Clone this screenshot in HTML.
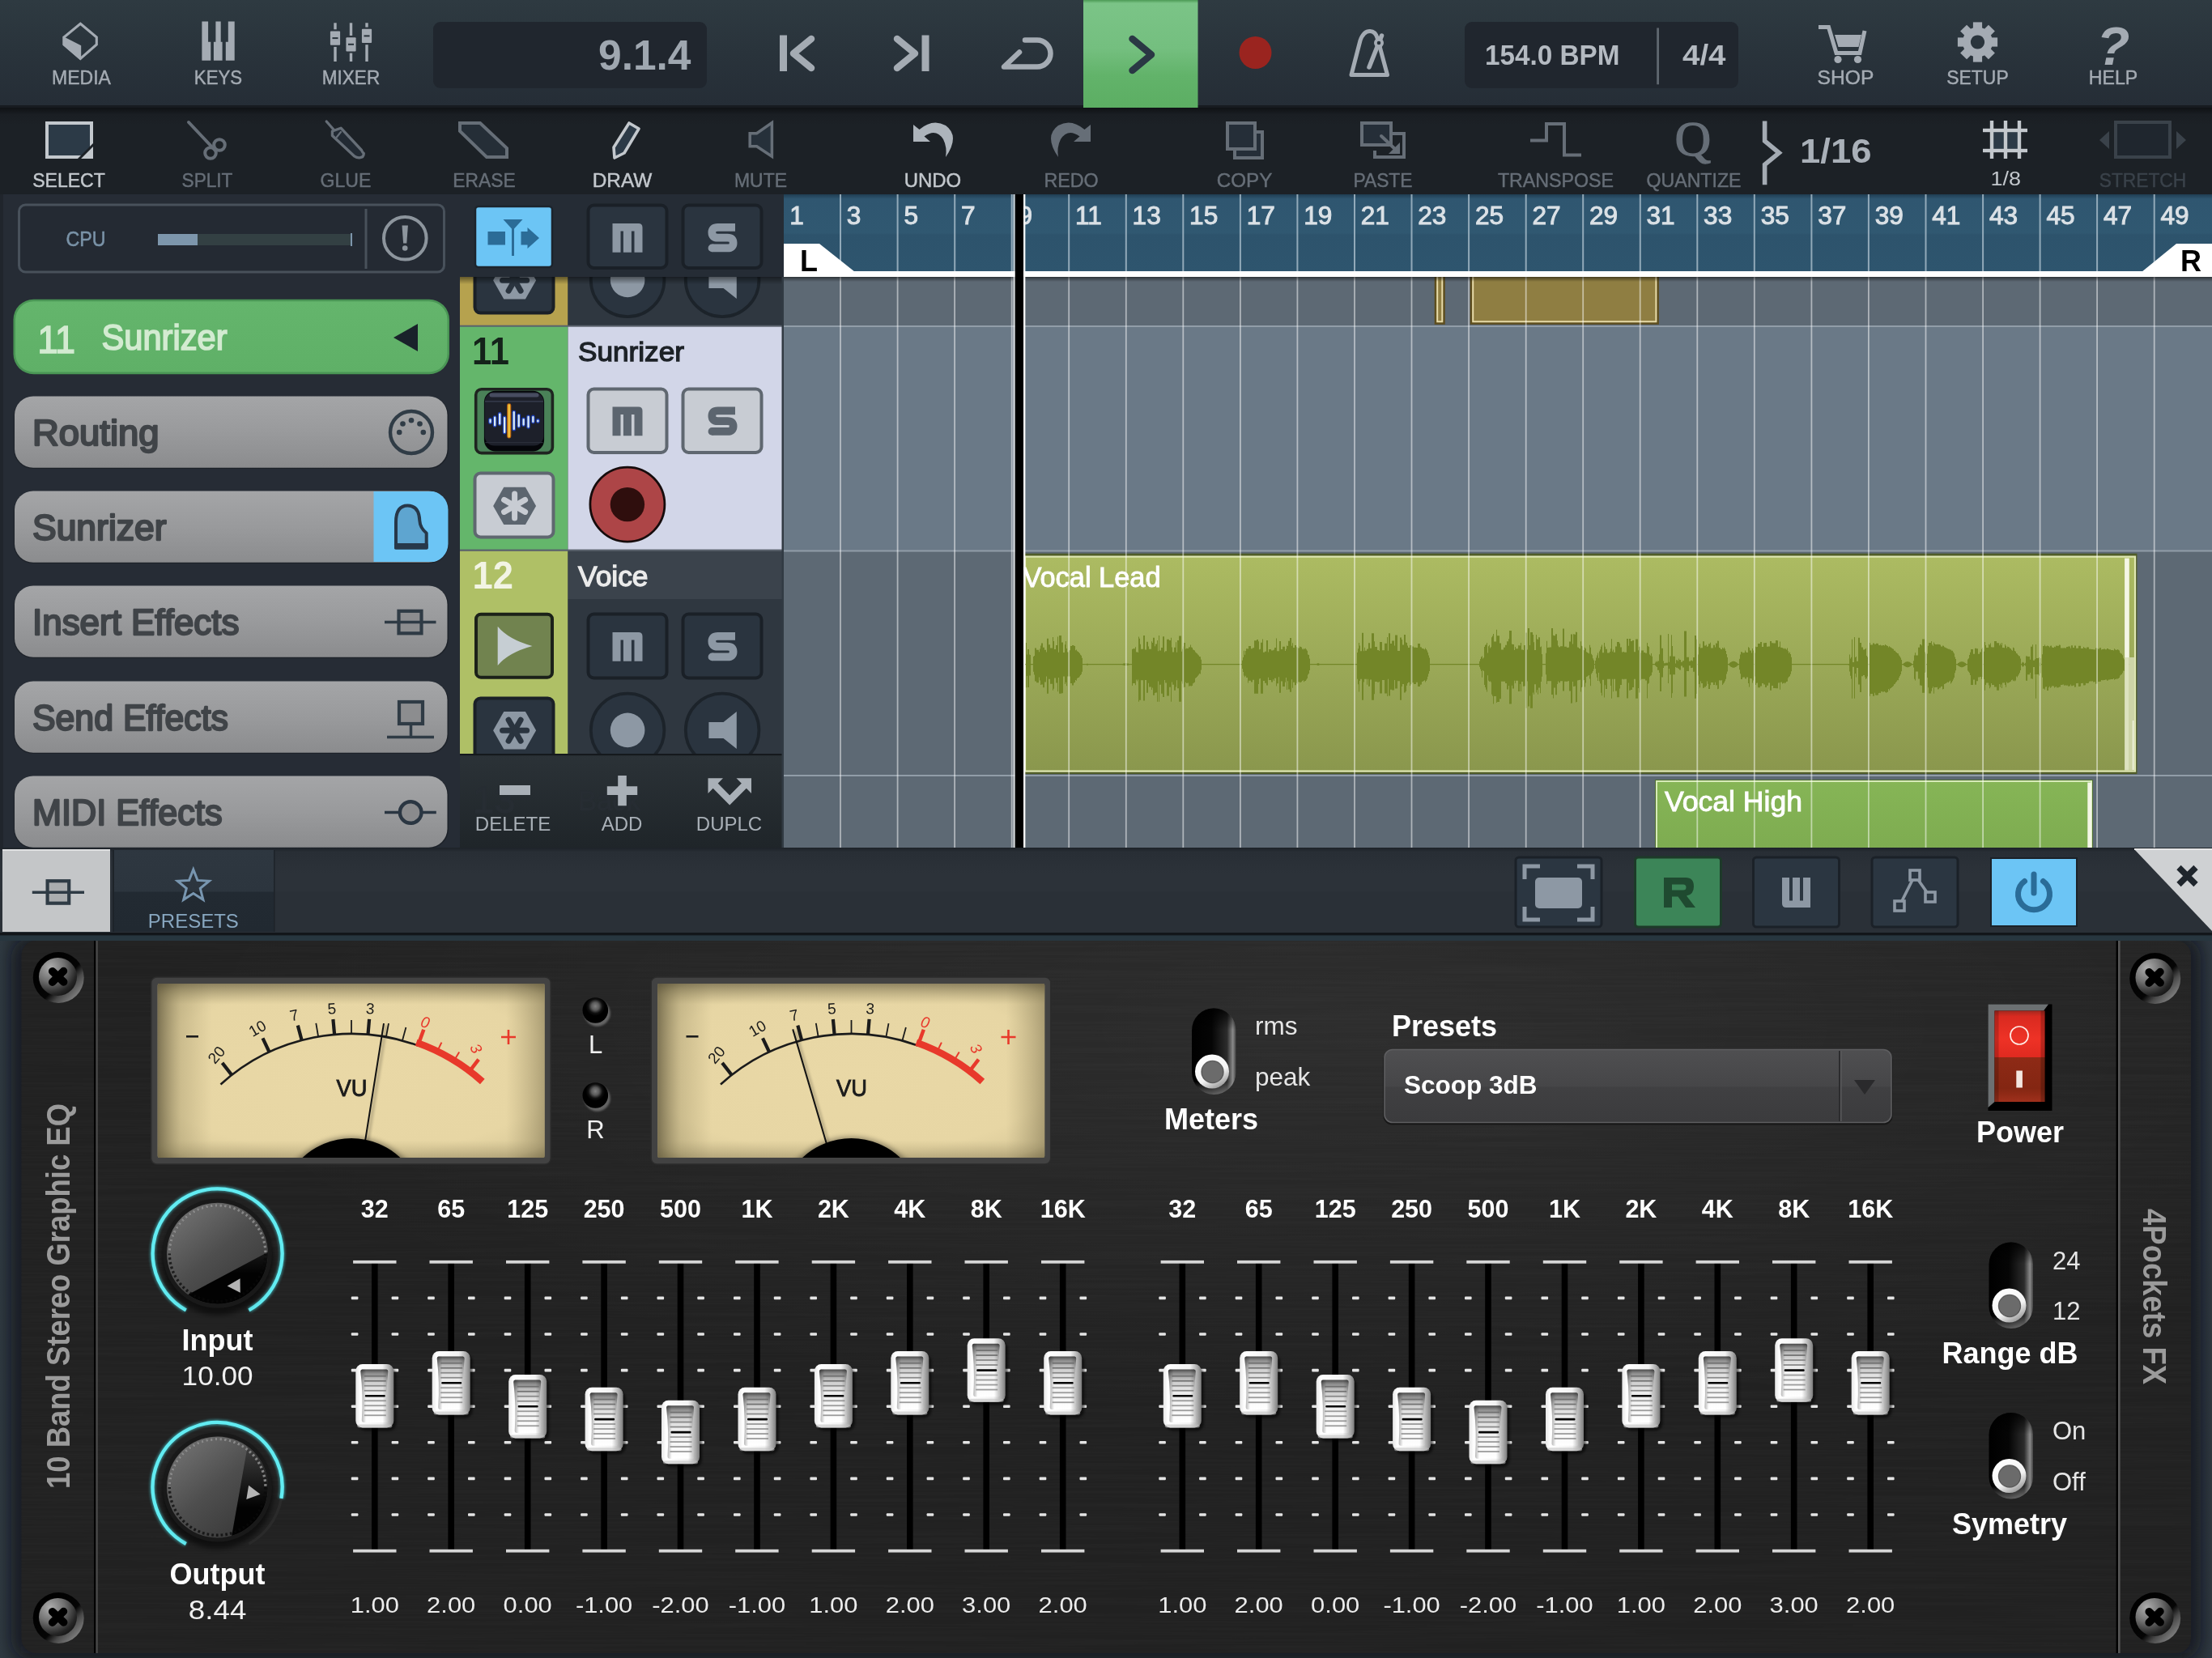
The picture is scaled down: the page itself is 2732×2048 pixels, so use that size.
<!DOCTYPE html>
<html lang="en"><head><meta charset="utf-8"><title>Cubasis - 10 Band Stereo Graphic EQ</title>
<style>
html,body{margin:0;padding:0;background:#232a31;}
body{width:2732px;height:2048px;position:relative;overflow:hidden;font-family:"Liberation Sans",sans-serif;}
svg{position:absolute;display:block;overflow:hidden;will-change:transform}
svg text{font-family:"Liberation Sans",sans-serif;}
.serif{font-family:"Liberation Serif",serif !important;}
</style></head><body>
<svg id="topbar" style="left:0;top:0" width="2732" height="240" viewBox="0 0 2732 240">
<defs>
<linearGradient id="gTop" x1="0" y1="0" x2="0" y2="1"><stop offset="0" stop-color="#2e3a41"/><stop offset="0.5" stop-color="#29333b"/><stop offset="1" stop-color="#252d36"/></linearGradient>
<linearGradient id="gTb" x1="0" y1="0" x2="0" y2="1"><stop offset="0" stop-color="#0f1215"/><stop offset="0.08" stop-color="#1a1e23"/><stop offset="0.2" stop-color="#1c2126"/><stop offset="1" stop-color="#1c2126"/></linearGradient>
<linearGradient id="gPlay" x1="0" y1="0" x2="0" y2="1"><stop offset="0" stop-color="#4c9a55"/><stop offset="0.03" stop-color="#7bc487"/><stop offset="0.45" stop-color="#74bf7f"/><stop offset="0.7" stop-color="#62b36a"/><stop offset="1" stop-color="#5cae63"/></linearGradient>
</defs>
<rect x="0" y="0" width="2732" height="133" fill="url(#gTop)"/>
<rect x="0" y="133" width="2732" height="107" fill="url(#gTb)"/>
<rect x="0" y="130" width="2732" height="3" fill="#171b20"/>
<path d="M99.3 29.2 L119.3 46 V55 L99.3 72.4 L79 55 V46 Z" fill="none" stroke="#a4abb3" stroke-width="3.1" stroke-linejoin="miter"/>
<path d="M77.6 44.8 L100.2 56.2 V73.2 L99.3 74.2 L77.6 55.6 Z" fill="#a4abb3"/>
<text x="100.5" y="104.3" font-size="24.3" fill="#a4abb3" font-weight="normal" text-anchor="middle" stroke="#a4abb3" stroke-width="0.45" textLength="72.9" lengthAdjust="spacingAndGlyphs">MEDIA</text>
<path d="M249.4 26.6 H257.1 V51.7 H260.3 V74.7 H249.4 Z M266.4 26.6 H272.7 V51.7 H274.6 V74.7 H263.9 V51.7 H266.4 Z M281.8 26.6 H289.7 V74.7 H278.8 V51.7 H281.8 Z" fill="#a4abb3"/>
<text x="269.5" y="104.3" font-size="24.3" fill="#a4abb3" font-weight="normal" text-anchor="middle" stroke="#a4abb3" stroke-width="0.45" textLength="59.3" lengthAdjust="spacingAndGlyphs">KEYS</text>
<rect x="412.3" y="28.3" width="3.4" height="47.7" fill="#a4abb3"/><rect x="407.9" y="36.3" width="12.2" height="21.6" fill="#2a333b"/><rect x="407.9" y="38.5" width="12.2" height="17.2" rx="1" fill="#a4abb3"/><rect x="410.5" y="46.1" width="7" height="2" fill="#29333b"/><rect x="431.8" y="28.3" width="3.4" height="47.7" fill="#a4abb3"/><rect x="427.4" y="44.0" width="12.2" height="21.6" fill="#2a333b"/><rect x="427.4" y="46.199999999999996" width="12.2" height="17.2" rx="1" fill="#a4abb3"/><rect x="430.0" y="53.8" width="7" height="2" fill="#29333b"/><rect x="451.3" y="28.3" width="3.4" height="47.7" fill="#a4abb3"/><rect x="446.9" y="33.599999999999994" width="12.2" height="21.6" fill="#2a333b"/><rect x="446.9" y="35.8" width="12.2" height="17.2" rx="1" fill="#a4abb3"/><rect x="449.5" y="43.4" width="7" height="2" fill="#29333b"/>
<text x="433.5" y="104.3" font-size="24.3" fill="#a4abb3" font-weight="normal" text-anchor="middle" stroke="#a4abb3" stroke-width="0.45" textLength="71.3" lengthAdjust="spacingAndGlyphs">MIXER</text>
<rect x="535" y="27" width="338" height="82" rx="9" fill="#20262e"/>
<text x="853.5" y="85.8" font-size="51" fill="#9fa7b0" font-weight="bold" text-anchor="end" textLength="114.5" lengthAdjust="spacingAndGlyphs">9.1.4</text>
<g stroke="#a4abb3" stroke-width="8.5" fill="none" stroke-linecap="round" stroke-linejoin="round"><path d="M1002 48 L980 66 L1002 84"/><path d="M1108 48 L1130 66 L1108 84"/></g>
<rect x="963" y="43.5" width="9" height="44.5" fill="#a4abb3"/><rect x="1138.5" y="43.5" width="9" height="44.5" fill="#a4abb3"/>
<path d="M1266 49.5 H1281 A16.5 16.5 0 0 1 1281 82.5 H1240 L1259 64.5" fill="none" stroke="#a4abb3" stroke-width="6.5" stroke-linecap="round" stroke-linejoin="round"/>
<rect x="1338" y="0" width="141.5" height="133" fill="url(#gPlay)"/>
<path d="M1398.5 48 L1422 67.5 L1398.5 87" fill="none" stroke="#2a3844" stroke-width="8.5" stroke-linecap="round" stroke-linejoin="round"/>
<circle cx="1550.5" cy="65" r="20" fill="#9a241f"/>
<g fill="none" stroke="#a4abb3" stroke-width="5" stroke-linejoin="round" stroke-linecap="round"><path d="M1669 92.5 L1680 50 Q1684 38.5 1692 38.5 Q1699 38.5 1701.5 48 L1713.5 92.5 Z"/><path d="M1691 83 L1706.5 44" stroke-width="5.5"/></g><circle cx="1703" cy="53" r="6" fill="#a4abb3"/><circle cx="1703" cy="53" r="2.3" fill="#29333b"/>
<rect x="1809" y="27" width="338" height="82" rx="9" fill="#20262e"/>
<text x="1834" y="80.3" font-size="35" fill="#b4bac1" font-weight="bold" text-anchor="start" textLength="166.5" lengthAdjust="spacingAndGlyphs">154.0 BPM</text>
<rect x="2046.2" y="34.5" width="2.8" height="69.8" fill="#5f676f"/>
<text x="2078" y="80.3" font-size="35" fill="#b4bac1" font-weight="bold" text-anchor="start" textLength="53.5" lengthAdjust="spacingAndGlyphs">4/4</text>
<g fill="none" stroke="#a4abb3" stroke-width="5" stroke-linejoin="miter"><path d="M2246 33.5 H2258.5 L2268 65.5 H2297 L2303 38"/></g><path d="M2266 43 H2299 L2295.5 58 H2270.5 Z" fill="#a4abb3"/><circle cx="2270" cy="73.5" r="4.6" fill="#a4abb3"/><circle cx="2294.5" cy="73.5" r="4.6" fill="#a4abb3"/>
<text x="2279.5" y="104.3" font-size="24.3" fill="#a4abb3" font-weight="normal" text-anchor="middle" stroke="#a4abb3" stroke-width="0.45" textLength="69.8" lengthAdjust="spacingAndGlyphs">SHOP</text>
<g transform="translate(2442.5 52)" fill="#a4abb3"><rect x="-5.6" y="-24.6" width="11.2" height="12" transform="rotate(0)"/><rect x="-5.6" y="-24.6" width="11.2" height="12" transform="rotate(45)"/><rect x="-5.6" y="-24.6" width="11.2" height="12" transform="rotate(90)"/><rect x="-5.6" y="-24.6" width="11.2" height="12" transform="rotate(135)"/><rect x="-5.6" y="-24.6" width="11.2" height="12" transform="rotate(180)"/><rect x="-5.6" y="-24.6" width="11.2" height="12" transform="rotate(225)"/><rect x="-5.6" y="-24.6" width="11.2" height="12" transform="rotate(270)"/><rect x="-5.6" y="-24.6" width="11.2" height="12" transform="rotate(315)"/><path d="M0 -18.5 A18.5 18.5 0 1 0 0.01 -18.5 Z M0 -8.6 A8.6 8.6 0 1 1 -0.01 -8.6 Z" fill-rule="evenodd"/></g>
<text x="2442.5" y="104.3" font-size="24.3" fill="#a4abb3" font-weight="normal" text-anchor="middle" stroke="#a4abb3" stroke-width="0.45" textLength="76.4" lengthAdjust="spacingAndGlyphs">SETUP</text>
<text x="2610" y="80" font-size="67" fill="#a4abb3" font-weight="bold" text-anchor="middle" font-style="italic">?</text>
<text x="2610" y="104.3" font-size="24.3" fill="#a4abb3" font-weight="normal" text-anchor="middle" stroke="#a4abb3" stroke-width="0.45" textLength="60.5" lengthAdjust="spacingAndGlyphs">HELP</text>
<rect x="58" y="152" width="55" height="42" fill="#2c3a47" stroke="#c3c8cd" stroke-width="4"/><path d="M99 196 L115 180 V196 Z" fill="#c3c8cd" stroke="#1c2126" stroke-width="0"/><path d="M96 198 L117 177" stroke="#1c2126" stroke-width="3" />
<text x="85" y="231" font-size="24.4" fill="#c3c8cd" font-weight="normal" text-anchor="middle" stroke="#c3c8cd" stroke-width="0.45" textLength="89.7" lengthAdjust="spacingAndGlyphs">SELECT</text>
<g fill="none" stroke="#666e77" stroke-width="4" stroke-linecap="round"><path d="M233 151 L266 186"/><circle cx="271" cy="179" r="6.8"/><circle cx="260" cy="189" r="6.8"/></g>
<text x="256" y="231" font-size="24.4" fill="#666e77" font-weight="normal" text-anchor="middle" stroke="#666e77" stroke-width="0.45" textLength="62.8" lengthAdjust="spacingAndGlyphs">SPLIT</text>
<g fill="#222a33" stroke="#666e77" stroke-width="3.3" stroke-linejoin="round" stroke-linecap="round"><path d="M403.2 150 L412 160" /><path d="M410.4 162 L421 158.2 L446.5 185.5 Q447.5 188 449.3 189.5 Q449.3 194.5 444 194.8 Q440.5 195 438 193.2 L410.4 167.5 Z"/><path d="M415.8 169.5 L421 163" stroke-width="2.2"/></g>
<text x="427" y="231" font-size="24.4" fill="#666e77" font-weight="normal" text-anchor="middle" stroke="#666e77" stroke-width="0.45" textLength="62.8" lengthAdjust="spacingAndGlyphs">GLUE</text>
<path d="M568 152 H593 L626 183 V194 H601 L568 162 Z" fill="#252e37" stroke="#666e77" stroke-width="4" stroke-linejoin="miter"/>
<text x="598" y="231" font-size="24.4" fill="#666e77" font-weight="normal" text-anchor="middle" stroke="#666e77" stroke-width="0.45" textLength="77.3" lengthAdjust="spacingAndGlyphs">ERASE</text>
<path d="M777 152 L789 159 L771 189 L759 195 L758 182 Z" fill="#2c3a47" stroke="#c3c8cd" stroke-width="3.6" stroke-linejoin="round"/>
<text x="768.5" y="231" font-size="24.4" fill="#c3c8cd" font-weight="normal" text-anchor="middle" stroke="#c3c8cd" stroke-width="0.45" textLength="73.5" lengthAdjust="spacingAndGlyphs">DRAW</text>
<path d="M953.4 151.6 V193.2 L934.6 180.7 H926.2 V164.7 H934.6 Z" fill="#26303a" stroke="#666e77" stroke-width="3.5" stroke-linejoin="miter"/>
<text x="939.5" y="231" font-size="24.4" fill="#666e77" font-weight="normal" text-anchor="middle" stroke="#666e77" stroke-width="0.45" textLength="65.0" lengthAdjust="spacingAndGlyphs">MUTE</text>
<g transform=""><path d="M1128 154 L1128 175 L1149 175 L1141.5 168.5 Q1156 158 1165 172 Q1170 182 1168 194 Q1186 168 1168 155 Q1152 146 1135.5 160 Z" fill="#adb4bb"/></g>
<text x="1152" y="231" font-size="24.4" fill="#c3c8cd" font-weight="normal" text-anchor="middle" stroke="#c3c8cd" stroke-width="0.45" textLength="70.4" lengthAdjust="spacingAndGlyphs">UNDO</text>
<g transform="translate(171 0)"><g transform="translate(1152 0) scale(-1 1) translate(-1152 0)"><path d="M1128 154 L1128 175 L1149 175 L1141.5 168.5 Q1156 158 1165 172 Q1170 182 1168 194 Q1186 168 1168 155 Q1152 146 1135.5 160 Z" fill="#666e77"/></g></g>
<text x="1323" y="231" font-size="24.4" fill="#666e77" font-weight="normal" text-anchor="middle" stroke="#666e77" stroke-width="0.45" textLength="67.2" lengthAdjust="spacingAndGlyphs">REDO</text>
<g fill="#252e38" stroke="#666e77" stroke-width="4"><rect x="1525" y="163" width="34" height="32"/><rect x="1516" y="152" width="34" height="32"/></g>
<text x="1537" y="231" font-size="24.4" fill="#666e77" font-weight="normal" text-anchor="middle" stroke="#666e77" stroke-width="0.45" textLength="68.5" lengthAdjust="spacingAndGlyphs">COPY</text>
<g fill="none" stroke="#666e77" stroke-width="4"><path d="M1713 165 H1734 V194 H1698 V186"/><rect x="1682" y="152" width="36" height="27" fill="#252e38"/><path d="M1706 168 L1726 187" stroke-linecap="round"/></g><path d="M1729 176 V190 H1715 Z" fill="#666e77"/>
<text x="1708" y="231" font-size="24.4" fill="#666e77" font-weight="normal" text-anchor="middle" stroke="#666e77" stroke-width="0.45" textLength="72.9" lengthAdjust="spacingAndGlyphs">PASTE</text>
<path d="M1890 173.5 H1910 V153 H1932 V191.5 H1953" fill="none" stroke="#666e77" stroke-width="4"/>
<text x="1921.5" y="231" font-size="24.4" fill="#666e77" font-weight="normal" text-anchor="middle" stroke="#666e77" stroke-width="0.45" textLength="143.2" lengthAdjust="spacingAndGlyphs">TRANSPOSE</text>
<text class="serif" x="2091" y="192" font-size="62" fill="#666e77" text-anchor="middle" stroke="#666e77" stroke-width="1.3">Q</text>
<text x="2092" y="231" font-size="24.4" fill="#666e77" font-weight="normal" text-anchor="middle" stroke="#666e77" stroke-width="0.45" textLength="116.9" lengthAdjust="spacingAndGlyphs">QUANTIZE</text>
<path d="M2179.6 149.6 V174.2 L2197.3 188.8 L2179.6 203.3 V228.3" fill="none" stroke="#a4abb3" stroke-width="5.6"/>
<text x="2223" y="200.6" font-size="42" fill="#a9b0b8" font-weight="bold" text-anchor="start" textLength="88.5" lengthAdjust="spacingAndGlyphs">1/16</text>
<rect x="2460" y="161" width="34" height="25" fill="#2c3a47"/><g fill="#c3c8cd"><rect x="2457.8" y="149" width="4.4" height="47" /><rect x="2474.8" y="149" width="4.4" height="47" /><rect x="2491.8" y="149" width="4.4" height="47" /><rect x="2449" y="158.8" width="55" height="4.4" /><rect x="2449" y="183.8" width="55" height="4.4" /></g>
<text x="2477.3" y="229.3" font-size="24.6" fill="#c3c8cd" font-weight="normal" text-anchor="middle" textLength="37.5" lengthAdjust="spacingAndGlyphs">1/8</text>
<rect x="2613" y="151" width="67" height="43" fill="#1f262e" stroke="#3a424a" stroke-width="4"/><path d="M2605 162 V184 L2593 173 Z M2688 162 V184 L2700 173 Z" fill="#3a424a"/>
<text x="2646.5" y="231" font-size="24.4" fill="#3a424a" font-weight="normal" text-anchor="middle" stroke="#3a424a" stroke-width="0.45" textLength="107.5" lengthAdjust="spacingAndGlyphs">STRETCH</text>
</svg>
<svg id="inspector" style="left:0;top:240px" width="568" height="807" viewBox="0 240 568 807">
<defs>
<linearGradient id="gBtn" x1="0" y1="0" x2="0" y2="1"><stop offset="0" stop-color="#a4a5a7"/><stop offset="0.5" stop-color="#999a9c"/><stop offset="1" stop-color="#8b8c8e"/></linearGradient>
<linearGradient id="gGrn" x1="0" y1="0" x2="0" y2="1"><stop offset="0" stop-color="#64b56c"/><stop offset="1" stop-color="#5fb067"/></linearGradient>
<clipPath id="cSun"><rect x="18" y="606.5" width="535.5" height="88.3" rx="23"/></clipPath>
</defs>
<rect x="0" y="240" width="568" height="807" fill="#262c35"/>
<rect x="0" y="240" width="4" height="807" fill="#20252c"/>
<rect x="23.5" y="253" width="525" height="83" rx="8" fill="#242a33" stroke="#48515b" stroke-width="3"/>
<text x="81.5" y="303.8" font-size="25.2" fill="#7a93a8" font-weight="normal" text-anchor="start" textLength="49" lengthAdjust="spacingAndGlyphs" stroke="#7a93a8" stroke-width="0.5">CPU</text>
<rect x="195" y="289" width="240" height="14" fill="#334043"/><rect x="195" y="289" width="49" height="14" fill="#7d96ac"/><rect x="433" y="288" width="2" height="16" fill="#7d96ac"/>
<rect x="450.5" y="258" width="3" height="74" fill="#48515b"/>
<circle cx="500.3" cy="294.3" r="26.3" fill="none" stroke="#8d959d" stroke-width="4"/><path d="M496.5 278.5 h7.4 l-1.6 22 h-4.2 Z" fill="#8d959d"/><circle cx="500.2" cy="306.5" r="3.3" fill="#8d959d"/>
<rect x="16.5" y="369.8" width="538.5" height="92.4" rx="25" fill="#4a9655"/>
<rect x="19" y="372.3" width="533.5" height="87.2" rx="22.5" fill="url(#gGrn)"/>
<text x="46.5" y="436" font-size="48.5" fill="#d3ebd1" font-weight="normal" text-anchor="start" stroke="#d3ebd1" stroke-width="1.7" textLength="46.5" lengthAdjust="spacingAndGlyphs">11</text>
<text x="125.5" y="432" font-size="43.6" fill="#d3ebd1" font-weight="normal" text-anchor="start" stroke="#d3ebd1" stroke-width="1.7" textLength="155" lengthAdjust="spacingAndGlyphs">Sunrizer</text>
<path d="M516 400 V434 L486 417 Z" fill="#19222a"/>
<rect x="17" y="490" width="537" height="89" rx="24" fill="#1d2229"/><rect x="18" y="489.5" width="534.5" height="88.3" rx="23" fill="url(#gBtn)"/><text x="40" y="550.2" font-size="43.8" fill="#404448" font-weight="normal" text-anchor="start" stroke="#404448" stroke-width="2.3" stroke-linejoin="round" textLength="156.5" lengthAdjust="spacingAndGlyphs">Routing</text>
<circle cx="508" cy="534" r="26" fill="none" stroke="#303c46" stroke-width="4.4"/><circle cx="522.8" cy="534.0" r="3.3" fill="#303c46"/><circle cx="518.5" cy="523.5" r="3.3" fill="#303c46"/><circle cx="508.0" cy="519.2" r="3.3" fill="#303c46"/><circle cx="497.5" cy="523.5" r="3.3" fill="#303c46"/><circle cx="493.2" cy="534.0" r="3.3" fill="#303c46"/>
<rect x="17" y="607" width="537" height="89" rx="24" fill="#1d2229"/><rect x="18" y="606.5" width="534.5" height="88.3" rx="23" fill="url(#gBtn)"/><text x="40" y="667.2" font-size="43.8" fill="#404448" font-weight="normal" text-anchor="start" stroke="#404448" stroke-width="2.3" stroke-linejoin="round" textLength="165.5" lengthAdjust="spacingAndGlyphs">Sunrizer</text>
<g clip-path="url(#cSun)"><rect x="461.5" y="607" width="100" height="87" fill="#6cc5f5"/></g>
<path d="M489 676.5 V645 Q489 624.6 503.5 624.6 Q517.5 624.6 518.3 643 Q518.8 652 526.7 658.5 V676.5 Z" fill="#5ea5d0" stroke="#27384a" stroke-width="4" stroke-linejoin="round"/><rect x="487" y="671" width="41.7" height="7.6" rx="1.5" fill="#27384a"/>
<rect x="17" y="724" width="537" height="89" rx="24" fill="#1d2229"/><rect x="18" y="723.5" width="534.5" height="88.3" rx="23" fill="url(#gBtn)"/><text x="40" y="784.2" font-size="43.8" fill="#404448" font-weight="normal" text-anchor="start" stroke="#404448" stroke-width="2.3" stroke-linejoin="round" textLength="255.5" lengthAdjust="spacingAndGlyphs">Insert Effects</text>
<rect x="492.5" y="754.8" width="28" height="27.5" fill="#8c8d8f" stroke="#2f3b45" stroke-width="4.2"/><path d="M475 768.5 H538.5" stroke="#2f3b45" stroke-width="3.5"/>
<rect x="17" y="842" width="537" height="89" rx="24" fill="#1d2229"/><rect x="18" y="841.5" width="534.5" height="88.3" rx="23" fill="url(#gBtn)"/><text x="40" y="902.2" font-size="43.8" fill="#404448" font-weight="normal" text-anchor="start" stroke="#404448" stroke-width="2.3" stroke-linejoin="round" textLength="242" lengthAdjust="spacingAndGlyphs">Send Effects</text>
<rect x="493" y="867" width="29" height="27" fill="#8c8d8f" stroke="#2f3b45" stroke-width="4.2"/><path d="M507.5 896 V910 M478 910.5 H536" stroke="#2f3b45" stroke-width="3.5" fill="none"/>
<rect x="17" y="959" width="537" height="89" rx="24" fill="#1d2229"/><rect x="18" y="958.5" width="534.5" height="88.3" rx="23" fill="url(#gBtn)"/><text x="40" y="1019.2" font-size="43.8" fill="#404448" font-weight="normal" text-anchor="start" stroke="#404448" stroke-width="2.3" stroke-linejoin="round" textLength="234.5" lengthAdjust="spacingAndGlyphs">MIDI Effects</text>
<path d="M475 1003.5 H538.8" stroke="#2a3642" stroke-width="3.5"/><circle cx="507.2" cy="1003.5" r="13.3" fill="#8a8b8d" stroke="#2a3642" stroke-width="4.4"/>
</svg>
<svg id="tracklist" style="left:568px;top:240px" width="400" height="807" viewBox="568 240 400 807">
<defs>
<linearGradient id="gHdrSh" x1="0" y1="0" x2="0" y2="1"><stop offset="0" stop-color="#000" stop-opacity="0.45"/><stop offset="1" stop-color="#000" stop-opacity="0"/></linearGradient>
<linearGradient id="gBot" x1="0" y1="0" x2="0" y2="1"><stop offset="0" stop-color="#2b3237"/><stop offset="1" stop-color="#1f2529"/></linearGradient>
<clipPath id="cT10"><rect x="568" y="342" width="400" height="60"/></clipPath>
<clipPath id="cT12"><rect x="568" y="680" width="400" height="251"/></clipPath>
</defs>
<rect x="568" y="342" width="133.5" height="60" fill="#b6a24e"/><rect x="701.5" y="342" width="266" height="60" fill="#2f3740"/>
<g clip-path="url(#cT10)"><rect x="586.5" y="306.6" width="97" height="80" rx="7" fill="#2a343f" stroke="#1a2027" stroke-width="4"/><path d="M609.1 346.2 L622.3 323.0 L648.9 323.0 L662.1 346.2 L648.9 369.4 L622.3 369.4 Z" fill="#8d98a4"/><g fill="none" stroke="#2a343f" stroke-width="7" stroke-linecap="round"><path d="M643.1 333.2 L628.1 359.2"/><path d="M650.6 346.2 L620.6 346.2"/><path d="M643.1 359.2 L628.1 333.2"/></g><circle cx="775.1" cy="345.9" r="45.3" fill="#2a343f" stroke="#1c232a" stroke-width="3.8"/><circle cx="892.1" cy="345.9" r="45.3" fill="#2a343f" stroke="#1c232a" stroke-width="3.8"/><circle cx="775.1" cy="345.9" r="21.3" fill="#8d98a4"/><path d="M875.4 335.9 H893.5 L909.8 322.9 V368.9 L893.5 355.9 H875.4 Z" fill="#8d98a4"/></g>
<rect x="568" y="402" width="133.5" height="278" fill="#64b66b"/><rect x="701.5" y="402" width="266" height="278" fill="#d2d6e8"/>
<rect x="568" y="401.7" width="400" height="2" fill="#5a626c"/>
<text x="583" y="449.5" font-size="48.5" fill="#14231a" font-weight="bold" text-anchor="start" textLength="46" lengthAdjust="spacingAndGlyphs">11</text>
<text x="714" y="446" font-size="34" fill="#1d2227" font-weight="normal" text-anchor="start" stroke="#1d2227" stroke-width="1.3" textLength="131" lengthAdjust="spacingAndGlyphs">Sunrizer</text>
<rect x="587.7" y="480.8" width="94.7" height="78.8" rx="7" fill="#4a8258" stroke="#1f2420" stroke-width="3.6"/>
<rect x="597.9" y="482.7" width="74.2" height="74.8" rx="14" fill="#05060a"/>
<rect x="598.6" y="484.5" width="72.8" height="66" rx="12" fill="#1d202a"/>
<rect x="604.5" y="485.4" width="61" height="5.2" rx="2.5" fill="#474c60"/><rect x="599" y="495.2" width="72" height="1.3" fill="#3d4254" opacity="0.9"/><rect x="599.5" y="546" width="71" height="1.2" fill="#2a2e3a"/>
<rect x="603.2" y="516.0" width="4.6" height="8.0" rx="2.3" fill="#1d3fb8"/><rect x="604.4" y="517.4" width="2.3" height="5.2" rx="1.1" fill="#dcedf2"/><rect x="608.8" y="513.2" width="4.6" height="14.6" rx="2.3" fill="#1d3fb8"/><rect x="610.0" y="514.6" width="2.3" height="11.8" rx="1.1" fill="#dcedf2"/><rect x="614.9" y="509.1" width="4.6" height="16.8" rx="2.3" fill="#1d3fb8"/><rect x="616.1" y="510.5" width="2.3" height="14.0" rx="1.1" fill="#dcedf2"/><rect x="620.8" y="513.6" width="4.6" height="22.8" rx="2.3" fill="#1d3fb8"/><rect x="622.0" y="515.0" width="2.3" height="20.0" rx="1.1" fill="#dcedf2"/><rect x="632.4" y="506.7" width="4.6" height="25.8" rx="2.3" fill="#1d3fb8"/><rect x="633.6" y="508.1" width="2.3" height="23.0" rx="1.1" fill="#dcedf2"/><rect x="638.4" y="510.7" width="4.6" height="18.2" rx="2.3" fill="#1d3fb8"/><rect x="639.6" y="512.1" width="2.3" height="15.4" rx="1.1" fill="#dcedf2"/><rect x="644.3" y="515.5" width="4.6" height="11.6" rx="2.3" fill="#1d3fb8"/><rect x="645.5" y="516.9" width="2.3" height="8.8" rx="1.1" fill="#dcedf2"/><rect x="650.2" y="512.4" width="4.6" height="17.4" rx="2.3" fill="#1d3fb8"/><rect x="651.4" y="513.8" width="2.3" height="14.6" rx="1.1" fill="#dcedf2"/><rect x="656.1" y="512.6" width="4.6" height="10.8" rx="2.3" fill="#1d3fb8"/><rect x="657.2" y="514.0" width="2.3" height="8.0" rx="1.1" fill="#dcedf2"/><rect x="662.1" y="517.1" width="4.6" height="5.8" rx="2.3" fill="#1d3fb8"/><rect x="663.2" y="518.5" width="2.3" height="3.0" rx="1.1" fill="#dcedf2"/>
<rect x="626.1" y="498.3" width="5.2" height="43.2" rx="2.4" fill="#b9600f"/><rect x="627.3" y="499.3" width="2.9" height="41.2" rx="1.4" fill="#edc03a"/>
<rect x="726.5" y="480.5" width="97" height="78.5" rx="7" fill="#c8ccd3" stroke="#5f6770" stroke-width="4"/><path d="M756.5 538.1999999999999 V502.59999999999997 H788.5 Q793.5 502.59999999999997 793.5 507.59999999999997 V538.1999999999999 h-10 V512.0999999999999 h-3.6 V538.1999999999999 h-10 V512.0999999999999 h-3.4 V538.1999999999999 Z" fill="#5c656f"/>
<rect x="843.5" y="480.5" width="97" height="78.5" rx="7" fill="#c8ccd3" stroke="#5f6770" stroke-width="4"/><path d="M908.0 507.3 H886.5 Q879.4 507.3 879.4 513.7 Q879.4 520.1 886.5 520.1 H898.5 Q905.6 520.1 905.6 526.5 Q905.6 532.9 898.5 532.9 H879.5" fill="none" stroke="#5c656f" stroke-width="9.8" stroke-linejoin="round"/><circle cx="879.5" cy="532.9" r="4.9" fill="#5c656f"/>
<rect x="586.5" y="584.5" width="97" height="79" rx="7" fill="#c8ccd3" stroke="#5f6770" stroke-width="4"/><path d="M609.1 624.9 L622.3 601.7 L648.9 601.7 L662.1 624.9 L648.9 648.1 L622.3 648.1 Z" fill="#5c656f"/><g fill="none" stroke="#c8ccd3" stroke-width="7" stroke-linecap="round"><path d="M635.6 609.9 L635.6 639.9"/><path d="M648.6 617.4 L622.6 632.4"/><path d="M648.6 632.4 L622.6 617.4"/></g>
<circle cx="774.9" cy="623.1" r="46" fill="#ad4547" stroke="#160c0c" stroke-width="2.8"/><circle cx="774.9" cy="623.1" r="21.2" fill="#2f0e0d"/>
<rect x="568" y="680" width="133.5" height="278" fill="#afc066"/><rect x="701.5" y="680" width="266" height="60" fill="#3b434c"/><rect x="701.5" y="740" width="266" height="218" fill="#2f3740"/>
<rect x="568" y="678.6" width="400" height="2.2" fill="#5a626c"/>
<text x="583.5" y="727" font-size="48.5" fill="#f2f4e4" font-weight="bold" text-anchor="start" textLength="50.5" lengthAdjust="spacingAndGlyphs">12</text>
<text x="714" y="724.3" font-size="34.3" fill="#ebebeb" font-weight="normal" text-anchor="start" stroke="#ebebeb" stroke-width="1.3" textLength="86.5" lengthAdjust="spacingAndGlyphs">Voice</text>
<rect x="588" y="758.7" width="94" height="78" rx="6" fill="#71834f" stroke="#1b2119" stroke-width="4"/>
<path d="M614.7 773.8 Q628 790 657.5 798 Q628 806 614.7 822 Z" fill="#c6ced3"/>
<rect x="726.5" y="758.5" width="97" height="79" rx="7" fill="#2a343f" stroke="#1a2027" stroke-width="4"/><path d="M756.5 816.6999999999999 V781.1 H788.5 Q793.5 781.1 793.5 786.1 V816.6999999999999 h-10 V790.6 h-3.6 V816.6999999999999 h-10 V790.6 h-3.4 V816.6999999999999 Z" fill="#8d98a4"/>
<rect x="843.5" y="758.5" width="97" height="79" rx="7" fill="#2a343f" stroke="#1a2027" stroke-width="4"/><path d="M908.0 785.8000000000001 H886.5 Q879.4 785.8000000000001 879.4 792.2 Q879.4 798.6 886.5 798.6 H898.5 Q905.6 798.6 905.6 805.0 Q905.6 811.4 898.5 811.4 H879.5" fill="none" stroke="#8d98a4" stroke-width="9.8" stroke-linejoin="round"/><circle cx="879.5" cy="811.4" r="4.9" fill="#8d98a4"/>
<g clip-path="url(#cT12)"><rect x="586.5" y="862.6" width="97" height="80" rx="7" fill="#2a343f" stroke="#1a2027" stroke-width="4"/><path d="M609.1 902.2 L622.3 879.0 L648.9 879.0 L662.1 902.2 L648.9 925.4 L622.3 925.4 Z" fill="#8d98a4"/><g fill="none" stroke="#2a343f" stroke-width="7" stroke-linecap="round"><path d="M643.1 889.2 L628.1 915.2"/><path d="M650.6 902.2 L620.6 902.2"/><path d="M643.1 915.2 L628.1 889.2"/></g><circle cx="775.1" cy="901.9" r="45.3" fill="#2a343f" stroke="#1c232a" stroke-width="3.8"/><circle cx="892.1" cy="901.9" r="45.3" fill="#2a343f" stroke="#1c232a" stroke-width="3.8"/><circle cx="775.1" cy="901.9" r="21.3" fill="#8d98a4"/><path d="M875.4 891.9 H893.5 L909.8 878.9 V924.9 L893.5 911.9 H875.4 Z" fill="#8d98a4"/></g>
<rect x="568" y="240" width="400" height="102" fill="#252c35"/>
<rect x="568" y="342" width="400" height="9" fill="url(#gHdrSh)"/>
<rect x="587" y="255" width="95" height="75" rx="4" fill="#6cc5f5" stroke="#1c242c" stroke-width="2.5"/>
<rect x="602.5" y="286" width="21.5" height="16.5" fill="#2b6c97"/><path d="M621.5 271 H645.5 L635 282.5 V316 H632 V282.5 Z" fill="#2b6c97"/><path d="M643.5 286 H651.5 V281 L666 294 L651.5 307 V302.5 H643.5 Z" fill="#2b6c97"/>
<rect x="726.5" y="253.5" width="97" height="77.5" rx="7" fill="#2a343f" stroke="#1a2027" stroke-width="4"/><path d="M756.5 311.7 V276.09999999999997 H788.5 Q793.5 276.09999999999997 793.5 281.09999999999997 V311.7 h-10 V285.59999999999997 h-3.6 V311.7 h-10 V285.59999999999997 h-3.4 V311.7 Z" fill="#8d98a4"/>
<rect x="843.5" y="253.5" width="97" height="77.5" rx="7" fill="#2a343f" stroke="#1a2027" stroke-width="4"/><path d="M908.0 280.8 H886.5 Q879.4 280.8 879.4 287.20000000000005 Q879.4 293.6 886.5 293.6 H898.5 Q905.6 293.6 905.6 300.0 Q905.6 306.40000000000003 898.5 306.40000000000003 H879.5" fill="none" stroke="#8d98a4" stroke-width="9.8" stroke-linejoin="round"/><circle cx="879.5" cy="306.40000000000003" r="4.9" fill="#8d98a4"/>
<rect x="568" y="932" width="400" height="115" fill="url(#gBot)"/><rect x="568" y="931" width="400" height="2.2" fill="#15191d"/>
<text x="584" y="1004" font-size="47" fill="#272d33" font-weight="normal" text-anchor="start" stroke="#272d33" stroke-width="1.4">13</text>
<text x="714" y="1001" font-size="34.5" fill="#272d33" font-weight="normal" text-anchor="start" stroke="#272d33" stroke-width="1.1">Back</text>
<rect x="617" y="970" width="38" height="12" fill="#a9b0b7"/>
<path d="M763.2 958 h10.6 v13.3 h13.4 v10.6 h-13.4 v13.3 h-10.6 v-13.3 h-13.4 v-10.6 h13.4 Z" fill="#a9b0b7"/>
<path d="M881.5 968.5 L901.2 988.5 L921 968.5" fill="none" stroke="#a9b0b7" stroke-width="8.6"/><path d="M874.5 961.3 H893 L874.5 980 Z M928 961.3 H909.5 L928 980 Z" fill="#a9b0b7"/>
<text x="633.5" y="1026" font-size="24" fill="#a9b0b7" font-weight="normal" text-anchor="middle" >DELETE</text>
<text x="768" y="1026" font-size="24" fill="#a9b0b7" font-weight="normal" text-anchor="middle" >ADD</text>
<text x="900.5" y="1026" font-size="24" fill="#a9b0b7" font-weight="normal" text-anchor="middle" >DUPLC</text>
<rect x="965.5" y="342" width="2.5" height="705" fill="#313a43"/>
</svg>
<svg id="arrange" style="left:968px;top:240px" width="1764" height="807" viewBox="968 240 1764 807">
<defs>
<linearGradient id="gRul" x1="0" y1="0" x2="0" y2="1"><stop offset="0" stop-color="#1f3d52"/><stop offset="0.06" stop-color="#2f5670"/><stop offset="0.5" stop-color="#305871"/><stop offset="0.52" stop-color="#2d536c"/><stop offset="1" stop-color="#2e556e"/></linearGradient>
<linearGradient id="gVL" x1="0" y1="0" x2="0" y2="1"><stop offset="0" stop-color="#acbb62"/><stop offset="1" stop-color="#8a974d"/></linearGradient>
<linearGradient id="gVH" x1="0" y1="0" x2="0" y2="1"><stop offset="0" stop-color="#86b556"/><stop offset="1" stop-color="#7dab50"/></linearGradient>
<linearGradient id="gRSh" x1="0" y1="0" x2="0" y2="1"><stop offset="0" stop-color="#000" stop-opacity="0.5"/><stop offset="1" stop-color="#000" stop-opacity="0"/></linearGradient>
</defs>
<rect x="968" y="342" width="1764" height="61" fill="#5d6974"/>
<rect x="968" y="403" width="1764" height="277" fill="#6a7987"/>
<rect x="968" y="680" width="1764" height="278" fill="#5d6974"/>
<rect x="968" y="958" width="1764" height="89" fill="#5d6974"/>
<rect x="968" y="402" width="1764" height="2" fill="#919da8"/>
<rect x="968" y="679.5" width="1764" height="2" fill="#919da8"/>
<rect x="968" y="957" width="1764" height="2" fill="#919da8"/>
<rect x="1771.7" y="340" width="13.1" height="60.8" fill="#5e4e1e"/><rect x="1775.2" y="340" width="6.1" height="57.3" fill="#8f7e42" stroke="#e8dcaa" stroke-width="2"/>
<rect x="1815.7" y="340" width="233.2" height="60.8" fill="#5e4e1e"/><rect x="1819.2" y="340" width="226.2" height="57.3" fill="#8f7e42" stroke="#e8dcaa" stroke-width="2"/>
<rect x="1264" y="683.7" width="1375.5" height="272.4" fill="#505d28"/>
<rect x="1266" y="687.6" width="1371" height="265" fill="url(#gVL)" stroke="#dfe7b3" stroke-width="2.2"/>
<path d="M1266 820.7 L1266 820.1 L1267 820.1 L1267 794.0 L1268 794.0 L1268 808.4 L1269 808.4 L1269 801.9 L1270 801.9 L1270 801.9 L1271 801.9 L1271 808.6 L1272 808.6 L1272 808.9 L1273 808.9 L1273 820.1 L1274 820.1 L1274 820.1 L1275 820.1 L1275 820.1 L1276 820.1 L1276 810.9 L1277 810.9 L1277 809.9 L1278 809.9 L1278 800.6 L1279 800.6 L1279 800.6 L1280 800.6 L1280 802.7 L1281 802.7 L1281 802.7 L1282 802.7 L1282 802.7 L1283 802.7 L1283 805.3 L1284 805.3 L1284 801.5 L1285 801.5 L1285 797.4 L1286 797.4 L1286 794.5 L1287 794.5 L1287 794.5 L1288 794.5 L1288 799.7 L1289 799.7 L1289 799.7 L1290 799.7 L1290 802.8 L1291 802.8 L1291 802.8 L1292 802.8 L1292 805.5 L1293 805.5 L1293 788.8 L1294 788.8 L1294 788.8 L1295 788.8 L1295 796.3 L1296 796.3 L1296 796.3 L1297 796.3 L1297 800.6 L1298 800.6 L1298 800.6 L1299 800.6 L1299 800.6 L1300 800.6 L1300 786.9 L1301 786.9 L1301 792.1 L1302 792.1 L1302 802.1 L1303 802.1 L1303 802.1 L1304 802.1 L1304 797.0 L1305 797.0 L1305 797.0 L1306 797.0 L1306 786.5 L1307 786.5 L1307 805.7 L1308 805.7 L1308 784.9 L1309 784.9 L1309 784.9 L1310 784.9 L1310 784.9 L1311 784.9 L1311 793.5 L1312 793.5 L1312 793.5 L1313 793.5 L1313 805.9 L1314 805.9 L1314 805.9 L1315 805.9 L1315 796.3 L1316 796.3 L1316 792.0 L1317 792.0 L1317 801.1 L1318 801.1 L1318 805.5 L1319 805.5 L1319 805.5 L1320 805.5 L1320 803.2 L1321 803.2 L1321 803.2 L1322 803.2 L1322 797.9 L1323 797.9 L1323 797.9 L1324 797.9 L1324 796.9 L1325 796.9 L1325 797.1 L1326 797.1 L1326 797.6 L1327 797.6 L1327 798.1 L1328 798.1 L1328 803.3 L1329 803.3 L1329 802.5 L1330 802.5 L1330 804.2 L1331 804.2 L1331 805.1 L1332 805.1 L1332 805.8 L1333 805.8 L1333 807.1 L1334 807.1 L1334 808.7 L1335 808.7 L1335 809.7 L1336 809.7 L1336 812.8 L1337 812.8 L1337 820.1 L1338 820.1 L1338 820.1 L1339 820.1 L1339 820.1 L1340 820.1 L1340 820.1 L1341 820.1 L1341 820.1 L1342 820.1 L1342 819.7 L1343 819.7 L1343 819.7 L1344 819.7 L1344 820.1 L1345 820.1 L1345 820.1 L1346 820.1 L1346 820.1 L1347 820.1 L1347 820.1 L1348 820.1 L1348 820.1 L1349 820.1 L1349 820.1 L1350 820.1 L1350 820.1 L1351 820.1 L1351 820.1 L1352 820.1 L1352 820.1 L1353 820.1 L1353 820.1 L1354 820.1 L1354 820.1 L1355 820.1 L1355 820.1 L1356 820.1 L1356 820.1 L1357 820.1 L1357 820.1 L1358 820.1 L1358 820.1 L1359 820.1 L1359 820.1 L1360 820.1 L1360 820.1 L1361 820.1 L1361 820.1 L1362 820.1 L1362 820.1 L1363 820.1 L1363 820.1 L1364 820.1 L1364 820.1 L1365 820.1 L1365 820.1 L1366 820.1 L1366 820.1 L1367 820.1 L1367 820.1 L1368 820.1 L1368 820.1 L1369 820.1 L1369 820.1 L1370 820.1 L1370 820.1 L1371 820.1 L1371 820.1 L1372 820.1 L1372 820.1 L1373 820.1 L1373 820.1 L1374 820.1 L1374 820.1 L1375 820.1 L1375 820.1 L1376 820.1 L1376 820.1 L1377 820.1 L1377 820.1 L1378 820.1 L1378 820.1 L1379 820.1 L1379 820.1 L1380 820.1 L1380 820.1 L1381 820.1 L1381 820.1 L1382 820.1 L1382 820.1 L1383 820.1 L1383 820.1 L1384 820.1 L1384 820.1 L1385 820.1 L1385 820.1 L1386 820.1 L1386 820.0 L1387 820.0 L1387 819.6 L1388 819.6 L1388 819.4 L1389 819.4 L1389 819.3 L1390 819.3 L1390 819.2 L1391 819.2 L1391 819.3 L1392 819.3 L1392 819.4 L1393 819.4 L1393 819.6 L1394 819.6 L1394 820.0 L1395 820.0 L1395 820.1 L1396 820.1 L1396 820.1 L1397 820.1 L1397 820.1 L1398 820.1 L1398 801.9 L1399 801.9 L1399 801.2 L1400 801.2 L1400 801.2 L1401 801.2 L1401 801.2 L1402 801.2 L1402 799.3 L1403 799.3 L1403 805.6 L1404 805.6 L1404 805.3 L1405 805.3 L1405 805.9 L1406 805.9 L1406 786.4 L1407 786.4 L1407 788.8 L1408 788.8 L1408 795.7 L1409 795.7 L1409 801.7 L1410 801.7 L1410 801.7 L1411 801.7 L1411 801.7 L1412 801.7 L1412 784.9 L1413 784.9 L1413 784.9 L1414 784.9 L1414 802.6 L1415 802.6 L1415 802.6 L1416 802.6 L1416 792.8 L1417 792.8 L1417 792.8 L1418 792.8 L1418 798.5 L1419 798.5 L1419 801.7 L1420 801.7 L1420 801.7 L1421 801.7 L1421 801.7 L1422 801.7 L1422 792.3 L1423 792.3 L1423 794.0 L1424 794.0 L1424 787.7 L1425 787.7 L1425 787.7 L1426 787.7 L1426 798.2 L1427 798.2 L1427 795.6 L1428 795.6 L1428 795.6 L1429 795.6 L1429 790.9 L1430 790.9 L1430 804.3 L1431 804.3 L1431 785.1 L1432 785.1 L1432 803.5 L1433 803.5 L1433 803.5 L1434 803.5 L1434 800.1 L1435 800.1 L1435 800.1 L1436 800.1 L1436 786.2 L1437 786.2 L1437 786.2 L1438 786.2 L1438 805.4 L1439 805.4 L1439 804.2 L1440 804.2 L1440 804.2 L1441 804.2 L1441 789.8 L1442 789.8 L1442 789.8 L1443 789.8 L1443 789.8 L1444 789.8 L1444 791.1 L1445 791.1 L1445 791.1 L1446 791.1 L1446 787.7 L1447 787.7 L1447 799.4 L1448 799.4 L1448 805.5 L1449 805.5 L1449 805.5 L1450 805.5 L1450 799.7 L1451 799.7 L1451 799.7 L1452 799.7 L1452 793.2 L1453 793.2 L1453 805.8 L1454 805.8 L1454 790.9 L1455 790.9 L1455 790.9 L1456 790.9 L1456 785.4 L1457 785.4 L1457 785.4 L1458 785.4 L1458 785.4 L1459 785.4 L1459 804.8 L1460 804.8 L1460 801.4 L1461 801.4 L1461 798.6 L1462 798.6 L1462 793.9 L1463 793.9 L1463 793.9 L1464 793.9 L1464 801.4 L1465 801.4 L1465 800.8 L1466 800.8 L1466 800.9 L1467 800.9 L1467 801.1 L1468 801.1 L1468 799.3 L1469 799.3 L1469 799.6 L1470 799.6 L1470 796.6 L1471 796.6 L1471 799.5 L1472 799.5 L1472 800.0 L1473 800.0 L1473 802.3 L1474 802.3 L1474 802.9 L1475 802.9 L1475 803.6 L1476 803.6 L1476 805.6 L1477 805.6 L1477 806.4 L1478 806.4 L1478 807.2 L1479 807.2 L1479 808.4 L1480 808.4 L1480 809.6 L1481 809.6 L1481 811.0 L1482 811.0 L1482 811.2 L1483 811.2 L1483 814.8 L1484 814.8 L1484 820.1 L1485 820.1 L1485 820.1 L1486 820.1 L1486 820.1 L1487 820.1 L1487 820.1 L1488 820.1 L1488 820.1 L1489 820.1 L1489 820.1 L1490 820.1 L1490 820.1 L1491 820.1 L1491 820.1 L1492 820.1 L1492 820.1 L1493 820.1 L1493 820.1 L1494 820.1 L1494 820.1 L1495 820.1 L1495 820.1 L1496 820.1 L1496 820.1 L1497 820.1 L1497 820.1 L1498 820.1 L1498 820.1 L1499 820.1 L1499 820.1 L1500 820.1 L1500 820.1 L1501 820.1 L1501 820.1 L1502 820.1 L1502 820.1 L1503 820.1 L1503 820.1 L1504 820.1 L1504 820.1 L1505 820.1 L1505 820.1 L1506 820.1 L1506 820.1 L1507 820.1 L1507 820.1 L1508 820.1 L1508 820.1 L1509 820.1 L1509 820.1 L1510 820.1 L1510 820.1 L1511 820.1 L1511 820.1 L1512 820.1 L1512 820.1 L1513 820.1 L1513 820.1 L1514 820.1 L1514 820.1 L1515 820.1 L1515 820.1 L1516 820.1 L1516 820.1 L1517 820.1 L1517 820.1 L1518 820.1 L1518 820.1 L1519 820.1 L1519 820.1 L1520 820.1 L1520 820.1 L1521 820.1 L1521 820.1 L1522 820.1 L1522 820.1 L1523 820.1 L1523 820.1 L1524 820.1 L1524 820.1 L1525 820.1 L1525 820.1 L1526 820.1 L1526 820.1 L1527 820.1 L1527 820.1 L1528 820.1 L1528 820.1 L1529 820.1 L1529 820.1 L1530 820.1 L1530 820.1 L1531 820.1 L1531 820.1 L1532 820.1 L1532 820.1 L1533 820.1 L1533 820.1 L1534 820.1 L1534 815.7 L1535 815.7 L1535 812.0 L1536 812.0 L1536 803.7 L1537 803.7 L1537 808.7 L1538 808.7 L1538 803.9 L1539 803.9 L1539 801.2 L1540 801.2 L1540 801.2 L1541 801.2 L1541 801.4 L1542 801.4 L1542 798.1 L1543 798.1 L1543 798.1 L1544 798.1 L1544 798.1 L1545 798.1 L1545 801.2 L1546 801.2 L1546 801.2 L1547 801.2 L1547 800.2 L1548 800.2 L1548 800.2 L1549 800.2 L1549 791.3 L1550 791.3 L1550 791.3 L1551 791.3 L1551 791.3 L1552 791.3 L1552 790.0 L1553 790.0 L1553 790.0 L1554 790.0 L1554 792.3 L1555 792.3 L1555 802.3 L1556 802.3 L1556 801.7 L1557 801.7 L1557 793.8 L1558 793.8 L1558 793.8 L1559 793.8 L1559 789.5 L1560 789.5 L1560 805.7 L1561 805.7 L1561 805.7 L1562 805.7 L1562 804.8 L1563 804.8 L1563 804.8 L1564 804.8 L1564 791.0 L1565 791.0 L1565 791.0 L1566 791.0 L1566 805.5 L1567 805.5 L1567 802.1 L1568 802.1 L1568 802.1 L1569 802.1 L1569 802.1 L1570 802.1 L1570 803.5 L1571 803.5 L1571 803.5 L1572 803.5 L1572 803.2 L1573 803.2 L1573 802.4 L1574 802.4 L1574 800.1 L1575 800.1 L1575 800.1 L1576 800.1 L1576 788.5 L1577 788.5 L1577 804.2 L1578 804.2 L1578 804.2 L1579 804.2 L1579 804.2 L1580 804.2 L1580 792.0 L1581 792.0 L1581 792.0 L1582 792.0 L1582 802.1 L1583 802.1 L1583 802.1 L1584 802.1 L1584 798.8 L1585 798.8 L1585 798.8 L1586 798.8 L1586 798.8 L1587 798.8 L1587 804.1 L1588 804.1 L1588 801.7 L1589 801.7 L1589 797.4 L1590 797.4 L1590 798.0 L1591 798.0 L1591 791.7 L1592 791.7 L1592 791.7 L1593 791.7 L1593 787.9 L1594 787.9 L1594 787.9 L1595 787.9 L1595 797.7 L1596 797.7 L1596 794.3 L1597 794.3 L1597 800.1 L1598 800.1 L1598 800.1 L1599 800.1 L1599 797.1 L1600 797.1 L1600 797.1 L1601 797.1 L1601 799.3 L1602 799.3 L1602 799.5 L1603 799.5 L1603 800.4 L1604 800.4 L1604 800.6 L1605 800.6 L1605 798.5 L1606 798.5 L1606 799.0 L1607 799.0 L1607 799.5 L1608 799.5 L1608 801.6 L1609 801.6 L1609 802.3 L1610 802.3 L1610 800.9 L1611 800.9 L1611 801.8 L1612 801.8 L1612 800.8 L1613 800.8 L1613 802.2 L1614 802.2 L1614 803.8 L1615 803.8 L1615 808.5 L1616 808.5 L1616 809.1 L1617 809.1 L1617 813.4 L1618 813.4 L1618 820.1 L1619 820.1 L1619 820.1 L1620 820.1 L1620 820.1 L1621 820.1 L1621 820.1 L1622 820.1 L1622 820.1 L1623 820.1 L1623 820.1 L1624 820.1 L1624 820.1 L1625 820.1 L1625 820.1 L1626 820.1 L1626 819.8 L1627 819.8 L1627 819.3 L1628 819.3 L1628 819.3 L1629 819.3 L1629 819.8 L1630 819.8 L1630 820.1 L1631 820.1 L1631 820.1 L1632 820.1 L1632 820.1 L1633 820.1 L1633 820.1 L1634 820.1 L1634 820.1 L1635 820.1 L1635 820.1 L1636 820.1 L1636 820.1 L1637 820.1 L1637 820.1 L1638 820.1 L1638 820.1 L1639 820.1 L1639 820.1 L1640 820.1 L1640 820.1 L1641 820.1 L1641 820.1 L1642 820.1 L1642 820.1 L1643 820.1 L1643 820.1 L1644 820.1 L1644 820.1 L1645 820.1 L1645 820.1 L1646 820.1 L1646 820.1 L1647 820.1 L1647 820.1 L1648 820.1 L1648 820.1 L1649 820.1 L1649 820.1 L1650 820.1 L1650 820.1 L1651 820.1 L1651 820.1 L1652 820.1 L1652 820.1 L1653 820.1 L1653 820.1 L1654 820.1 L1654 820.1 L1655 820.1 L1655 820.1 L1656 820.1 L1656 820.1 L1657 820.1 L1657 820.1 L1658 820.1 L1658 820.1 L1659 820.1 L1659 820.1 L1660 820.1 L1660 820.1 L1661 820.1 L1661 820.1 L1662 820.1 L1662 820.1 L1663 820.1 L1663 820.1 L1664 820.1 L1664 820.1 L1665 820.1 L1665 820.1 L1666 820.1 L1666 820.1 L1667 820.1 L1667 820.1 L1668 820.1 L1668 820.1 L1669 820.1 L1669 820.1 L1670 820.1 L1670 820.1 L1671 820.1 L1671 820.1 L1672 820.1 L1672 820.1 L1673 820.1 L1673 820.1 L1674 820.1 L1674 820.1 L1675 820.1 L1675 820.1 L1676 820.1 L1676 806.0 L1677 806.0 L1677 801.3 L1678 801.3 L1678 793.9 L1679 793.9 L1679 797.5 L1680 797.5 L1680 804.3 L1681 804.3 L1681 804.3 L1682 804.3 L1682 781.7 L1683 781.7 L1683 781.7 L1684 781.7 L1684 804.2 L1685 804.2 L1685 799.7 L1686 799.7 L1686 803.8 L1687 803.8 L1687 803.8 L1688 803.8 L1688 801.7 L1689 801.7 L1689 801.5 L1690 801.5 L1690 794.2 L1691 794.2 L1691 794.2 L1692 794.2 L1692 800.7 L1693 800.7 L1693 800.7 L1694 800.7 L1694 782.3 L1695 782.3 L1695 782.3 L1696 782.3 L1696 782.3 L1697 782.3 L1697 792.2 L1698 792.2 L1698 799.0 L1699 799.0 L1699 799.0 L1700 799.0 L1700 799.0 L1701 799.0 L1701 803.1 L1702 803.1 L1702 803.1 L1703 803.1 L1703 804.1 L1704 804.1 L1704 793.1 L1705 793.1 L1705 793.1 L1706 793.1 L1706 793.1 L1707 793.1 L1707 803.3 L1708 803.3 L1708 803.3 L1709 803.3 L1709 803.3 L1710 803.3 L1710 794.7 L1711 794.7 L1711 794.7 L1712 794.7 L1712 794.7 L1713 794.7 L1713 786.9 L1714 786.9 L1714 803.8 L1715 803.8 L1715 782.2 L1716 782.2 L1716 782.2 L1717 782.2 L1717 795.0 L1718 795.0 L1718 795.0 L1719 795.0 L1719 791.5 L1720 791.5 L1720 791.5 L1721 791.5 L1721 791.5 L1722 791.5 L1722 797.5 L1723 797.5 L1723 784.4 L1724 784.4 L1724 784.4 L1725 784.4 L1725 784.4 L1726 784.4 L1726 804.0 L1727 804.0 L1727 804.0 L1728 804.0 L1728 804.0 L1729 804.0 L1729 787.5 L1730 787.5 L1730 787.5 L1731 787.5 L1731 790.0 L1732 790.0 L1732 796.6 L1733 796.6 L1733 796.6 L1734 796.6 L1734 784.0 L1735 784.0 L1735 784.0 L1736 784.0 L1736 793.4 L1737 793.4 L1737 793.9 L1738 793.9 L1738 797.6 L1739 797.6 L1739 800.1 L1740 800.1 L1740 800.1 L1741 800.1 L1741 797.1 L1742 797.1 L1742 797.0 L1743 797.0 L1743 797.0 L1744 797.0 L1744 798.5 L1745 798.5 L1745 798.5 L1746 798.5 L1746 799.7 L1747 799.7 L1747 799.7 L1748 799.7 L1748 799.7 L1749 799.7 L1749 800.1 L1750 800.1 L1750 800.1 L1751 800.1 L1751 795.0 L1752 795.0 L1752 795.0 L1753 795.0 L1753 795.0 L1754 795.0 L1754 799.2 L1755 799.2 L1755 799.5 L1756 799.5 L1756 800.9 L1757 800.9 L1757 800.9 L1758 800.9 L1758 801.5 L1759 801.5 L1759 802.3 L1760 802.3 L1760 800.6 L1761 800.6 L1761 801.9 L1762 801.9 L1762 803.5 L1763 803.5 L1763 806.1 L1764 806.1 L1764 809.5 L1765 809.5 L1765 812.6 L1766 812.6 L1766 820.1 L1767 820.1 L1767 820.1 L1768 820.1 L1768 820.1 L1769 820.1 L1769 820.1 L1770 820.1 L1770 820.1 L1771 820.1 L1771 820.1 L1772 820.1 L1772 820.1 L1773 820.1 L1773 820.1 L1774 820.1 L1774 820.1 L1775 820.1 L1775 820.1 L1776 820.1 L1776 820.1 L1777 820.1 L1777 820.1 L1778 820.1 L1778 820.1 L1779 820.1 L1779 820.1 L1780 820.1 L1780 820.1 L1781 820.1 L1781 820.1 L1782 820.1 L1782 820.1 L1783 820.1 L1783 820.1 L1784 820.1 L1784 820.1 L1785 820.1 L1785 820.1 L1786 820.1 L1786 820.1 L1787 820.1 L1787 820.1 L1788 820.1 L1788 820.1 L1789 820.1 L1789 820.1 L1790 820.1 L1790 820.1 L1791 820.1 L1791 820.1 L1792 820.1 L1792 820.1 L1793 820.1 L1793 820.1 L1794 820.1 L1794 820.1 L1795 820.1 L1795 820.1 L1796 820.1 L1796 820.1 L1797 820.1 L1797 820.1 L1798 820.1 L1798 820.1 L1799 820.1 L1799 820.1 L1800 820.1 L1800 820.1 L1801 820.1 L1801 820.1 L1802 820.1 L1802 820.1 L1803 820.1 L1803 820.1 L1804 820.1 L1804 820.1 L1805 820.1 L1805 820.1 L1806 820.1 L1806 820.1 L1807 820.1 L1807 820.1 L1808 820.1 L1808 820.1 L1809 820.1 L1809 820.1 L1810 820.1 L1810 820.1 L1811 820.1 L1811 820.1 L1812 820.1 L1812 820.1 L1813 820.1 L1813 820.1 L1814 820.1 L1814 820.1 L1815 820.1 L1815 820.1 L1816 820.1 L1816 820.1 L1817 820.1 L1817 820.1 L1818 820.1 L1818 820.1 L1819 820.1 L1819 820.1 L1820 820.1 L1820 820.1 L1821 820.1 L1821 820.1 L1822 820.1 L1822 820.1 L1823 820.1 L1823 820.1 L1824 820.1 L1824 820.1 L1825 820.1 L1825 820.1 L1826 820.1 L1826 820.1 L1827 820.1 L1827 816.8 L1828 816.8 L1828 814.0 L1829 814.0 L1829 811.4 L1830 811.4 L1830 810.5 L1831 810.5 L1831 813.4 L1832 813.4 L1832 812.2 L1833 812.2 L1833 799.1 L1834 799.1 L1834 796.7 L1835 796.7 L1835 796.2 L1836 796.2 L1836 794.1 L1837 794.1 L1837 806.6 L1838 806.6 L1838 798.2 L1839 798.2 L1839 796.7 L1840 796.7 L1840 800.4 L1841 800.4 L1841 799.3 L1842 799.3 L1842 787.3 L1843 787.3 L1843 785.6 L1844 785.6 L1844 782.9 L1845 782.9 L1845 792.5 L1846 792.5 L1846 792.5 L1847 792.5 L1847 792.5 L1848 792.5 L1848 777.7 L1849 777.7 L1849 785.2 L1850 785.2 L1850 785.2 L1851 785.2 L1851 785.2 L1852 785.2 L1852 794.5 L1853 794.5 L1853 794.5 L1854 794.5 L1854 802.5 L1855 802.5 L1855 802.5 L1856 802.5 L1856 802.5 L1857 802.5 L1857 799.7 L1858 799.7 L1858 799.7 L1859 799.7 L1859 796.7 L1860 796.7 L1860 796.7 L1861 796.7 L1861 792.2 L1862 792.2 L1862 792.2 L1863 792.2 L1863 789.3 L1864 789.3 L1864 778.9 L1865 778.9 L1865 778.9 L1866 778.9 L1866 778.9 L1867 778.9 L1867 795.4 L1868 795.4 L1868 796.1 L1869 796.1 L1869 796.1 L1870 796.1 L1870 802.9 L1871 802.9 L1871 798.9 L1872 798.9 L1872 801.3 L1873 801.3 L1873 801.3 L1874 801.3 L1874 801.3 L1875 801.3 L1875 797.3 L1876 797.3 L1876 797.3 L1877 797.3 L1877 797.5 L1878 797.5 L1878 794.1 L1879 794.1 L1879 802.5 L1880 802.5 L1880 802.5 L1881 802.5 L1881 802.9 L1882 802.9 L1882 796.9 L1883 796.9 L1883 796.9 L1884 796.9 L1884 781.4 L1885 781.4 L1885 781.4 L1886 781.4 L1886 802.5 L1887 802.5 L1887 776.1 L1888 776.1 L1888 776.1 L1889 776.1 L1889 797.1 L1890 797.1 L1890 781.1 L1891 781.1 L1891 781.1 L1892 781.1 L1892 781.1 L1893 781.1 L1893 784.0 L1894 784.0 L1894 793.3 L1895 793.3 L1895 803.0 L1896 803.0 L1896 803.0 L1897 803.0 L1897 784.1 L1898 784.1 L1898 789.2 L1899 789.2 L1899 789.9 L1900 789.9 L1900 787.3 L1901 787.3 L1901 787.3 L1902 787.3 L1902 799.3 L1903 799.3 L1903 798.5 L1904 798.5 L1904 807.9 L1905 807.9 L1905 820.1 L1906 820.1 L1906 820.1 L1907 820.1 L1907 820.1 L1908 820.1 L1908 820.1 L1909 820.1 L1909 806.8 L1910 806.8 L1910 791.7 L1911 791.7 L1911 800.0 L1912 800.0 L1912 799.8 L1913 799.8 L1913 799.8 L1914 799.8 L1914 799.6 L1915 799.6 L1915 799.6 L1916 799.6 L1916 775.9 L1917 775.9 L1917 775.9 L1918 775.9 L1918 784.7 L1919 784.7 L1919 785.2 L1920 785.2 L1920 785.2 L1921 785.2 L1921 783.2 L1922 783.2 L1922 783.2 L1923 783.2 L1923 791.2 L1924 791.2 L1924 797.4 L1925 797.4 L1925 799.3 L1926 799.3 L1926 799.3 L1927 799.3 L1927 798.2 L1928 798.2 L1928 798.2 L1929 798.2 L1929 798.2 L1930 798.2 L1930 776.5 L1931 776.5 L1931 776.5 L1932 776.5 L1932 798.8 L1933 798.8 L1933 798.8 L1934 798.8 L1934 798.8 L1935 798.8 L1935 800.0 L1936 800.0 L1936 799.8 L1937 799.8 L1937 799.8 L1938 799.8 L1938 792.4 L1939 792.4 L1939 792.4 L1940 792.4 L1940 783.4 L1941 783.4 L1941 783.5 L1942 783.5 L1942 795.6 L1943 795.6 L1943 783.3 L1944 783.3 L1944 783.5 L1945 783.5 L1945 783.7 L1946 783.7 L1946 780.5 L1947 780.5 L1947 780.9 L1948 780.9 L1948 799.5 L1949 799.5 L1949 799.7 L1950 799.7 L1950 801.0 L1951 801.0 L1951 801.3 L1952 801.3 L1952 792.3 L1953 792.3 L1953 797.8 L1954 797.8 L1954 798.3 L1955 798.3 L1955 802.8 L1956 802.8 L1956 803.2 L1957 803.2 L1957 799.7 L1958 799.7 L1958 801.3 L1959 801.3 L1959 805.2 L1960 805.2 L1960 805.9 L1961 805.9 L1961 806.6 L1962 806.6 L1962 807.3 L1963 807.3 L1963 796.8 L1964 796.8 L1964 799.8 L1965 799.8 L1965 807.7 L1966 807.7 L1966 809.3 L1967 809.3 L1967 813.2 L1968 813.2 L1968 815.4 L1969 815.4 L1969 820.1 L1970 820.1 L1970 816.0 L1971 816.0 L1971 812.5 L1972 812.5 L1972 809.4 L1973 809.4 L1973 806.5 L1974 806.5 L1974 812.8 L1975 812.8 L1975 804.5 L1976 804.5 L1976 802.3 L1977 802.3 L1977 798.7 L1978 798.7 L1978 796.6 L1979 796.6 L1979 806.2 L1980 806.2 L1980 806.2 L1981 806.2 L1981 794.1 L1982 794.1 L1982 798.7 L1983 798.7 L1983 801.7 L1984 801.7 L1984 801.7 L1985 801.7 L1985 806.6 L1986 806.6 L1986 806.6 L1987 806.6 L1987 806.6 L1988 806.6 L1988 805.0 L1989 805.0 L1989 801.3 L1990 801.3 L1990 789.3 L1991 789.3 L1991 804.8 L1992 804.8 L1992 802.4 L1993 802.4 L1993 805.8 L1994 805.8 L1994 805.8 L1995 805.8 L1995 798.4 L1996 798.4 L1996 798.4 L1997 798.4 L1997 793.0 L1998 793.0 L1998 793.0 L1999 793.0 L1999 793.0 L2000 793.0 L2000 794.7 L2001 794.7 L2001 799.6 L2002 799.6 L2002 799.6 L2003 799.6 L2003 805.6 L2004 805.6 L2004 805.6 L2005 805.6 L2005 805.1 L2006 805.1 L2006 805.7 L2007 805.7 L2007 805.7 L2008 805.7 L2008 805.7 L2009 805.7 L2009 788.9 L2010 788.9 L2010 788.9 L2011 788.9 L2011 797.8 L2012 797.8 L2012 789.0 L2013 789.0 L2013 789.0 L2014 789.0 L2014 792.0 L2015 792.0 L2015 792.0 L2016 792.0 L2016 791.1 L2017 791.1 L2017 791.1 L2018 791.1 L2018 805.2 L2019 805.2 L2019 805.2 L2020 805.2 L2020 789.5 L2021 789.5 L2021 789.5 L2022 789.5 L2022 789.5 L2023 789.5 L2023 803.2 L2024 803.2 L2024 798.8 L2025 798.8 L2025 798.8 L2026 798.8 L2026 806.4 L2027 806.4 L2027 803.5 L2028 803.5 L2028 803.5 L2029 803.5 L2029 803.5 L2030 803.5 L2030 806.1 L2031 806.1 L2031 806.1 L2032 806.1 L2032 806.8 L2033 806.8 L2033 806.8 L2034 806.8 L2034 794.0 L2035 794.0 L2035 797.9 L2036 797.9 L2036 798.9 L2037 798.9 L2037 808.5 L2038 808.5 L2038 809.7 L2039 809.7 L2039 807.0 L2040 807.0 L2040 810.7 L2041 810.7 L2041 820.1 L2042 820.1 L2042 820.1 L2043 820.1 L2043 820.1 L2044 820.1 L2044 818.4 L2045 818.4 L2045 816.7 L2046 816.7 L2046 817.7 L2047 817.7 L2047 816.5 L2048 816.5 L2048 816.5 L2049 816.5 L2049 808.2 L2050 808.2 L2050 784.5 L2051 784.5 L2051 784.5 L2052 784.5 L2052 800.8 L2053 800.8 L2053 800.8 L2054 800.8 L2054 816.6 L2055 816.6 L2055 819.2 L2056 819.2 L2056 819.2 L2057 819.2 L2057 818.8 L2058 818.8 L2058 818.8 L2059 818.8 L2059 818.8 L2060 818.8 L2060 783.1 L2061 783.1 L2061 817.8 L2062 817.8 L2062 810.6 L2063 810.6 L2063 810.6 L2064 810.6 L2064 784.3 L2065 784.3 L2065 798.0 L2066 798.0 L2066 810.8 L2067 810.8 L2067 810.8 L2068 810.8 L2068 810.8 L2069 810.8 L2069 819.4 L2070 819.4 L2070 815.3 L2071 815.3 L2071 815.3 L2072 815.3 L2072 816.4 L2073 816.4 L2073 813.5 L2074 813.5 L2074 815.1 L2075 815.1 L2075 815.1 L2076 815.1 L2076 817.7 L2077 817.7 L2077 817.7 L2078 817.7 L2078 816.3 L2079 816.3 L2079 816.3 L2080 816.3 L2080 779.5 L2081 779.5 L2081 779.5 L2082 779.5 L2082 779.5 L2083 779.5 L2083 811.8 L2084 811.8 L2084 811.8 L2085 811.8 L2085 811.8 L2086 811.8 L2086 816.8 L2087 816.8 L2087 816.8 L2088 816.8 L2088 815.8 L2089 815.8 L2089 815.8 L2090 815.8 L2090 816.4 L2091 816.4 L2091 811.9 L2092 811.9 L2092 811.9 L2093 811.9 L2093 784.9 L2094 784.9 L2094 784.9 L2095 784.9 L2095 789.7 L2096 789.7 L2096 820.1 L2097 820.1 L2097 808.4 L2098 808.4 L2098 799.3 L2099 799.3 L2099 795.2 L2100 795.2 L2100 800.5 L2101 800.5 L2101 800.2 L2102 800.2 L2102 800.2 L2103 800.2 L2103 792.2 L2104 792.2 L2104 792.2 L2105 792.2 L2105 797.4 L2106 797.4 L2106 797.4 L2107 797.4 L2107 796.4 L2108 796.4 L2108 799.1 L2109 799.1 L2109 798.3 L2110 798.3 L2110 795.3 L2111 795.3 L2111 795.3 L2112 795.3 L2112 793.8 L2113 793.8 L2113 800.6 L2114 800.6 L2114 800.6 L2115 800.6 L2115 800.6 L2116 800.6 L2116 796.8 L2117 796.8 L2117 796.8 L2118 796.8 L2118 799.6 L2119 799.6 L2119 794.6 L2120 794.6 L2120 794.7 L2121 794.7 L2121 791.4 L2122 791.4 L2122 791.8 L2123 791.8 L2123 800.1 L2124 800.1 L2124 800.6 L2125 800.6 L2125 802.1 L2126 802.1 L2126 802.1 L2127 802.1 L2127 800.1 L2128 800.1 L2128 801.3 L2129 801.3 L2129 799.7 L2130 799.7 L2130 801.6 L2131 801.6 L2131 803.9 L2132 803.9 L2132 808.0 L2133 808.0 L2133 812.1 L2134 812.1 L2134 820.1 L2135 820.1 L2135 819.7 L2136 819.7 L2136 818.8 L2137 818.8 L2137 818.0 L2138 818.0 L2138 817.4 L2139 817.4 L2139 817.0 L2140 817.0 L2140 816.7 L2141 816.7 L2141 816.7 L2142 816.7 L2142 817.0 L2143 817.0 L2143 817.4 L2144 817.4 L2144 818.0 L2145 818.0 L2145 818.8 L2146 818.8 L2146 819.7 L2147 819.7 L2147 820.1 L2148 820.1 L2148 813.8 L2149 813.8 L2149 808.6 L2150 808.6 L2150 805.3 L2151 805.3 L2151 805.3 L2152 805.3 L2152 806.4 L2153 806.4 L2153 806.2 L2154 806.2 L2154 806.2 L2155 806.2 L2155 803.4 L2156 803.4 L2156 805.5 L2157 805.5 L2157 805.9 L2158 805.9 L2158 805.9 L2159 805.9 L2159 799.2 L2160 799.2 L2160 800.3 L2161 800.3 L2161 803.5 L2162 803.5 L2162 803.5 L2163 803.5 L2163 806.4 L2164 806.4 L2164 800.9 L2165 800.9 L2165 803.6 L2166 803.6 L2166 820.1 L2167 820.1 L2167 806.6 L2168 806.6 L2168 798.8 L2169 798.8 L2169 799.2 L2170 799.2 L2170 798.9 L2171 798.9 L2171 795.0 L2172 795.0 L2172 795.0 L2173 795.0 L2173 795.0 L2174 795.0 L2174 793.1 L2175 793.1 L2175 793.1 L2176 793.1 L2176 799.1 L2177 799.1 L2177 799.1 L2178 799.1 L2178 794.2 L2179 794.2 L2179 794.2 L2180 794.2 L2180 793.9 L2181 793.9 L2181 793.9 L2182 793.9 L2182 798.7 L2183 798.7 L2183 798.7 L2184 798.7 L2184 798.4 L2185 798.4 L2185 798.4 L2186 798.4 L2186 792.1 L2187 792.1 L2187 792.1 L2188 792.1 L2188 794.3 L2189 794.3 L2189 794.3 L2190 794.3 L2190 794.6 L2191 794.6 L2191 794.6 L2192 794.6 L2192 794.6 L2193 794.6 L2193 791.1 L2194 791.1 L2194 791.1 L2195 791.1 L2195 791.2 L2196 791.2 L2196 799.3 L2197 799.3 L2197 798.7 L2198 798.7 L2198 792.4 L2199 792.4 L2199 799.7 L2200 799.7 L2200 800.0 L2201 800.0 L2201 800.2 L2202 800.2 L2202 800.8 L2203 800.8 L2203 801.4 L2204 801.4 L2204 800.7 L2205 800.7 L2205 801.5 L2206 801.5 L2206 802.5 L2207 802.5 L2207 800.6 L2208 800.6 L2208 804.2 L2209 804.2 L2209 806.7 L2210 806.7 L2210 805.5 L2211 805.5 L2211 808.1 L2212 808.1 L2212 811.7 L2213 811.7 L2213 820.1 L2214 820.1 L2214 820.1 L2215 820.1 L2215 820.1 L2216 820.1 L2216 820.1 L2217 820.1 L2217 820.1 L2218 820.1 L2218 820.1 L2219 820.1 L2219 820.1 L2220 820.1 L2220 820.1 L2221 820.1 L2221 820.1 L2222 820.1 L2222 820.1 L2223 820.1 L2223 820.1 L2224 820.1 L2224 820.1 L2225 820.1 L2225 820.1 L2226 820.1 L2226 820.1 L2227 820.1 L2227 820.1 L2228 820.1 L2228 820.1 L2229 820.1 L2229 820.1 L2230 820.1 L2230 820.1 L2231 820.1 L2231 820.1 L2232 820.1 L2232 820.1 L2233 820.1 L2233 820.1 L2234 820.1 L2234 820.1 L2235 820.1 L2235 820.1 L2236 820.1 L2236 820.1 L2237 820.1 L2237 820.1 L2238 820.1 L2238 820.1 L2239 820.1 L2239 820.1 L2240 820.1 L2240 820.1 L2241 820.1 L2241 820.1 L2242 820.1 L2242 820.1 L2243 820.1 L2243 820.1 L2244 820.1 L2244 820.1 L2245 820.1 L2245 820.1 L2246 820.1 L2246 820.1 L2247 820.1 L2247 820.1 L2248 820.1 L2248 820.1 L2249 820.1 L2249 820.1 L2250 820.1 L2250 820.1 L2251 820.1 L2251 820.1 L2252 820.1 L2252 820.1 L2253 820.1 L2253 820.1 L2254 820.1 L2254 820.1 L2255 820.1 L2255 820.1 L2256 820.1 L2256 820.1 L2257 820.1 L2257 820.1 L2258 820.1 L2258 820.1 L2259 820.1 L2259 820.1 L2260 820.1 L2260 820.1 L2261 820.1 L2261 820.1 L2262 820.1 L2262 820.1 L2263 820.1 L2263 820.1 L2264 820.1 L2264 820.1 L2265 820.1 L2265 820.1 L2266 820.1 L2266 820.1 L2267 820.1 L2267 820.1 L2268 820.1 L2268 820.1 L2269 820.1 L2269 820.1 L2270 820.1 L2270 820.1 L2271 820.1 L2271 820.1 L2272 820.1 L2272 820.1 L2273 820.1 L2273 820.1 L2274 820.1 L2274 820.1 L2275 820.1 L2275 820.1 L2276 820.1 L2276 820.1 L2277 820.1 L2277 820.1 L2278 820.1 L2278 820.1 L2279 820.1 L2279 820.1 L2280 820.1 L2280 820.1 L2281 820.1 L2281 820.1 L2282 820.1 L2282 820.1 L2283 820.1 L2283 819.9 L2284 819.9 L2284 808.5 L2285 808.5 L2285 813.6 L2286 813.6 L2286 811.7 L2287 811.7 L2287 789.8 L2288 789.8 L2288 817.9 L2289 817.9 L2289 817.9 L2290 817.9 L2290 786.9 L2291 786.9 L2291 812.1 L2292 812.1 L2292 811.0 L2293 811.0 L2293 816.8 L2294 816.8 L2294 816.8 L2295 816.8 L2295 787.7 L2296 787.7 L2296 787.7 L2297 787.7 L2297 794.1 L2298 794.1 L2298 794.1 L2299 794.1 L2299 799.4 L2300 799.4 L2300 799.4 L2301 799.4 L2301 802.5 L2302 802.5 L2302 802.5 L2303 802.5 L2303 801.9 L2304 801.9 L2304 800.8 L2305 800.8 L2305 809.9 L2306 809.9 L2306 811.4 L2307 811.4 L2307 820.1 L2308 820.1 L2308 820.1 L2309 820.1 L2309 793.9 L2310 793.9 L2310 796.4 L2311 796.4 L2311 796.4 L2312 796.4 L2312 796.4 L2313 796.4 L2313 794.6 L2314 794.6 L2314 794.6 L2315 794.6 L2315 795.8 L2316 795.8 L2316 795.8 L2317 795.8 L2317 794.7 L2318 794.7 L2318 794.8 L2319 794.8 L2319 794.9 L2320 794.9 L2320 797.0 L2321 797.0 L2321 797.1 L2322 797.1 L2322 796.5 L2323 796.5 L2323 797.2 L2324 797.2 L2324 797.4 L2325 797.4 L2325 796.9 L2326 796.9 L2326 797.1 L2327 797.1 L2327 797.4 L2328 797.4 L2328 796.0 L2329 796.0 L2329 797.1 L2330 797.1 L2330 797.5 L2331 797.5 L2331 797.9 L2332 797.9 L2332 799.5 L2333 799.5 L2333 798.3 L2334 798.3 L2334 799.3 L2335 799.3 L2335 799.8 L2336 799.8 L2336 800.4 L2337 800.4 L2337 801.2 L2338 801.2 L2338 801.8 L2339 801.8 L2339 803.7 L2340 803.7 L2340 803.8 L2341 803.8 L2341 805.2 L2342 805.2 L2342 806.1 L2343 806.1 L2343 807.0 L2344 807.0 L2344 807.3 L2345 807.3 L2345 809.4 L2346 809.4 L2346 810.8 L2347 810.8 L2347 812.5 L2348 812.5 L2348 814.9 L2349 814.9 L2349 820.1 L2350 820.1 L2350 819.9 L2351 819.9 L2351 819.1 L2352 819.1 L2352 818.4 L2353 818.4 L2353 817.8 L2354 817.8 L2354 817.4 L2355 817.4 L2355 817.2 L2356 817.2 L2356 817.2 L2357 817.2 L2357 817.4 L2358 817.4 L2358 817.8 L2359 817.8 L2359 818.4 L2360 818.4 L2360 819.1 L2361 819.1 L2361 819.9 L2362 819.9 L2362 820.1 L2363 820.1 L2363 816.2 L2364 816.2 L2364 809.4 L2365 809.4 L2365 806.3 L2366 806.3 L2366 809.6 L2367 809.6 L2367 809.6 L2368 809.6 L2368 809.6 L2369 809.6 L2369 799.7 L2370 799.7 L2370 799.7 L2371 799.7 L2371 796.0 L2372 796.0 L2372 796.0 L2373 796.0 L2373 797.3 L2374 797.3 L2374 789.6 L2375 789.6 L2375 789.6 L2376 789.6 L2376 789.6 L2377 789.6 L2377 805.4 L2378 805.4 L2378 807.4 L2379 807.4 L2379 820.1 L2380 820.1 L2380 807.6 L2381 807.6 L2381 797.8 L2382 797.8 L2382 794.0 L2383 794.0 L2383 794.0 L2384 794.0 L2384 794.0 L2385 794.0 L2385 791.9 L2386 791.9 L2386 796.3 L2387 796.3 L2387 797.8 L2388 797.8 L2388 793.6 L2389 793.6 L2389 795.3 L2390 795.3 L2390 795.9 L2391 795.9 L2391 795.9 L2392 795.9 L2392 796.0 L2393 796.0 L2393 795.8 L2394 795.8 L2394 796.0 L2395 796.0 L2395 796.1 L2396 796.1 L2396 796.4 L2397 796.4 L2397 798.5 L2398 798.5 L2398 798.8 L2399 798.8 L2399 797.4 L2400 797.4 L2400 797.8 L2401 797.8 L2401 799.2 L2402 799.2 L2402 799.7 L2403 799.7 L2403 800.2 L2404 800.2 L2404 800.7 L2405 800.7 L2405 801.3 L2406 801.3 L2406 801.8 L2407 801.8 L2407 801.7 L2408 801.7 L2408 802.6 L2409 802.6 L2409 802.6 L2410 802.6 L2410 803.8 L2411 803.8 L2411 803.8 L2412 803.8 L2412 805.4 L2413 805.4 L2413 807.3 L2414 807.3 L2414 811.4 L2415 811.4 L2415 814.1 L2416 814.1 L2416 820.1 L2417 820.1 L2417 819.9 L2418 819.9 L2418 819.1 L2419 819.1 L2419 818.4 L2420 818.4 L2420 817.8 L2421 817.8 L2421 817.4 L2422 817.4 L2422 817.2 L2423 817.2 L2423 817.2 L2424 817.2 L2424 817.4 L2425 817.4 L2425 817.8 L2426 817.8 L2426 818.4 L2427 818.4 L2427 819.1 L2428 819.1 L2428 819.9 L2429 819.9 L2429 820.1 L2430 820.1 L2430 814.6 L2431 814.6 L2431 813.3 L2432 813.3 L2432 808.9 L2433 808.9 L2433 805.8 L2434 805.8 L2434 802.0 L2435 802.0 L2435 802.0 L2436 802.0 L2436 802.0 L2437 802.0 L2437 807.8 L2438 807.8 L2438 807.8 L2439 807.8 L2439 800.7 L2440 800.7 L2440 800.7 L2441 800.7 L2441 801.3 L2442 801.3 L2442 801.3 L2443 801.3 L2443 807.7 L2444 807.7 L2444 807.7 L2445 807.7 L2445 805.6 L2446 805.6 L2446 805.6 L2447 805.6 L2447 801.8 L2448 801.8 L2448 800.0 L2449 800.0 L2449 820.1 L2450 820.1 L2450 804.7 L2451 804.7 L2451 792.9 L2452 792.9 L2452 797.0 L2453 797.0 L2453 800.0 L2454 800.0 L2454 800.0 L2455 800.0 L2455 800.0 L2456 800.0 L2456 795.8 L2457 795.8 L2457 796.5 L2458 796.5 L2458 794.5 L2459 794.5 L2459 799.3 L2460 799.3 L2460 799.5 L2461 799.5 L2461 799.5 L2462 799.5 L2462 799.5 L2463 799.5 L2463 792.0 L2464 792.0 L2464 792.0 L2465 792.0 L2465 792.0 L2466 792.0 L2466 794.3 L2467 794.3 L2467 794.3 L2468 794.3 L2468 794.3 L2469 794.3 L2469 797.3 L2470 797.3 L2470 794.8 L2471 794.8 L2471 796.8 L2472 796.8 L2472 793.9 L2473 793.9 L2473 800.0 L2474 800.0 L2474 800.1 L2475 800.1 L2475 800.3 L2476 800.3 L2476 796.0 L2477 796.0 L2477 797.8 L2478 797.8 L2478 800.6 L2479 800.6 L2479 798.7 L2480 798.7 L2480 799.1 L2481 799.1 L2481 799.5 L2482 799.5 L2482 800.8 L2483 800.8 L2483 801.3 L2484 801.3 L2484 802.8 L2485 802.8 L2485 803.8 L2486 803.8 L2486 799.7 L2487 799.7 L2487 800.6 L2488 800.6 L2488 803.9 L2489 803.9 L2489 804.8 L2490 804.8 L2490 807.0 L2491 807.0 L2491 807.6 L2492 807.6 L2492 808.9 L2493 808.9 L2493 810.3 L2494 810.3 L2494 810.6 L2495 810.6 L2495 813.5 L2496 813.5 L2496 820.1 L2497 820.1 L2497 818.6 L2498 818.6 L2498 817.7 L2499 817.7 L2499 818.6 L2500 818.6 L2500 820.1 L2501 820.1 L2501 818.8 L2502 818.8 L2502 810.6 L2503 810.6 L2503 810.6 L2504 810.6 L2504 811.0 L2505 811.0 L2505 811.0 L2506 811.0 L2506 811.0 L2507 811.0 L2507 814.7 L2508 814.7 L2508 798.8 L2509 798.8 L2509 798.8 L2510 798.8 L2510 796.3 L2511 796.3 L2511 815.8 L2512 815.8 L2512 815.8 L2513 815.8 L2513 814.2 L2514 814.2 L2514 796.1 L2515 796.1 L2515 813.1 L2516 813.1 L2516 813.1 L2517 813.1 L2517 813.1 L2518 813.1 L2518 812.1 L2519 812.1 L2519 818.6 L2520 818.6 L2520 813.1 L2521 813.1 L2521 820.1 L2522 820.1 L2522 808.2 L2523 808.2 L2523 798.1 L2524 798.1 L2524 797.9 L2525 797.9 L2525 796.4 L2526 796.4 L2526 798.2 L2527 798.2 L2527 798.2 L2528 798.2 L2528 797.6 L2529 797.6 L2529 797.7 L2530 797.7 L2530 798.3 L2531 798.3 L2531 799.6 L2532 799.6 L2532 797.7 L2533 797.7 L2533 797.4 L2534 797.4 L2534 799.4 L2535 799.4 L2535 799.9 L2536 799.9 L2536 799.9 L2537 799.9 L2537 798.8 L2538 798.8 L2538 799.2 L2539 799.2 L2539 797.5 L2540 797.5 L2540 797.7 L2541 797.7 L2541 797.7 L2542 797.7 L2542 797.8 L2543 797.8 L2543 796.6 L2544 796.6 L2544 796.7 L2545 796.7 L2545 800.4 L2546 800.4 L2546 800.4 L2547 800.4 L2547 800.4 L2548 800.4 L2548 800.5 L2549 800.5 L2549 800.3 L2550 800.3 L2550 800.4 L2551 800.4 L2551 800.5 L2552 800.5 L2552 798.9 L2553 798.9 L2553 798.9 L2554 798.9 L2554 798.4 L2555 798.4 L2555 798.4 L2556 798.4 L2556 798.5 L2557 798.5 L2557 800.8 L2558 800.8 L2558 797.3 L2559 797.3 L2559 797.3 L2560 797.3 L2560 799.9 L2561 799.9 L2561 800.0 L2562 800.0 L2562 797.6 L2563 797.6 L2563 797.6 L2564 797.6 L2564 800.7 L2565 800.7 L2565 800.7 L2566 800.7 L2566 800.8 L2567 800.8 L2567 797.7 L2568 797.7 L2568 797.8 L2569 797.8 L2569 797.8 L2570 797.8 L2570 801.0 L2571 801.0 L2571 801.0 L2572 801.0 L2572 801.1 L2573 801.1 L2573 798.9 L2574 798.9 L2574 800.2 L2575 800.2 L2575 800.3 L2576 800.3 L2576 801.2 L2577 801.2 L2577 799.5 L2578 799.5 L2578 799.5 L2579 799.5 L2579 799.6 L2580 799.6 L2580 801.7 L2581 801.7 L2581 801.7 L2582 801.7 L2582 801.8 L2583 801.8 L2583 801.9 L2584 801.9 L2584 801.9 L2585 801.9 L2585 802.3 L2586 802.3 L2586 802.3 L2587 802.3 L2587 802.4 L2588 802.4 L2588 800.5 L2589 800.5 L2589 800.6 L2590 800.6 L2590 800.7 L2591 800.7 L2591 801.4 L2592 801.4 L2592 801.4 L2593 801.4 L2593 800.3 L2594 800.3 L2594 800.3 L2595 800.3 L2595 802.4 L2596 802.4 L2596 801.9 L2597 801.9 L2597 802.0 L2598 802.0 L2598 801.6 L2599 801.6 L2599 801.6 L2600 801.6 L2600 802.2 L2601 802.2 L2601 802.2 L2602 802.2 L2602 800.9 L2603 800.9 L2603 801.0 L2604 801.0 L2604 802.1 L2605 802.1 L2605 802.2 L2606 802.2 L2606 802.3 L2607 802.3 L2607 803.0 L2608 803.0 L2608 803.0 L2609 803.0 L2609 803.1 L2610 803.1 L2610 803.5 L2611 803.5 L2611 801.3 L2612 801.3 L2612 802.4 L2613 802.4 L2613 802.6 L2614 802.6 L2614 802.9 L2615 802.9 L2615 802.1 L2616 802.1 L2616 802.7 L2617 802.7 L2617 803.5 L2618 803.5 L2618 806.2 L2619 806.2 L2619 807.2 L2620 807.2 L2620 807.4 L2621 807.4 L2621 809.3 L2622 809.3 L2622 812.8 L2623 812.8 L2623 814.5 L2624 814.5 L2624 820.1 L2625 820.1 L2625 820.1 L2626 820.1 L2626 820.1 L2627 820.1 L2627 820.1 L2628 820.1 L2628 820.1 L2629 820.1 L2629 820.1 L2630 820.1 L2630 820.1 L2631 820.1 L2631 821.3 L2630 821.3 L2630 821.3 L2629 821.3 L2629 821.3 L2628 821.3 L2628 821.3 L2627 821.3 L2627 821.3 L2626 821.3 L2626 821.3 L2625 821.3 L2625 821.3 L2624 821.3 L2624 828.8 L2623 828.8 L2623 828.4 L2622 828.4 L2622 831.3 L2621 831.3 L2621 833.1 L2620 833.1 L2620 833.5 L2619 833.5 L2619 834.6 L2618 834.6 L2618 837.1 L2617 837.1 L2617 837.9 L2616 837.9 L2616 838.6 L2615 838.6 L2615 838.4 L2614 838.4 L2614 838.8 L2613 838.8 L2613 839.0 L2612 839.0 L2612 839.8 L2611 839.8 L2611 838.1 L2610 838.1 L2610 838.9 L2609 838.9 L2609 839.0 L2608 839.0 L2608 839.1 L2607 839.1 L2607 839.3 L2606 839.3 L2606 839.4 L2605 839.4 L2605 839.6 L2604 839.6 L2604 840.6 L2603 840.6 L2603 840.7 L2602 840.7 L2602 839.4 L2601 839.4 L2601 839.6 L2600 839.6 L2600 839.9 L2599 839.9 L2599 840.0 L2598 840.0 L2598 840.2 L2597 840.2 L2597 840.3 L2596 840.3 L2596 839.9 L2595 839.9 L2595 841.8 L2594 841.8 L2594 841.9 L2593 841.9 L2593 841.9 L2592 841.9 L2592 842.1 L2591 842.1 L2591 844.5 L2590 844.5 L2590 844.6 L2589 844.6 L2589 844.8 L2588 844.8 L2588 842.2 L2587 842.2 L2587 842.3 L2586 842.3 L2586 842.5 L2585 842.5 L2585 841.3 L2584 841.3 L2584 841.4 L2583 841.4 L2583 841.5 L2582 841.5 L2582 841.6 L2581 841.6 L2581 841.8 L2580 841.8 L2580 843.7 L2579 843.7 L2579 843.9 L2578 843.9 L2578 844.0 L2577 844.0 L2577 843.7 L2576 843.7 L2576 846.3 L2575 846.3 L2575 846.4 L2574 846.4 L2574 846.4 L2573 846.4 L2573 843.8 L2572 843.8 L2572 843.9 L2571 843.9 L2571 844.1 L2570 844.1 L2570 847.7 L2569 847.7 L2569 847.9 L2568 847.9 L2568 848.0 L2567 848.0 L2567 843.8 L2566 843.8 L2566 843.9 L2565 843.9 L2565 844.0 L2564 844.0 L2564 848.6 L2563 848.6 L2563 848.7 L2562 848.7 L2562 846.6 L2561 846.6 L2561 846.7 L2560 846.7 L2560 847.2 L2559 847.2 L2559 847.3 L2558 847.3 L2558 845.5 L2557 845.5 L2557 847.5 L2556 847.5 L2556 847.6 L2555 847.6 L2555 847.8 L2554 847.8 L2554 846.6 L2553 846.6 L2553 846.7 L2552 846.7 L2552 846.5 L2551 846.5 L2551 846.6 L2550 846.6 L2550 846.8 L2549 846.8 L2549 845.6 L2548 845.6 L2548 845.7 L2547 845.7 L2547 845.9 L2546 845.9 L2546 846.0 L2545 846.0 L2545 848.4 L2544 848.4 L2544 848.6 L2543 848.6 L2543 849.2 L2542 849.2 L2542 849.3 L2541 849.3 L2541 849.5 L2540 849.5 L2540 848.1 L2539 848.1 L2539 848.8 L2538 848.8 L2538 849.5 L2537 849.5 L2537 847.4 L2536 847.4 L2536 847.5 L2535 847.5 L2535 847.3 L2534 847.3 L2534 848.8 L2533 848.8 L2533 849.8 L2532 849.8 L2532 847.7 L2531 847.7 L2531 849.2 L2530 849.2 L2530 853.0 L2529 853.0 L2529 853.1 L2528 853.1 L2528 848.3 L2527 848.3 L2527 848.4 L2526 848.4 L2526 851.8 L2525 851.8 L2525 850.5 L2524 850.5 L2524 850.7 L2523 850.7 L2523 836.8 L2522 836.8 L2522 821.3 L2521 821.3 L2521 831.6 L2520 831.6 L2520 823.1 L2519 823.1 L2519 834.5 L2518 834.5 L2518 832.9 L2517 832.9 L2517 832.9 L2516 832.9 L2516 832.9 L2515 832.9 L2515 862.7 L2514 862.7 L2514 833.0 L2513 833.0 L2513 824.1 L2512 824.1 L2512 824.1 L2511 824.1 L2511 838.7 L2510 838.7 L2510 838.3 L2509 838.3 L2509 838.3 L2508 838.3 L2508 831.1 L2507 831.1 L2507 833.3 L2506 833.3 L2506 833.3 L2505 833.3 L2505 833.3 L2504 833.3 L2504 840.8 L2503 840.8 L2503 840.8 L2502 840.8 L2502 822.4 L2501 822.4 L2501 821.3 L2500 821.3 L2500 822.8 L2499 822.8 L2499 823.7 L2498 823.7 L2498 822.8 L2497 822.8 L2497 821.3 L2496 821.3 L2496 828.0 L2495 828.0 L2495 830.9 L2494 830.9 L2494 832.9 L2493 832.9 L2493 834.7 L2492 834.7 L2492 836.5 L2491 836.5 L2491 835.6 L2490 835.6 L2490 840.4 L2489 840.4 L2489 841.5 L2488 841.5 L2488 840.5 L2487 840.5 L2487 841.3 L2486 841.3 L2486 839.4 L2485 839.4 L2485 840.1 L2484 840.1 L2484 841.8 L2483 841.8 L2483 842.3 L2482 842.3 L2482 843.0 L2481 843.0 L2481 843.4 L2480 843.4 L2480 843.8 L2479 843.8 L2479 842.5 L2478 842.5 L2478 848.8 L2477 848.8 L2477 846.1 L2476 846.1 L2476 843.2 L2475 843.2 L2475 843.4 L2474 843.4 L2474 843.5 L2473 843.5 L2473 850.0 L2472 850.0 L2472 845.6 L2471 845.6 L2471 848.7 L2470 848.7 L2470 844.9 L2469 844.9 L2469 852.7 L2468 852.7 L2468 852.7 L2467 852.7 L2467 852.7 L2466 852.7 L2466 848.6 L2465 848.6 L2465 848.6 L2464 848.6 L2464 848.6 L2463 848.6 L2463 846.0 L2462 846.0 L2462 846.0 L2461 846.0 L2461 846.0 L2460 846.0 L2460 844.0 L2459 844.0 L2459 848.4 L2458 848.4 L2458 850.3 L2457 850.3 L2457 846.4 L2456 846.4 L2456 843.6 L2455 843.6 L2455 843.6 L2454 843.6 L2454 843.6 L2453 843.6 L2453 845.9 L2452 845.9 L2452 852.7 L2451 852.7 L2451 839.1 L2450 839.1 L2450 821.3 L2449 821.3 L2449 835.9 L2448 835.9 L2448 838.7 L2447 838.7 L2447 835.9 L2446 835.9 L2446 835.9 L2445 835.9 L2445 836.6 L2444 836.6 L2444 836.6 L2443 836.6 L2443 841.2 L2442 841.2 L2442 841.2 L2441 841.2 L2441 845.7 L2440 845.7 L2440 845.7 L2439 845.7 L2439 839.6 L2438 839.6 L2438 839.6 L2437 839.6 L2437 846.0 L2436 846.0 L2436 846.0 L2435 846.0 L2435 846.0 L2434 846.0 L2434 834.0 L2433 834.0 L2433 831.3 L2432 831.3 L2432 829.7 L2431 829.7 L2431 828.6 L2430 828.6 L2430 821.3 L2429 821.3 L2429 821.5 L2428 821.5 L2428 822.3 L2427 822.3 L2427 823.0 L2426 823.0 L2426 823.6 L2425 823.6 L2425 824.0 L2424 824.0 L2424 824.2 L2423 824.2 L2423 824.2 L2422 824.2 L2422 824.0 L2421 824.0 L2421 823.6 L2420 823.6 L2420 823.0 L2419 823.0 L2419 822.3 L2418 822.3 L2418 821.5 L2417 821.5 L2417 821.3 L2416 821.3 L2416 828.2 L2415 828.2 L2415 831.2 L2414 831.2 L2414 836.9 L2413 836.9 L2413 839.2 L2412 839.2 L2412 841.2 L2411 841.2 L2411 843.0 L2410 843.0 L2410 844.5 L2409 844.5 L2409 840.8 L2408 840.8 L2408 841.8 L2407 841.8 L2407 843.0 L2406 843.0 L2406 842.6 L2405 842.6 L2405 843.3 L2404 843.3 L2404 843.9 L2403 843.9 L2403 844.5 L2402 844.5 L2402 845.1 L2401 845.1 L2401 851.1 L2400 851.1 L2400 851.6 L2399 851.6 L2399 847.8 L2398 847.8 L2398 848.1 L2397 848.1 L2397 849.4 L2396 849.4 L2396 849.7 L2395 849.7 L2395 851.3 L2394 851.3 L2394 851.5 L2393 851.5 L2393 848.8 L2392 848.8 L2392 848.9 L2391 848.9 L2391 849.0 L2390 849.0 L2390 849.0 L2389 849.0 L2389 856.7 L2388 856.7 L2388 848.3 L2387 848.3 L2387 850.0 L2386 850.0 L2386 853.8 L2385 853.8 L2385 856.4 L2384 856.4 L2384 856.4 L2383 856.4 L2383 856.4 L2382 856.4 L2382 849.2 L2381 849.2 L2381 837.1 L2380 837.1 L2380 821.3 L2379 821.3 L2379 829.7 L2378 829.7 L2378 831.1 L2377 831.1 L2377 855.7 L2376 855.7 L2376 855.7 L2375 855.7 L2375 855.7 L2374 855.7 L2374 846.9 L2373 846.9 L2373 846.5 L2372 846.5 L2372 846.5 L2371 846.5 L2371 838.4 L2370 838.4 L2370 838.4 L2369 838.4 L2369 829.4 L2368 829.4 L2368 829.4 L2367 829.4 L2367 829.4 L2366 829.4 L2366 840.6 L2365 840.6 L2365 838.8 L2364 838.8 L2364 824.6 L2363 824.6 L2363 821.3 L2362 821.3 L2362 821.5 L2361 821.5 L2361 822.3 L2360 822.3 L2360 823.0 L2359 823.0 L2359 823.6 L2358 823.6 L2358 824.0 L2357 824.0 L2357 824.2 L2356 824.2 L2356 824.2 L2355 824.2 L2355 824.0 L2354 824.0 L2354 823.6 L2353 823.6 L2353 823.0 L2352 823.0 L2352 822.3 L2351 822.3 L2351 821.5 L2350 821.5 L2350 821.3 L2349 821.3 L2349 829.2 L2348 829.2 L2348 833.0 L2347 833.0 L2347 834.9 L2346 834.9 L2346 837.0 L2345 837.0 L2345 840.3 L2344 840.3 L2344 840.3 L2343 840.3 L2343 841.7 L2342 841.7 L2342 843.0 L2341 843.0 L2341 844.7 L2340 844.7 L2340 845.3 L2339 845.3 L2339 847.3 L2338 847.3 L2338 848.2 L2337 848.2 L2337 849.1 L2336 849.1 L2336 849.9 L2335 849.9 L2335 850.6 L2334 850.6 L2334 852.8 L2333 852.8 L2333 851.0 L2332 851.0 L2332 854.7 L2331 854.7 L2331 855.3 L2330 855.3 L2330 855.8 L2329 855.8 L2329 854.9 L2328 854.9 L2328 854.1 L2327 854.1 L2327 854.4 L2326 854.4 L2326 854.8 L2325 854.8 L2325 854.0 L2324 854.0 L2324 854.3 L2323 854.3 L2323 856.1 L2322 856.1 L2322 855.7 L2321 855.7 L2321 855.9 L2320 855.9 L2320 858.6 L2319 858.6 L2319 858.7 L2318 858.7 L2318 858.8 L2317 858.8 L2317 858.6 L2316 858.6 L2316 855.7 L2315 855.7 L2315 859.7 L2314 859.7 L2314 859.7 L2313 859.7 L2313 857.1 L2312 857.1 L2312 857.1 L2311 857.1 L2311 857.1 L2310 857.1 L2310 859.7 L2309 859.7 L2309 821.3 L2308 821.3 L2308 821.3 L2307 821.3 L2307 835.4 L2306 835.4 L2306 837.7 L2305 837.7 L2305 838.9 L2304 838.9 L2304 836.4 L2303 836.4 L2303 834.0 L2302 834.0 L2302 834.0 L2301 834.0 L2301 835.2 L2300 835.2 L2300 835.2 L2299 835.2 L2299 855.0 L2298 855.0 L2298 855.0 L2297 855.0 L2297 845.4 L2296 845.4 L2296 845.4 L2295 845.4 L2295 824.9 L2294 824.9 L2294 824.9 L2293 824.9 L2293 836.4 L2292 836.4 L2292 832.1 L2291 832.1 L2291 862.7 L2290 862.7 L2290 823.7 L2289 823.7 L2289 823.7 L2288 823.7 L2288 862.7 L2287 862.7 L2287 838.4 L2286 838.4 L2286 834.8 L2285 834.8 L2285 829.6 L2284 829.6 L2284 821.8 L2283 821.8 L2283 821.3 L2282 821.3 L2282 821.3 L2281 821.3 L2281 821.3 L2280 821.3 L2280 821.3 L2279 821.3 L2279 821.3 L2278 821.3 L2278 821.3 L2277 821.3 L2277 821.3 L2276 821.3 L2276 821.3 L2275 821.3 L2275 821.3 L2274 821.3 L2274 821.3 L2273 821.3 L2273 821.3 L2272 821.3 L2272 821.3 L2271 821.3 L2271 821.3 L2270 821.3 L2270 821.3 L2269 821.3 L2269 821.3 L2268 821.3 L2268 821.3 L2267 821.3 L2267 821.3 L2266 821.3 L2266 821.3 L2265 821.3 L2265 821.3 L2264 821.3 L2264 821.3 L2263 821.3 L2263 821.3 L2262 821.3 L2262 821.3 L2261 821.3 L2261 821.3 L2260 821.3 L2260 821.3 L2259 821.3 L2259 821.3 L2258 821.3 L2258 821.3 L2257 821.3 L2257 821.3 L2256 821.3 L2256 821.3 L2255 821.3 L2255 821.3 L2254 821.3 L2254 821.3 L2253 821.3 L2253 821.3 L2252 821.3 L2252 821.3 L2251 821.3 L2251 821.3 L2250 821.3 L2250 821.3 L2249 821.3 L2249 821.3 L2248 821.3 L2248 821.3 L2247 821.3 L2247 821.3 L2246 821.3 L2246 821.3 L2245 821.3 L2245 821.3 L2244 821.3 L2244 821.3 L2243 821.3 L2243 821.3 L2242 821.3 L2242 821.3 L2241 821.3 L2241 821.3 L2240 821.3 L2240 821.3 L2239 821.3 L2239 821.3 L2238 821.3 L2238 821.3 L2237 821.3 L2237 821.3 L2236 821.3 L2236 821.3 L2235 821.3 L2235 821.3 L2234 821.3 L2234 821.3 L2233 821.3 L2233 821.3 L2232 821.3 L2232 821.3 L2231 821.3 L2231 821.3 L2230 821.3 L2230 821.3 L2229 821.3 L2229 821.3 L2228 821.3 L2228 821.3 L2227 821.3 L2227 821.3 L2226 821.3 L2226 821.3 L2225 821.3 L2225 821.3 L2224 821.3 L2224 821.3 L2223 821.3 L2223 821.3 L2222 821.3 L2222 821.3 L2221 821.3 L2221 821.3 L2220 821.3 L2220 821.3 L2219 821.3 L2219 821.3 L2218 821.3 L2218 821.3 L2217 821.3 L2217 821.3 L2216 821.3 L2216 821.3 L2215 821.3 L2215 821.3 L2214 821.3 L2214 821.3 L2213 821.3 L2213 829.3 L2212 829.3 L2212 832.7 L2211 832.7 L2211 835.2 L2210 835.2 L2210 836.0 L2209 836.0 L2209 837.4 L2208 837.4 L2208 841.7 L2207 841.7 L2207 842.1 L2206 842.1 L2206 843.2 L2205 843.2 L2205 844.2 L2204 844.2 L2204 843.3 L2203 843.3 L2203 844.0 L2202 844.0 L2202 844.6 L2201 844.6 L2201 842.4 L2200 842.4 L2200 842.8 L2199 842.8 L2199 851.7 L2198 851.7 L2198 843.3 L2197 843.3 L2197 843.5 L2196 843.5 L2196 850.2 L2195 850.2 L2195 850.3 L2194 850.3 L2194 850.3 L2193 850.3 L2193 850.1 L2192 850.1 L2192 850.1 L2191 850.1 L2191 850.1 L2190 850.1 L2190 847.1 L2189 847.1 L2189 847.1 L2188 847.1 L2188 852.7 L2187 852.7 L2187 852.7 L2186 852.7 L2186 843.6 L2185 843.6 L2185 843.6 L2184 843.6 L2184 846.8 L2183 846.8 L2183 846.8 L2182 846.8 L2182 849.0 L2181 849.0 L2181 849.0 L2180 849.0 L2180 845.4 L2179 845.4 L2179 845.4 L2178 845.4 L2178 844.0 L2177 844.0 L2177 844.0 L2176 844.0 L2176 847.5 L2175 847.5 L2175 847.5 L2174 847.5 L2174 849.3 L2173 849.3 L2173 849.3 L2172 849.3 L2172 849.3 L2171 849.3 L2171 843.6 L2170 843.6 L2170 843.7 L2169 843.7 L2169 846.1 L2168 846.1 L2168 835.4 L2167 835.4 L2167 821.3 L2166 821.3 L2166 840.5 L2165 840.5 L2165 843.6 L2164 843.6 L2164 838.3 L2163 838.3 L2163 837.9 L2162 837.9 L2162 837.9 L2161 837.9 L2161 848.4 L2160 848.4 L2160 844.0 L2159 844.0 L2159 836.5 L2158 836.5 L2158 836.5 L2157 836.5 L2157 838.4 L2156 838.4 L2156 838.2 L2155 838.2 L2155 836.5 L2154 836.5 L2154 836.5 L2153 836.5 L2153 836.8 L2152 836.8 L2152 838.9 L2151 838.9 L2151 838.9 L2150 838.9 L2150 832.2 L2149 832.2 L2149 827.3 L2148 827.3 L2148 821.3 L2147 821.3 L2147 821.7 L2146 821.7 L2146 822.6 L2145 822.6 L2145 823.4 L2144 823.4 L2144 824.0 L2143 824.0 L2143 824.4 L2142 824.4 L2142 824.7 L2141 824.7 L2141 824.7 L2140 824.7 L2140 824.4 L2139 824.4 L2139 824.0 L2138 824.0 L2138 823.4 L2137 823.4 L2137 822.6 L2136 822.6 L2136 821.7 L2135 821.7 L2135 821.3 L2134 821.3 L2134 829.4 L2133 829.4 L2133 832.6 L2132 832.6 L2132 838.8 L2131 838.8 L2131 841.2 L2130 841.2 L2130 843.2 L2129 843.2 L2129 844.6 L2128 844.6 L2128 846.0 L2127 846.0 L2127 840.0 L2126 840.0 L2126 841.0 L2125 841.0 L2125 839.9 L2124 839.9 L2124 840.4 L2123 840.4 L2123 850.7 L2122 850.7 L2122 851.2 L2121 851.2 L2121 846.3 L2120 846.3 L2120 846.5 L2119 846.5 L2119 842.7 L2118 842.7 L2118 846.1 L2117 846.1 L2117 846.1 L2116 846.1 L2116 842.9 L2115 842.9 L2115 842.9 L2114 842.9 L2114 842.9 L2113 842.9 L2113 846.3 L2112 846.3 L2112 851.0 L2111 851.0 L2111 851.0 L2110 851.0 L2110 844.8 L2109 844.8 L2109 841.4 L2108 841.4 L2108 846.9 L2107 846.9 L2107 848.5 L2106 848.5 L2106 848.5 L2105 848.5 L2105 849.7 L2104 849.7 L2104 849.7 L2103 849.7 L2103 844.1 L2102 844.1 L2102 844.1 L2101 844.1 L2101 841.4 L2100 841.4 L2100 849.2 L2099 849.2 L2099 844.9 L2098 844.9 L2098 834.6 L2097 834.6 L2097 821.3 L2096 821.3 L2096 857.1 L2095 857.1 L2095 862.7 L2094 862.7 L2094 862.7 L2093 862.7 L2093 829.7 L2092 829.7 L2092 829.7 L2091 829.7 L2091 824.8 L2090 824.8 L2090 825.1 L2089 825.1 L2089 825.1 L2088 825.1 L2088 822.2 L2087 822.2 L2087 822.2 L2086 822.2 L2086 829.1 L2085 829.1 L2085 829.1 L2084 829.1 L2084 829.1 L2083 829.1 L2083 860.4 L2082 860.4 L2082 860.4 L2081 860.4 L2081 860.4 L2080 860.4 L2080 824.6 L2079 824.6 L2079 824.6 L2078 824.6 L2078 822.4 L2077 822.4 L2077 822.4 L2076 822.4 L2076 827.5 L2075 827.5 L2075 827.5 L2074 827.5 L2074 826.2 L2073 826.2 L2073 825.5 L2072 825.5 L2072 824.8 L2071 824.8 L2071 824.8 L2070 824.8 L2070 824.0 L2069 824.0 L2069 833.3 L2068 833.3 L2068 833.3 L2067 833.3 L2067 833.3 L2066 833.3 L2066 856.2 L2065 856.2 L2065 862.0 L2064 862.0 L2064 833.2 L2063 833.2 L2063 833.2 L2062 833.2 L2062 826.1 L2061 826.1 L2061 843.9 L2060 843.9 L2060 822.1 L2059 822.1 L2059 822.1 L2058 822.1 L2058 822.1 L2057 822.1 L2057 822.6 L2056 822.6 L2056 822.6 L2055 822.6 L2055 825.1 L2054 825.1 L2054 836.6 L2053 836.6 L2053 836.6 L2052 836.6 L2052 853.9 L2051 853.9 L2051 853.9 L2050 853.9 L2050 831.0 L2049 831.0 L2049 827.8 L2048 827.8 L2048 827.8 L2047 827.8 L2047 824.1 L2046 824.1 L2046 823.2 L2045 823.2 L2045 822.2 L2044 822.2 L2044 821.3 L2043 821.3 L2043 821.3 L2042 821.3 L2042 821.3 L2041 821.3 L2041 830.6 L2040 830.6 L2040 834.3 L2039 834.3 L2039 834.8 L2038 834.8 L2038 836.3 L2037 836.3 L2037 843.8 L2036 843.8 L2036 844.8 L2035 844.8 L2035 862.4 L2034 862.4 L2034 840.6 L2033 840.6 L2033 840.6 L2032 840.6 L2032 838.8 L2031 838.8 L2031 838.8 L2030 838.8 L2030 838.8 L2029 838.8 L2029 838.8 L2028 838.8 L2028 838.8 L2027 838.8 L2027 840.2 L2026 840.2 L2026 855.4 L2025 855.4 L2025 855.4 L2024 855.4 L2024 850.1 L2023 850.1 L2023 862.7 L2022 862.7 L2022 862.7 L2021 862.7 L2021 862.7 L2020 862.7 L2020 838.8 L2019 838.8 L2019 838.8 L2018 838.8 L2018 849.1 L2017 849.1 L2017 849.1 L2016 849.1 L2016 852.1 L2015 852.1 L2015 852.1 L2014 852.1 L2014 852.7 L2013 852.7 L2013 852.7 L2012 852.7 L2012 843.6 L2011 843.6 L2011 862.6 L2010 862.6 L2010 862.6 L2009 862.6 L2009 838.8 L2008 838.8 L2008 838.8 L2007 838.8 L2007 838.8 L2006 838.8 L2006 839.2 L2005 839.2 L2005 838.8 L2004 838.8 L2004 838.8 L2003 838.8 L2003 846.1 L2002 846.1 L2002 846.1 L2001 846.1 L2001 850.4 L2000 850.4 L2000 861.3 L1999 861.3 L1999 861.3 L1998 861.3 L1998 861.3 L1997 861.3 L1997 853.6 L1996 853.6 L1996 853.6 L1995 853.6 L1995 838.8 L1994 838.8 L1994 838.8 L1993 838.8 L1993 854.3 L1992 854.3 L1992 838.8 L1991 838.8 L1991 862.7 L1990 862.7 L1990 847.0 L1989 847.0 L1989 838.8 L1988 838.8 L1988 838.8 L1987 838.8 L1987 838.8 L1986 838.8 L1986 838.8 L1985 838.8 L1985 851.1 L1984 851.1 L1984 851.1 L1983 851.1 L1983 846.3 L1982 846.3 L1982 861.5 L1981 861.5 L1981 839.7 L1980 839.7 L1980 839.7 L1979 839.7 L1979 859.3 L1978 859.3 L1978 855.8 L1977 855.8 L1977 844.3 L1976 844.3 L1976 841.5 L1975 841.5 L1975 831.1 L1974 831.1 L1974 840.9 L1973 840.9 L1973 836.7 L1972 836.7 L1972 832.3 L1971 832.3 L1971 826.1 L1970 826.1 L1970 821.3 L1969 821.3 L1969 826.6 L1968 826.6 L1968 829.0 L1967 829.0 L1967 831.0 L1966 831.0 L1966 832.5 L1965 832.5 L1965 847.2 L1964 847.2 L1964 838.4 L1963 838.4 L1963 834.0 L1962 834.0 L1962 834.7 L1961 834.7 L1961 835.4 L1960 835.4 L1960 836.1 L1959 836.1 L1959 843.4 L1958 843.4 L1958 848.6 L1957 848.6 L1957 839.9 L1956 839.9 L1956 840.4 L1955 840.4 L1955 848.5 L1954 848.5 L1954 849.1 L1953 849.1 L1953 854.6 L1952 854.6 L1952 839.7 L1951 839.7 L1951 840.0 L1950 840.0 L1950 840.2 L1949 840.2 L1949 840.4 L1948 840.4 L1948 867.0 L1947 867.0 L1947 867.4 L1946 867.4 L1946 847.6 L1945 847.6 L1945 847.7 L1944 847.7 L1944 847.9 L1943 847.9 L1943 842.0 L1942 842.0 L1942 868.6 L1941 868.6 L1941 868.7 L1940 868.7 L1940 853.4 L1939 853.4 L1939 853.4 L1938 853.4 L1938 841.3 L1937 841.3 L1937 841.3 L1936 841.3 L1936 841.9 L1935 841.9 L1935 841.7 L1934 841.7 L1934 841.7 L1933 841.7 L1933 841.7 L1932 841.7 L1932 853.4 L1931 853.4 L1931 853.4 L1930 853.4 L1930 841.3 L1929 841.3 L1929 841.3 L1928 841.3 L1928 841.3 L1927 841.3 L1927 843.3 L1926 843.3 L1926 843.3 L1925 843.3 L1925 841.5 L1924 841.5 L1924 845.0 L1923 845.0 L1923 858.3 L1922 858.3 L1922 858.3 L1921 858.3 L1921 849.5 L1920 849.5 L1920 849.5 L1919 849.5 L1919 862.4 L1918 862.4 L1918 858.0 L1917 858.0 L1917 858.0 L1916 858.0 L1916 841.3 L1915 841.3 L1915 841.3 L1914 841.3 L1914 841.3 L1913 841.3 L1913 841.3 L1912 841.3 L1912 841.3 L1911 841.3 L1911 845.1 L1910 845.1 L1910 833.3 L1909 833.3 L1909 821.3 L1908 821.3 L1908 821.3 L1907 821.3 L1907 821.3 L1906 821.3 L1906 821.3 L1905 821.3 L1905 835.8 L1904 835.8 L1904 842.0 L1903 842.0 L1903 856.2 L1902 856.2 L1902 849.5 L1901 849.5 L1901 849.5 L1900 849.5 L1900 857.7 L1899 857.7 L1899 852.3 L1898 852.3 L1898 855.6 L1897 855.6 L1897 845.2 L1896 845.2 L1896 845.2 L1895 845.2 L1895 857.8 L1894 857.8 L1894 855.4 L1893 855.4 L1893 874.7 L1892 874.7 L1892 874.7 L1891 874.7 L1891 874.7 L1890 874.7 L1890 859.6 L1889 859.6 L1889 872.6 L1888 872.6 L1888 872.6 L1887 872.6 L1887 841.4 L1886 841.4 L1886 874.7 L1885 874.7 L1885 874.7 L1884 874.7 L1884 847.5 L1883 847.5 L1883 847.5 L1882 847.5 L1882 847.8 L1881 847.8 L1881 842.1 L1880 842.1 L1880 842.1 L1879 842.1 L1879 853.9 L1878 853.9 L1878 844.9 L1877 844.9 L1877 854.0 L1876 854.0 L1876 854.0 L1875 854.0 L1875 840.8 L1874 840.8 L1874 840.8 L1873 840.8 L1873 840.8 L1872 840.8 L1872 844.0 L1871 844.0 L1871 840.8 L1870 840.8 L1870 850.6 L1869 850.6 L1869 850.6 L1868 850.6 L1868 846.8 L1867 846.8 L1867 869.6 L1866 869.6 L1866 869.6 L1865 869.6 L1865 869.6 L1864 869.6 L1864 847.0 L1863 847.0 L1863 851.4 L1862 851.4 L1862 851.4 L1861 851.4 L1861 843.9 L1860 843.9 L1860 843.9 L1859 843.9 L1859 841.8 L1858 841.8 L1858 841.8 L1857 841.8 L1857 841.8 L1856 841.8 L1856 841.8 L1855 841.8 L1855 841.8 L1854 841.8 L1854 863.3 L1853 863.3 L1853 863.3 L1852 863.3 L1852 867.1 L1851 867.1 L1851 867.1 L1850 867.1 L1850 867.1 L1849 867.1 L1849 868.0 L1848 868.0 L1848 860.1 L1847 860.1 L1847 860.1 L1846 860.1 L1846 860.1 L1845 860.1 L1845 869.6 L1844 869.6 L1844 859.7 L1843 859.7 L1843 857.8 L1842 857.8 L1842 842.5 L1841 842.5 L1841 841.4 L1840 841.4 L1840 842.0 L1839 842.0 L1839 840.7 L1838 840.7 L1838 834.3 L1837 834.3 L1837 854.4 L1836 854.4 L1836 851.7 L1835 851.7 L1835 848.9 L1834 848.9 L1834 846.1 L1833 846.1 L1833 829.1 L1832 829.1 L1832 827.9 L1831 827.9 L1831 836.8 L1830 836.8 L1830 828.8 L1829 828.8 L1829 826.6 L1828 826.6 L1828 823.8 L1827 823.8 L1827 821.3 L1826 821.3 L1826 821.3 L1825 821.3 L1825 821.3 L1824 821.3 L1824 821.3 L1823 821.3 L1823 821.3 L1822 821.3 L1822 821.3 L1821 821.3 L1821 821.3 L1820 821.3 L1820 821.3 L1819 821.3 L1819 821.3 L1818 821.3 L1818 821.3 L1817 821.3 L1817 821.3 L1816 821.3 L1816 821.3 L1815 821.3 L1815 821.3 L1814 821.3 L1814 821.3 L1813 821.3 L1813 821.3 L1812 821.3 L1812 821.3 L1811 821.3 L1811 821.3 L1810 821.3 L1810 821.3 L1809 821.3 L1809 821.3 L1808 821.3 L1808 821.3 L1807 821.3 L1807 821.3 L1806 821.3 L1806 821.3 L1805 821.3 L1805 821.3 L1804 821.3 L1804 821.3 L1803 821.3 L1803 821.3 L1802 821.3 L1802 821.3 L1801 821.3 L1801 821.3 L1800 821.3 L1800 821.3 L1799 821.3 L1799 821.3 L1798 821.3 L1798 821.3 L1797 821.3 L1797 821.3 L1796 821.3 L1796 821.3 L1795 821.3 L1795 821.3 L1794 821.3 L1794 821.3 L1793 821.3 L1793 821.3 L1792 821.3 L1792 821.3 L1791 821.3 L1791 821.3 L1790 821.3 L1790 821.3 L1789 821.3 L1789 821.3 L1788 821.3 L1788 821.3 L1787 821.3 L1787 821.3 L1786 821.3 L1786 821.3 L1785 821.3 L1785 821.3 L1784 821.3 L1784 821.3 L1783 821.3 L1783 821.3 L1782 821.3 L1782 821.3 L1781 821.3 L1781 821.3 L1780 821.3 L1780 821.3 L1779 821.3 L1779 821.3 L1778 821.3 L1778 821.3 L1777 821.3 L1777 821.3 L1776 821.3 L1776 821.3 L1775 821.3 L1775 821.3 L1774 821.3 L1774 821.3 L1773 821.3 L1773 821.3 L1772 821.3 L1772 821.3 L1771 821.3 L1771 821.3 L1770 821.3 L1770 821.3 L1769 821.3 L1769 821.3 L1768 821.3 L1768 821.3 L1767 821.3 L1767 821.3 L1766 821.3 L1766 829.0 L1765 829.0 L1765 832.3 L1764 832.3 L1764 835.7 L1763 835.7 L1763 839.2 L1762 839.2 L1762 841.0 L1761 841.0 L1761 842.4 L1760 842.4 L1760 840.2 L1759 840.2 L1759 841.0 L1758 841.0 L1758 841.7 L1757 841.7 L1757 841.9 L1756 841.9 L1756 845.4 L1755 845.4 L1755 845.7 L1754 845.7 L1754 848.0 L1753 848.0 L1753 848.1 L1752 848.1 L1752 848.1 L1751 848.1 L1751 842.8 L1750 842.8 L1750 842.8 L1749 842.8 L1749 845.0 L1748 845.0 L1748 845.0 L1747 845.0 L1747 845.0 L1746 845.0 L1746 843.3 L1745 843.3 L1745 843.3 L1744 843.3 L1744 845.2 L1743 845.2 L1743 845.2 L1742 845.2 L1742 847.1 L1741 847.1 L1741 842.8 L1740 842.8 L1740 842.8 L1739 842.8 L1739 844.0 L1738 844.0 L1738 846.8 L1737 846.8 L1737 854.0 L1736 854.0 L1736 855.5 L1735 855.5 L1735 855.5 L1734 855.5 L1734 845.0 L1733 845.0 L1733 845.0 L1732 845.0 L1732 848.0 L1731 848.0 L1731 864.7 L1730 864.7 L1730 864.7 L1729 864.7 L1729 841.3 L1728 841.3 L1728 841.3 L1727 841.3 L1727 841.3 L1726 841.3 L1726 850.6 L1725 850.6 L1725 850.6 L1724 850.6 L1724 850.6 L1723 850.6 L1723 840.1 L1722 840.1 L1722 852.5 L1721 852.5 L1721 852.5 L1720 852.5 L1720 852.5 L1719 852.5 L1719 851.7 L1718 851.7 L1718 851.7 L1717 851.7 L1717 859.6 L1716 859.6 L1716 859.6 L1715 859.6 L1715 838.8 L1714 838.8 L1714 860.1 L1713 860.1 L1713 856.5 L1712 856.5 L1712 856.5 L1711 856.5 L1711 856.5 L1710 856.5 L1710 840.1 L1709 840.1 L1709 840.1 L1708 840.1 L1708 840.1 L1707 840.1 L1707 856.6 L1706 856.6 L1706 856.6 L1705 856.6 L1705 856.6 L1704 856.6 L1704 842.1 L1703 842.1 L1703 842.7 L1702 842.7 L1702 842.7 L1701 842.7 L1701 841.9 L1700 841.9 L1700 841.9 L1699 841.9 L1699 841.9 L1698 841.9 L1698 857.2 L1697 857.2 L1697 864.7 L1696 864.7 L1696 864.7 L1695 864.7 L1695 864.7 L1694 864.7 L1694 839.6 L1693 839.6 L1693 839.6 L1692 839.6 L1692 847.7 L1691 847.7 L1691 847.7 L1690 847.7 L1690 838.8 L1689 838.8 L1689 845.8 L1688 845.8 L1688 838.8 L1687 838.8 L1687 838.8 L1686 838.8 L1686 838.8 L1685 838.8 L1685 842.6 L1684 842.6 L1684 864.7 L1683 864.7 L1683 864.7 L1682 864.7 L1682 838.8 L1681 838.8 L1681 838.8 L1680 838.8 L1680 841.1 L1679 841.1 L1679 854.6 L1678 854.6 L1678 845.2 L1677 845.2 L1677 838.8 L1676 838.8 L1676 821.3 L1675 821.3 L1675 821.3 L1674 821.3 L1674 821.3 L1673 821.3 L1673 821.3 L1672 821.3 L1672 821.3 L1671 821.3 L1671 821.3 L1670 821.3 L1670 821.3 L1669 821.3 L1669 821.3 L1668 821.3 L1668 821.3 L1667 821.3 L1667 821.3 L1666 821.3 L1666 821.3 L1665 821.3 L1665 821.3 L1664 821.3 L1664 821.3 L1663 821.3 L1663 821.3 L1662 821.3 L1662 821.3 L1661 821.3 L1661 821.3 L1660 821.3 L1660 821.3 L1659 821.3 L1659 821.3 L1658 821.3 L1658 821.3 L1657 821.3 L1657 821.3 L1656 821.3 L1656 821.3 L1655 821.3 L1655 821.3 L1654 821.3 L1654 821.3 L1653 821.3 L1653 821.3 L1652 821.3 L1652 821.3 L1651 821.3 L1651 821.3 L1650 821.3 L1650 821.3 L1649 821.3 L1649 821.3 L1648 821.3 L1648 821.3 L1647 821.3 L1647 821.3 L1646 821.3 L1646 821.3 L1645 821.3 L1645 821.3 L1644 821.3 L1644 821.3 L1643 821.3 L1643 821.3 L1642 821.3 L1642 821.3 L1641 821.3 L1641 821.3 L1640 821.3 L1640 821.3 L1639 821.3 L1639 821.3 L1638 821.3 L1638 821.3 L1637 821.3 L1637 821.3 L1636 821.3 L1636 821.3 L1635 821.3 L1635 821.3 L1634 821.3 L1634 821.3 L1633 821.3 L1633 821.3 L1632 821.3 L1632 821.3 L1631 821.3 L1631 821.3 L1630 821.3 L1630 821.6 L1629 821.6 L1629 822.1 L1628 822.1 L1628 822.1 L1627 822.1 L1627 821.6 L1626 821.6 L1626 821.3 L1625 821.3 L1625 821.3 L1624 821.3 L1624 821.3 L1623 821.3 L1623 821.3 L1622 821.3 L1622 821.3 L1621 821.3 L1621 821.3 L1620 821.3 L1620 821.3 L1619 821.3 L1619 821.3 L1618 821.3 L1618 828.0 L1617 828.0 L1617 831.9 L1616 831.9 L1616 833.5 L1615 833.5 L1615 838.1 L1614 838.1 L1614 839.6 L1613 839.6 L1613 841.0 L1612 841.0 L1612 841.2 L1611 841.2 L1611 842.2 L1610 842.2 L1610 840.3 L1609 840.3 L1609 841.0 L1608 841.0 L1608 842.2 L1607 842.2 L1607 842.7 L1606 842.7 L1606 843.1 L1605 843.1 L1605 842.3 L1604 842.3 L1604 842.5 L1603 842.5 L1603 844.8 L1602 844.8 L1602 843.7 L1601 843.7 L1601 846.3 L1600 846.3 L1600 846.3 L1599 846.3 L1599 842.8 L1598 842.8 L1598 842.8 L1597 842.8 L1597 849.7 L1596 849.7 L1596 839.2 L1595 839.2 L1595 854.7 L1594 854.7 L1594 854.7 L1593 854.7 L1593 851.4 L1592 851.4 L1592 851.4 L1591 851.4 L1591 841.2 L1590 841.2 L1590 851.9 L1589 851.9 L1589 836.9 L1588 836.9 L1588 842.7 L1587 842.7 L1587 848.1 L1586 848.1 L1586 848.1 L1585 848.1 L1585 848.1 L1584 848.1 L1584 841.5 L1583 841.5 L1583 841.5 L1582 841.5 L1582 855.8 L1581 855.8 L1581 855.8 L1580 855.8 L1580 836.2 L1579 836.2 L1579 844.2 L1578 844.2 L1578 844.2 L1577 844.2 L1577 847.6 L1576 847.6 L1576 837.8 L1575 837.8 L1575 837.8 L1574 837.8 L1574 840.9 L1573 840.9 L1573 839.3 L1572 839.3 L1572 842.4 L1571 842.4 L1571 842.4 L1570 842.4 L1570 840.0 L1569 840.0 L1569 840.0 L1568 840.0 L1568 840.0 L1567 840.0 L1567 836.8 L1566 836.8 L1566 846.5 L1565 846.5 L1565 846.5 L1564 846.5 L1564 843.8 L1563 843.8 L1563 843.8 L1562 843.8 L1562 841.1 L1561 841.1 L1561 841.1 L1560 841.1 L1560 856.7 L1559 856.7 L1559 856.7 L1558 856.7 L1558 856.7 L1557 856.7 L1557 838.1 L1556 838.1 L1556 838.6 L1555 838.6 L1555 844.9 L1554 844.9 L1554 856.7 L1553 856.7 L1553 856.7 L1552 856.7 L1552 856.7 L1551 856.7 L1551 856.7 L1550 856.7 L1550 856.7 L1549 856.7 L1549 839.7 L1548 839.7 L1548 839.7 L1547 839.7 L1547 842.4 L1546 842.4 L1546 842.4 L1545 842.4 L1545 840.8 L1544 840.8 L1544 840.8 L1543 840.8 L1543 840.8 L1542 840.8 L1542 843.4 L1541 843.4 L1541 836.9 L1540 836.9 L1540 836.9 L1539 836.9 L1539 834.7 L1538 834.7 L1538 836.3 L1537 836.3 L1537 834.4 L1536 834.4 L1536 830.1 L1535 830.1 L1535 826.1 L1534 826.1 L1534 821.3 L1533 821.3 L1533 821.3 L1532 821.3 L1532 821.3 L1531 821.3 L1531 821.3 L1530 821.3 L1530 821.3 L1529 821.3 L1529 821.3 L1528 821.3 L1528 821.3 L1527 821.3 L1527 821.3 L1526 821.3 L1526 821.3 L1525 821.3 L1525 821.3 L1524 821.3 L1524 821.3 L1523 821.3 L1523 821.3 L1522 821.3 L1522 821.3 L1521 821.3 L1521 821.3 L1520 821.3 L1520 821.3 L1519 821.3 L1519 821.3 L1518 821.3 L1518 821.3 L1517 821.3 L1517 821.3 L1516 821.3 L1516 821.3 L1515 821.3 L1515 821.3 L1514 821.3 L1514 821.3 L1513 821.3 L1513 821.3 L1512 821.3 L1512 821.3 L1511 821.3 L1511 821.3 L1510 821.3 L1510 821.3 L1509 821.3 L1509 821.3 L1508 821.3 L1508 821.3 L1507 821.3 L1507 821.3 L1506 821.3 L1506 821.3 L1505 821.3 L1505 821.3 L1504 821.3 L1504 821.3 L1503 821.3 L1503 821.3 L1502 821.3 L1502 821.3 L1501 821.3 L1501 821.3 L1500 821.3 L1500 821.3 L1499 821.3 L1499 821.3 L1498 821.3 L1498 821.3 L1497 821.3 L1497 821.3 L1496 821.3 L1496 821.3 L1495 821.3 L1495 821.3 L1494 821.3 L1494 821.3 L1493 821.3 L1493 821.3 L1492 821.3 L1492 821.3 L1491 821.3 L1491 821.3 L1490 821.3 L1490 821.3 L1489 821.3 L1489 821.3 L1488 821.3 L1488 821.3 L1487 821.3 L1487 821.3 L1486 821.3 L1486 821.3 L1485 821.3 L1485 821.3 L1484 821.3 L1484 827.4 L1483 827.4 L1483 832.5 L1482 832.5 L1482 831.9 L1481 831.9 L1481 833.4 L1480 833.4 L1480 834.8 L1479 834.8 L1479 835.9 L1478 835.9 L1478 836.9 L1477 836.9 L1477 837.8 L1476 837.8 L1476 842.7 L1475 842.7 L1475 843.6 L1474 843.6 L1474 844.3 L1473 844.3 L1473 846.9 L1472 846.9 L1472 847.5 L1471 847.5 L1471 847.2 L1470 847.2 L1470 847.3 L1469 847.3 L1469 847.7 L1468 847.7 L1468 843.5 L1467 843.5 L1467 843.8 L1466 843.8 L1466 843.9 L1465 843.9 L1465 842.8 L1464 842.8 L1464 848.7 L1463 848.7 L1463 848.7 L1462 848.7 L1462 849.4 L1461 849.4 L1461 844.5 L1460 844.5 L1460 841.5 L1459 841.5 L1459 866.7 L1458 866.7 L1458 866.7 L1457 866.7 L1457 866.7 L1456 866.7 L1456 850.3 L1455 850.3 L1455 850.3 L1454 850.3 L1454 840.2 L1453 840.2 L1453 848.4 L1452 848.4 L1452 852.7 L1451 852.7 L1451 852.7 L1450 852.7 L1450 845.8 L1449 845.8 L1449 845.8 L1448 845.8 L1448 842.6 L1447 842.6 L1447 866.7 L1446 866.7 L1446 848.8 L1445 848.8 L1445 848.8 L1444 848.8 L1444 859.6 L1443 859.6 L1443 859.6 L1442 859.6 L1442 859.6 L1441 859.6 L1441 843.4 L1440 843.4 L1440 843.4 L1439 843.4 L1439 840.1 L1438 840.1 L1438 860.9 L1437 860.9 L1437 860.9 L1436 860.9 L1436 856.8 L1435 856.8 L1435 856.8 L1434 856.8 L1434 845.7 L1433 845.7 L1433 845.7 L1432 845.7 L1432 866.7 L1431 866.7 L1431 841.6 L1430 841.6 L1430 866.7 L1429 866.7 L1429 855.5 L1428 855.5 L1428 855.5 L1427 855.5 L1427 855.9 L1426 855.9 L1426 858.8 L1425 858.8 L1425 858.8 L1424 858.8 L1424 849.4 L1423 849.4 L1423 852.1 L1422 852.1 L1422 848.4 L1421 848.4 L1421 848.4 L1420 848.4 L1420 848.4 L1419 848.4 L1419 843.8 L1418 843.8 L1418 855.8 L1417 855.8 L1417 855.8 L1416 855.8 L1416 839.9 L1415 839.9 L1415 839.9 L1414 839.9 L1414 865.4 L1413 865.4 L1413 865.4 L1412 865.4 L1412 840.3 L1411 840.3 L1411 840.3 L1410 840.3 L1410 840.3 L1409 840.3 L1409 864.7 L1408 864.7 L1408 864.7 L1407 864.7 L1407 866.7 L1406 866.7 L1406 839.6 L1405 839.6 L1405 841.4 L1404 841.4 L1404 839.6 L1403 839.6 L1403 846.2 L1402 846.2 L1402 844.0 L1401 844.0 L1401 844.0 L1400 844.0 L1400 844.0 L1399 844.0 L1399 847.1 L1398 847.1 L1398 821.3 L1397 821.3 L1397 821.3 L1396 821.3 L1396 821.3 L1395 821.3 L1395 821.5 L1394 821.5 L1394 821.8 L1393 821.8 L1393 822.0 L1392 822.0 L1392 822.1 L1391 822.1 L1391 822.2 L1390 822.2 L1390 822.1 L1389 822.1 L1389 822.0 L1388 822.0 L1388 821.8 L1387 821.8 L1387 821.5 L1386 821.5 L1386 821.3 L1385 821.3 L1385 821.3 L1384 821.3 L1384 821.3 L1383 821.3 L1383 821.3 L1382 821.3 L1382 821.3 L1381 821.3 L1381 821.3 L1380 821.3 L1380 821.3 L1379 821.3 L1379 821.3 L1378 821.3 L1378 821.3 L1377 821.3 L1377 821.3 L1376 821.3 L1376 821.3 L1375 821.3 L1375 821.3 L1374 821.3 L1374 821.3 L1373 821.3 L1373 821.3 L1372 821.3 L1372 821.3 L1371 821.3 L1371 821.3 L1370 821.3 L1370 821.3 L1369 821.3 L1369 821.3 L1368 821.3 L1368 821.3 L1367 821.3 L1367 821.3 L1366 821.3 L1366 821.3 L1365 821.3 L1365 821.3 L1364 821.3 L1364 821.3 L1363 821.3 L1363 821.3 L1362 821.3 L1362 821.3 L1361 821.3 L1361 821.3 L1360 821.3 L1360 821.3 L1359 821.3 L1359 821.3 L1358 821.3 L1358 821.3 L1357 821.3 L1357 821.3 L1356 821.3 L1356 821.3 L1355 821.3 L1355 821.3 L1354 821.3 L1354 821.3 L1353 821.3 L1353 821.3 L1352 821.3 L1352 821.3 L1351 821.3 L1351 821.3 L1350 821.3 L1350 821.3 L1349 821.3 L1349 821.3 L1348 821.3 L1348 821.3 L1347 821.3 L1347 821.3 L1346 821.3 L1346 821.3 L1345 821.3 L1345 821.3 L1344 821.3 L1344 821.7 L1343 821.7 L1343 821.7 L1342 821.7 L1342 821.3 L1341 821.3 L1341 821.3 L1340 821.3 L1340 821.3 L1339 821.3 L1339 821.3 L1338 821.3 L1338 821.3 L1337 821.3 L1337 829.7 L1336 829.7 L1336 832.7 L1335 832.7 L1335 833.9 L1334 833.9 L1334 835.6 L1333 835.6 L1333 837.0 L1332 837.0 L1332 837.0 L1331 837.0 L1331 837.9 L1330 837.9 L1330 840.7 L1329 840.7 L1329 839.9 L1328 839.9 L1328 843.1 L1327 843.1 L1327 843.6 L1326 843.6 L1326 846.4 L1325 846.4 L1325 846.6 L1324 846.6 L1324 844.1 L1323 844.1 L1323 844.1 L1322 844.1 L1322 835.5 L1321 835.5 L1321 835.5 L1320 835.5 L1320 835.6 L1319 835.6 L1319 835.6 L1318 835.6 L1318 847.2 L1317 847.2 L1317 842.7 L1316 842.7 L1316 845.0 L1315 845.0 L1315 835.5 L1314 835.5 L1314 835.5 L1313 835.5 L1313 856.3 L1312 856.3 L1312 856.3 L1311 856.3 L1311 856.7 L1310 856.7 L1310 856.7 L1309 856.7 L1309 856.7 L1308 856.7 L1308 837.1 L1307 837.1 L1307 854.3 L1306 854.3 L1306 843.6 L1305 843.6 L1305 843.6 L1304 843.6 L1304 837.6 L1303 837.6 L1303 837.6 L1302 837.6 L1302 850.8 L1301 850.8 L1301 852.7 L1300 852.7 L1300 844.8 L1299 844.8 L1299 844.8 L1298 844.8 L1298 844.8 L1297 844.8 L1297 838.8 L1296 838.8 L1296 838.8 L1295 838.8 L1295 856.7 L1294 856.7 L1294 856.7 L1293 856.7 L1293 835.5 L1292 835.5 L1292 842.6 L1291 842.6 L1291 842.6 L1290 842.6 L1290 849.2 L1289 849.2 L1289 849.2 L1288 849.2 L1288 845.6 L1287 845.6 L1287 845.6 L1286 845.6 L1286 846.1 L1285 846.1 L1285 840.5 L1284 840.5 L1284 836.5 L1283 836.5 L1283 843.2 L1282 843.2 L1282 843.2 L1281 843.2 L1281 843.2 L1280 843.2 L1280 841.4 L1279 841.4 L1279 841.4 L1278 841.4 L1278 833.6 L1277 833.6 L1277 829.8 L1276 829.8 L1276 821.3 L1275 821.3 L1275 821.3 L1274 821.3 L1274 821.3 L1273 821.3 L1273 834.6 L1272 834.6 L1272 834.5 L1271 834.5 L1271 849.0 L1270 849.0 L1270 849.0 L1269 849.0 L1269 834.9 L1268 834.9 L1268 849.2 L1267 849.2 L1267 821.3 L1266 821.3 Z" fill="#738628"/>
<text x="1263.5" y="724.8" font-size="34.3" fill="#fff" font-weight="normal" text-anchor="start" stroke="#fff" stroke-width="0.9" textLength="170" lengthAdjust="spacingAndGlyphs">Vocal Lead</text>
<rect x="2624.1" y="689.5" width="5.7" height="123" fill="#f4f6e6"/><rect x="2624.1" y="812" width="5.7" height="139.5" fill="#dde2bf"/><rect x="2629.8" y="812" width="6.4" height="139.5" fill="#d4d9b0" opacity="0.9"/><rect x="2633.8" y="890" width="1.6" height="61" fill="#f4f6e6" opacity="0.9"/>
<rect x="2044" y="963" width="541" height="90" fill="#4f6e33"/>
<rect x="2046" y="965" width="537" height="90" fill="url(#gVH)" stroke="#d6eab8" stroke-width="2"/>
<text x="2056" y="1001.5" font-size="34.3" fill="#fff" font-weight="normal" text-anchor="start" stroke="#fff" stroke-width="0.9" textLength="170" lengthAdjust="spacingAndGlyphs">Vocal High</text>
<rect x="2578.3" y="966.5" width="4.8" height="82" fill="#f4f6e6"/>
<rect x="1037.1" y="342" width="1.8" height="705" fill="#fff" opacity="0.5"/>
<rect x="1107.7" y="342" width="1.8" height="705" fill="#fff" opacity="0.5"/>
<rect x="1178.2" y="342" width="1.8" height="705" fill="#fff" opacity="0.5"/>
<rect x="1248.8" y="342" width="1.8" height="705" fill="#fff" opacity="0.5"/>
<rect x="1319.3" y="342" width="1.8" height="705" fill="#fff" opacity="0.5"/>
<rect x="1389.9" y="342" width="1.8" height="705" fill="#fff" opacity="0.5"/>
<rect x="1460.4" y="342" width="1.8" height="705" fill="#fff" opacity="0.5"/>
<rect x="1531.0" y="342" width="1.8" height="705" fill="#fff" opacity="0.5"/>
<rect x="1601.5" y="342" width="1.8" height="705" fill="#fff" opacity="0.5"/>
<rect x="1672.1" y="342" width="1.8" height="705" fill="#fff" opacity="0.5"/>
<rect x="1742.6" y="342" width="1.8" height="705" fill="#fff" opacity="0.5"/>
<rect x="1813.2" y="342" width="1.8" height="705" fill="#fff" opacity="0.5"/>
<rect x="1883.8" y="342" width="1.8" height="705" fill="#fff" opacity="0.5"/>
<rect x="1954.3" y="342" width="1.8" height="705" fill="#fff" opacity="0.5"/>
<rect x="2024.8" y="342" width="1.8" height="705" fill="#fff" opacity="0.5"/>
<rect x="2095.4" y="342" width="1.8" height="705" fill="#fff" opacity="0.5"/>
<rect x="2165.9" y="342" width="1.8" height="705" fill="#fff" opacity="0.5"/>
<rect x="2236.5" y="342" width="1.8" height="705" fill="#fff" opacity="0.5"/>
<rect x="2307.0" y="342" width="1.8" height="705" fill="#fff" opacity="0.5"/>
<rect x="2377.6" y="342" width="1.8" height="705" fill="#fff" opacity="0.5"/>
<rect x="2448.2" y="342" width="1.8" height="705" fill="#fff" opacity="0.5"/>
<rect x="2518.7" y="342" width="1.8" height="705" fill="#fff" opacity="0.5"/>
<rect x="2589.2" y="342" width="1.8" height="705" fill="#fff" opacity="0.5"/>
<rect x="2659.8" y="342" width="1.8" height="705" fill="#fff" opacity="0.5"/>
<rect x="968" y="240" width="1764" height="96" fill="url(#gRul)"/>
<rect x="1037.0" y="240" width="2" height="96" fill="#a3b8c7" opacity="0.85"/>
<rect x="1107.6" y="240" width="2" height="96" fill="#a3b8c7" opacity="0.85"/>
<rect x="1178.2" y="240" width="2" height="96" fill="#a3b8c7" opacity="0.85"/>
<rect x="1248.7" y="240" width="2" height="96" fill="#a3b8c7" opacity="0.85"/>
<rect x="1319.2" y="240" width="2" height="96" fill="#a3b8c7" opacity="0.85"/>
<rect x="1389.8" y="240" width="2" height="96" fill="#a3b8c7" opacity="0.85"/>
<rect x="1460.3" y="240" width="2" height="96" fill="#a3b8c7" opacity="0.85"/>
<rect x="1530.9" y="240" width="2" height="96" fill="#a3b8c7" opacity="0.85"/>
<rect x="1601.4" y="240" width="2" height="96" fill="#a3b8c7" opacity="0.85"/>
<rect x="1672.0" y="240" width="2" height="96" fill="#a3b8c7" opacity="0.85"/>
<rect x="1742.5" y="240" width="2" height="96" fill="#a3b8c7" opacity="0.85"/>
<rect x="1813.1" y="240" width="2" height="96" fill="#a3b8c7" opacity="0.85"/>
<rect x="1883.7" y="240" width="2" height="96" fill="#a3b8c7" opacity="0.85"/>
<rect x="1954.2" y="240" width="2" height="96" fill="#a3b8c7" opacity="0.85"/>
<rect x="2024.8" y="240" width="2" height="96" fill="#a3b8c7" opacity="0.85"/>
<rect x="2095.3" y="240" width="2" height="96" fill="#a3b8c7" opacity="0.85"/>
<rect x="2165.8" y="240" width="2" height="96" fill="#a3b8c7" opacity="0.85"/>
<rect x="2236.4" y="240" width="2" height="96" fill="#a3b8c7" opacity="0.85"/>
<rect x="2306.9" y="240" width="2" height="96" fill="#a3b8c7" opacity="0.85"/>
<rect x="2377.5" y="240" width="2" height="96" fill="#a3b8c7" opacity="0.85"/>
<rect x="2448.1" y="240" width="2" height="96" fill="#a3b8c7" opacity="0.85"/>
<rect x="2518.6" y="240" width="2" height="96" fill="#a3b8c7" opacity="0.85"/>
<rect x="2589.1" y="240" width="2" height="96" fill="#a3b8c7" opacity="0.85"/>
<rect x="2659.7" y="240" width="2" height="96" fill="#a3b8c7" opacity="0.85"/>
<text x="975.3" y="276.8" font-size="31.6" fill="#dbe1e6" font-weight="normal" text-anchor="start" stroke="#dbe1e6" stroke-width="1.0">1</text>
<text x="1045.8" y="276.8" font-size="31.6" fill="#dbe1e6" font-weight="normal" text-anchor="start" stroke="#dbe1e6" stroke-width="1.0">3</text>
<text x="1116.4" y="276.8" font-size="31.6" fill="#dbe1e6" font-weight="normal" text-anchor="start" stroke="#dbe1e6" stroke-width="1.0">5</text>
<text x="1187.0" y="276.8" font-size="31.6" fill="#dbe1e6" font-weight="normal" text-anchor="start" stroke="#dbe1e6" stroke-width="1.0">7</text>
<text x="1257.5" y="276.8" font-size="31.6" fill="#dbe1e6" font-weight="normal" text-anchor="start" stroke="#dbe1e6" stroke-width="1.0">9</text>
<text x="1328.0" y="276.8" font-size="31.6" fill="#dbe1e6" font-weight="normal" text-anchor="start" stroke="#dbe1e6" stroke-width="1.0">11</text>
<text x="1398.6" y="276.8" font-size="31.6" fill="#dbe1e6" font-weight="normal" text-anchor="start" stroke="#dbe1e6" stroke-width="1.0">13</text>
<text x="1469.1" y="276.8" font-size="31.6" fill="#dbe1e6" font-weight="normal" text-anchor="start" stroke="#dbe1e6" stroke-width="1.0">15</text>
<text x="1539.7" y="276.8" font-size="31.6" fill="#dbe1e6" font-weight="normal" text-anchor="start" stroke="#dbe1e6" stroke-width="1.0">17</text>
<text x="1610.2" y="276.8" font-size="31.6" fill="#dbe1e6" font-weight="normal" text-anchor="start" stroke="#dbe1e6" stroke-width="1.0">19</text>
<text x="1680.8" y="276.8" font-size="31.6" fill="#dbe1e6" font-weight="normal" text-anchor="start" stroke="#dbe1e6" stroke-width="1.0">21</text>
<text x="1751.3" y="276.8" font-size="31.6" fill="#dbe1e6" font-weight="normal" text-anchor="start" stroke="#dbe1e6" stroke-width="1.0">23</text>
<text x="1821.9" y="276.8" font-size="31.6" fill="#dbe1e6" font-weight="normal" text-anchor="start" stroke="#dbe1e6" stroke-width="1.0">25</text>
<text x="1892.5" y="276.8" font-size="31.6" fill="#dbe1e6" font-weight="normal" text-anchor="start" stroke="#dbe1e6" stroke-width="1.0">27</text>
<text x="1963.0" y="276.8" font-size="31.6" fill="#dbe1e6" font-weight="normal" text-anchor="start" stroke="#dbe1e6" stroke-width="1.0">29</text>
<text x="2033.5" y="276.8" font-size="31.6" fill="#dbe1e6" font-weight="normal" text-anchor="start" stroke="#dbe1e6" stroke-width="1.0">31</text>
<text x="2104.1" y="276.8" font-size="31.6" fill="#dbe1e6" font-weight="normal" text-anchor="start" stroke="#dbe1e6" stroke-width="1.0">33</text>
<text x="2174.7" y="276.8" font-size="31.6" fill="#dbe1e6" font-weight="normal" text-anchor="start" stroke="#dbe1e6" stroke-width="1.0">35</text>
<text x="2245.2" y="276.8" font-size="31.6" fill="#dbe1e6" font-weight="normal" text-anchor="start" stroke="#dbe1e6" stroke-width="1.0">37</text>
<text x="2315.8" y="276.8" font-size="31.6" fill="#dbe1e6" font-weight="normal" text-anchor="start" stroke="#dbe1e6" stroke-width="1.0">39</text>
<text x="2386.3" y="276.8" font-size="31.6" fill="#dbe1e6" font-weight="normal" text-anchor="start" stroke="#dbe1e6" stroke-width="1.0">41</text>
<text x="2456.9" y="276.8" font-size="31.6" fill="#dbe1e6" font-weight="normal" text-anchor="start" stroke="#dbe1e6" stroke-width="1.0">43</text>
<text x="2527.4" y="276.8" font-size="31.6" fill="#dbe1e6" font-weight="normal" text-anchor="start" stroke="#dbe1e6" stroke-width="1.0">45</text>
<text x="2597.9" y="276.8" font-size="31.6" fill="#dbe1e6" font-weight="normal" text-anchor="start" stroke="#dbe1e6" stroke-width="1.0">47</text>
<text x="2668.5" y="276.8" font-size="31.6" fill="#dbe1e6" font-weight="normal" text-anchor="start" stroke="#dbe1e6" stroke-width="1.0">49</text>
<rect x="968" y="335" width="1764" height="7" fill="#fff"/>
<rect x="968" y="342" width="1764" height="6" fill="url(#gRSh)"/>
<path d="M968 301 H1012 L1056 336 H968 Z" fill="#fff"/>
<text x="988" y="335" font-size="36" fill="#000" font-weight="bold" text-anchor="start" >L</text>
<path d="M2732 301 H2688 L2645 336 H2732 Z" fill="#fff"/>
<text x="2693" y="335" font-size="36" fill="#000" font-weight="bold" text-anchor="start" >R</text>
<rect x="1253.5" y="240" width="10.5" height="807" fill="#000"/><rect x="1264" y="240" width="2.4" height="807" fill="#fff" opacity="0.92"/><rect x="1251.4" y="240" width="2.3" height="807" fill="#fff" opacity="0.7"/>
</svg>
<svg id="plugbar" style="left:0;top:1047px" width="2732" height="115" viewBox="0 1047 2732 115">
<defs>
<linearGradient id="gPB" x1="0" y1="0" x2="0" y2="1"><stop offset="0" stop-color="#1d2228"/><stop offset="0.05" stop-color="#282e35"/><stop offset="0.3" stop-color="#2c3239"/><stop offset="0.5" stop-color="#2c3239"/><stop offset="0.52" stop-color="#2a3037"/><stop offset="1" stop-color="#2a3037"/></linearGradient>
<linearGradient id="gPT" x1="0" y1="0" x2="0" y2="1"><stop offset="0" stop-color="#2e3740"/><stop offset="0.5" stop-color="#2c353e"/><stop offset="0.52" stop-color="#222a32"/><stop offset="1" stop-color="#212931"/></linearGradient>
</defs>
<rect x="0" y="1047" width="2732" height="107" fill="url(#gPB)"/>
<rect x="0" y="1152" width="2732" height="3.5" fill="#12161a"/>
<rect x="0" y="1155.5" width="2732" height="7" fill="#27363f"/>
<rect x="3" y="1049" width="133" height="102" fill="#c4c6c8"/><rect x="3" y="1049" width="133" height="2" fill="#dfe0e1"/>
<rect x="58.6" y="1088.2" width="26.6" height="27.5" fill="#abadaf" stroke="#2f3b45" stroke-width="4.2"/><path d="M39.8 1102.2 H104" stroke="#2f3b45" stroke-width="3.4"/>
<rect x="141" y="1050" width="197" height="101" fill="url(#gPT)"/><rect x="338" y="1050" width="1.5" height="101" fill="#1d2329"/><rect x="139" y="1050" width="2" height="101" fill="#1d2329"/>
<path d="M238.8 1074.0 L244.0 1087.4 L258.4 1088.2 L247.3 1097.4 L250.9 1111.3 L238.8 1103.5 L226.7 1111.3 L230.3 1097.4 L219.2 1088.2 L233.6 1087.4 Z" fill="none" stroke="#7896b0" stroke-width="3" stroke-linejoin="miter"/>
<text x="238.8" y="1146" font-size="24.4" fill="#88a7c0" font-weight="normal" text-anchor="middle" textLength="112" lengthAdjust="spacingAndGlyphs">PRESETS</text>
<rect x="1872" y="1059" width="106" height="86" rx="4" fill="#2b3641" stroke="#1b2128" stroke-width="3"/>
<rect x="1896" y="1084" width="58" height="38" rx="5" fill="#8d98a4"/><g fill="none" stroke="#8d98a4" stroke-width="5"><path d="M1883 1086 V1070 H1902"/><path d="M1967 1086 V1070 H1948"/><path d="M1883 1120 V1136 H1902"/><path d="M1967 1120 V1136 H1948"/></g>
<rect x="2019.5" y="1059" width="106" height="86" rx="4" fill="#3c8558" stroke="#1d3a29" stroke-width="3"/>
<path d="M2055 1121 V1084 H2082 Q2092 1084 2092 1095 Q2092 1105 2083 1106.5 L2094 1121 H2082 L2072.5 1107.5 H2065 V1121 Z M2065 1092.5 V1099.5 H2079 Q2082.5 1099.5 2082.5 1096 Q2082.5 1092.5 2079 1092.5 Z" fill="#1f4a30" fill-rule="evenodd"/>
<rect x="2165.5" y="1059" width="106" height="86" rx="4" fill="#2b3641" stroke="#1b2128" stroke-width="3"/>
<path d="M2201 1084 V1116 Q2201 1121 2206 1121 H2236 V1084 H2227 V1112.5 H2223 V1084 H2214 V1112.5 H2210 V1084 Z" fill="#8d98a4"/>
<rect x="2312" y="1059" width="106" height="86" rx="4" fill="#2b3641" stroke="#1b2128" stroke-width="3"/>
<g fill="none" stroke="#8d98a4" stroke-width="3.6"><path d="M2346 1119 L2365 1081 L2384 1108"/><rect x="2359" y="1075" width="12" height="12" fill="#2b3641"/><rect x="2340" y="1113" width="12" height="12" fill="#2b3641"/><rect x="2378" y="1102" width="12" height="12" fill="#2b3641"/></g>
<rect x="2459" y="1060" width="106" height="84" fill="#6cc5f5" stroke="#1b2128" stroke-width="2"/>
<g fill="none" stroke="#2a6c98" stroke-width="7" stroke-linecap="round"><path d="M2500.5 1088.5 A19.5 19.5 0 1 0 2523.5 1088.5"/><path d="M2512 1080 V1103"/></g>
<path d="M2636 1049 H2732 V1150 Z" fill="#cfd1d3"/><path d="M2636 1049 H2732" stroke="#e6e7e8" stroke-width="2"/>
<path d="M2691 1071.5 L2712 1092.5 M2712 1071.5 L2691 1092.5" stroke="#1f252c" stroke-width="7.5"/>
</svg>
<svg id="plugin" style="left:0;top:1162px" width="2732" height="886" viewBox="0 1162 2732 886">
<defs>
<linearGradient id="gBgL" x1="0" y1="0" x2="1" y2="0"><stop offset="0" stop-color="#2f3941"/><stop offset="1" stop-color="#232a31"/></linearGradient>
<linearGradient id="gBgR" x1="0" y1="0" x2="1" y2="0"><stop offset="0" stop-color="#222930"/><stop offset="1" stop-color="#2f3841"/></linearGradient>
<linearGradient id="gBgT" x1="0" y1="0" x2="0" y2="1"><stop offset="0" stop-color="#2c373f"/><stop offset="1" stop-color="#222b31"/></linearGradient>
<radialGradient id="gSheen" cx="0.62" cy="0.12" r="0.55"><stop offset="0" stop-color="#fff" stop-opacity="0.055"/><stop offset="1" stop-color="#fff" stop-opacity="0"/></radialGradient>
<filter id="fNoise" x="0" y="0" width="100%" height="100%"><feTurbulence type="fractalNoise" baseFrequency="0.004 0.35" numOctaves="2" seed="3"/><feColorMatrix type="matrix" values="0 0 0 0 1  0 0 0 0 1  0 0 0 0 1  0.036 0 0 0 -0.012"/></filter>
<radialGradient id="gFace" cx="0.5" cy="0.5" r="0.75" gradientTransform="translate(0 0.05) scale(1 0.9)"><stop offset="0" stop-color="#e9d8a6"/><stop offset="0.7" stop-color="#e7d6a4"/><stop offset="0.92" stop-color="#d9c999"/><stop offset="1" stop-color="#b9ab80"/></radialGradient>
<linearGradient id="gFaceL" x1="0" y1="0" x2="1" y2="0"><stop offset="0" stop-color="#5a5238" stop-opacity="0.75"/><stop offset="0.06" stop-color="#8a7f58" stop-opacity="0.3"/><stop offset="0.14" stop-color="#8a7f58" stop-opacity="0"/><stop offset="0.9" stop-color="#8a7f58" stop-opacity="0"/><stop offset="1" stop-color="#6a6040" stop-opacity="0.45"/></linearGradient>
<linearGradient id="gFaceT" x1="0" y1="0" x2="0" y2="1"><stop offset="0" stop-color="#5a5238" stop-opacity="0.6"/><stop offset="0.12" stop-color="#8a7f58" stop-opacity="0"/><stop offset="0.9" stop-color="#8a7f58" stop-opacity="0"/><stop offset="1" stop-color="#6a6040" stop-opacity="0.35"/></linearGradient>
<radialGradient id="gScrew" cx="0.3" cy="0.25" r="0.9"><stop offset="0" stop-color="#adadad"/><stop offset="0.42" stop-color="#707070"/><stop offset="0.78" stop-color="#262626"/><stop offset="1" stop-color="#0c0c0c"/></radialGradient>
<linearGradient id="gScrewRing" x1="0.15" y1="0.15" x2="0.85" y2="0.85"><stop offset="0" stop-color="#000"/><stop offset="0.6" stop-color="#050505"/><stop offset="0.78" stop-color="#4a4a4a"/><stop offset="1" stop-color="#7a7a7a"/></linearGradient>
<radialGradient id="gLed" cx="0.5" cy="0.34" r="0.5"><stop offset="0" stop-color="#808080"/><stop offset="0.3" stop-color="#5a5a5a"/><stop offset="0.55" stop-color="#101010"/><stop offset="0.75" stop-color="#000"/><stop offset="1" stop-color="#000"/></radialGradient>
<linearGradient id="gTog" x1="0" y1="0" x2="1" y2="0"><stop offset="0" stop-color="#000"/><stop offset="0.45" stop-color="#050505"/><stop offset="0.8" stop-color="#2c2c2c"/><stop offset="0.93" stop-color="#8a8a8a"/><stop offset="1" stop-color="#444"/></linearGradient>
<linearGradient id="gTogV" x1="0" y1="0" x2="0" y2="1"><stop offset="0" stop-color="#000" stop-opacity="0.85"/><stop offset="0.25" stop-color="#000" stop-opacity="0"/><stop offset="0.85" stop-color="#fff" stop-opacity="0"/><stop offset="1" stop-color="#fff" stop-opacity="0.35"/></linearGradient>
<linearGradient id="gRing" x1="0.2" y1="0" x2="0.8" y2="1"><stop offset="0" stop-color="#fff"/><stop offset="0.6" stop-color="#f4f4f4"/><stop offset="1" stop-color="#8c8c8c"/></linearGradient>
<linearGradient id="gDD" x1="0" y1="0" x2="0" y2="1"><stop offset="0" stop-color="#4f4f51"/><stop offset="0.5" stop-color="#464648"/><stop offset="0.52" stop-color="#404042"/><stop offset="1" stop-color="#3b3b3d"/></linearGradient>
<linearGradient id="gThO" x1="0" y1="0" x2="1" y2="0"><stop offset="0" stop-color="#e6e6e6"/><stop offset="0.12" stop-color="#fff"/><stop offset="0.7" stop-color="#f2f2f2"/><stop offset="0.9" stop-color="#a8a8a8"/><stop offset="1" stop-color="#7c7c7c"/></linearGradient>
<linearGradient id="gThI" x1="0" y1="0" x2="0" y2="1"><stop offset="0" stop-color="#4a4a4a"/><stop offset="0.07" stop-color="#8a8a8a"/><stop offset="0.2" stop-color="#c6c6c6"/><stop offset="0.42" stop-color="#ececec"/><stop offset="1" stop-color="#ffffff"/></linearGradient>
<linearGradient id="gThIH" x1="0" y1="0" x2="1" y2="0"><stop offset="0" stop-color="#000" stop-opacity="0.35"/><stop offset="0.2" stop-color="#000" stop-opacity="0"/><stop offset="0.8" stop-color="#000" stop-opacity="0"/><stop offset="1" stop-color="#000" stop-opacity="0.25"/></linearGradient>
<filter id="fBlur1"><feGaussianBlur stdDeviation="0.9"/></filter><filter id="fBlur3"><feGaussianBlur stdDeviation="3"/></filter>
<filter id="fBlur2"><feGaussianBlur stdDeviation="1.6"/></filter>
<filter id="fBlur8"><feGaussianBlur stdDeviation="9"/></filter>
<linearGradient id="gKnob" x1="0.15" y1="0.1" x2="0.8" y2="0.9"><stop offset="0" stop-color="#6e6e6e"/><stop offset="0.5" stop-color="#4e4e4e"/><stop offset="1" stop-color="#3a3a3a"/></linearGradient>
<linearGradient id="gPwrT" x1="0" y1="0" x2="0" y2="1"><stop offset="0" stop-color="#a3281e"/><stop offset="0.12" stop-color="#d92a20"/><stop offset="0.6" stop-color="#ee3226"/><stop offset="1" stop-color="#e02a20"/></linearGradient>
<linearGradient id="gPwrB" x1="0" y1="0" x2="0" y2="1"><stop offset="0" stop-color="#8e2a16"/><stop offset="0.7" stop-color="#842612"/><stop offset="1" stop-color="#a0301c"/></linearGradient>

<g id="thumb"><rect x="3" y="4" width="47" height="78.5" rx="9" fill="#000" opacity="0.55" filter="url(#fBlur2)"/><rect x="0" y="0" width="47" height="78.5" rx="8.5" fill="url(#gThO)"/><rect x="2" y="74.5" width="43" height="4" rx="3" fill="#bdbdbd" opacity="0.55"/><path d="M8 6.5 Q6 6.5 6 9 Q9.5 39 7.5 69 Q7.5 72 10 72 H38 Q40 72 40 69.5 Q37 39 40 9 Q40 6.5 38 6.5 Z" fill="url(#gThI)"/><path d="M8 6.5 Q6 6.5 6 9 Q9.5 39 7.5 69 Q7.5 72 10 72 H38 Q40 72 40 69.5 Q37 39 40 9 Q40 6.5 38 6.5 Z" fill="url(#gThIH)"/><rect x="10.5" y="13.85" width="27" height="1.8" fill="#6f6f6f" opacity="0.95"/><rect x="10.5" y="19.85" width="27" height="1.8" fill="#6f6f6f" opacity="0.95"/><rect x="10.5" y="25.85" width="27" height="1.8" fill="#858585" opacity="0.95"/><rect x="10.5" y="31.85" width="27" height="1.8" fill="#858585" opacity="0.95"/><rect x="10.5" y="44.35" width="27" height="1.8" fill="#858585" opacity="0.8"/><rect x="10.5" y="50.35" width="27" height="1.8" fill="#858585" opacity="0.8"/><rect x="10.5" y="56.35" width="27" height="1.8" fill="#858585" opacity="0.8"/><rect x="10.5" y="62.35" width="27" height="1.8" fill="#858585" opacity="0.8"/><rect x="11.5" y="38" width="25" height="2.6" rx="1" fill="#050505"/></g>
<g id="toggle"><rect x="0" y="0" width="54.5" height="106.5" rx="27.2" fill="url(#gTog)"/><rect x="0" y="0" width="54.5" height="106.5" rx="27.2" fill="url(#gTogV)"/><circle cx="25" cy="78" r="21" fill="url(#gRing)"/><circle cx="25.5" cy="78.5" r="13.6" fill="#6b6b6b"/><circle cx="25.5" cy="78.5" r="13.6" fill="none" stroke="#3a3a3a" stroke-width="1.2" opacity="0.7"/></g>
<g id="screw"><circle cx="0.7" cy="0.5" r="31.5" fill="url(#gScrewRing)"/><circle cx="0" cy="-0.5" r="23.5" fill="url(#gScrew)"/><path d="M-6.8 -7.2 L7.2 6 M7 -7.5 L-6.8 6.2" stroke="#000" stroke-width="9.5" stroke-linecap="round"/></g>
</defs>
<rect x="0" y="1162" width="2732" height="886" fill="#232c33"/>
<rect x="0" y="1162" width="40" height="886" fill="url(#gBgL)"/><rect x="2695" y="1162" width="37" height="886" fill="url(#gBgR)"/>
<rect x="14" y="1158" width="2704" height="892" rx="26" fill="#0c1013" opacity="0.55" filter="url(#fBlur8)"/>
<rect x="26.5" y="1162" width="2679.5" height="880" rx="18" fill="#212121"/>
<rect x="26.5" y="1162" width="2679.5" height="880" rx="18" fill="url(#gSheen)"/>
<rect x="26.5" y="1162" width="2679.5" height="880" rx="18" filter="url(#fNoise)"/>
<rect x="116" y="1162" width="2.4" height="880" fill="#000"/><rect x="118.4" y="1162" width="2.4" height="880" fill="#484848"/>
<rect x="2613.6" y="1162" width="2.4" height="880" fill="#000"/><rect x="2616" y="1162" width="2.6" height="880" fill="#555"/>
<use href="#screw" x="71.5" y="1207"/>
<use href="#screw" x="2661" y="1208"/>
<use href="#screw" x="71.5" y="1998"/>
<use href="#screw" x="2661" y="1998"/>
<text transform="translate(85.5 1839) rotate(-90)" font-size="40" font-weight="bold" fill="#9b9b9b" textLength="476" lengthAdjust="spacingAndGlyphs">10 Band Stereo Graphic EQ</text>
<text transform="translate(2646.5 1493) rotate(90)" font-size="40" font-weight="bold" fill="#9b9b9b" textLength="217" lengthAdjust="spacingAndGlyphs">4Pockets FX</text>
<rect x="186.7" y="1207" width="493.5" height="231" rx="7" fill="#424242"/><rect x="186.7" y="1207" width="493.5" height="231" rx="7" fill="none" stroke="#2c2c2c" stroke-width="1.5"/><rect x="194.7" y="1215" width="478" height="215" rx="2" fill="url(#gFace)"/><rect x="194.7" y="1215" width="478" height="215" rx="2" fill="url(#gFaceL)"/><rect x="194.7" y="1215" width="478" height="215" rx="2" fill="url(#gFaceT)"/><path d="M272.5 1339.5 A240 240 0 0 1 516.1 1291.5" fill="none" stroke="#1b1b1b" stroke-width="2.6"/><path d="M514.2 1287.8 A242.8 242.8 0 0 1 595.8 1336.0" fill="none" stroke="#e8392b" stroke-width="8.5"/><path d="M286.2 1327.9 L274.5 1312.9" stroke="#1b1b1b" stroke-width="4.2"/><path d="M332.6 1299.5 L324.5 1282.3" stroke="#1b1b1b" stroke-width="4.2"/><path d="M372.7 1285.0 L367.8 1266.6" stroke="#1b1b1b" stroke-width="4.2"/><path d="M393.1 1280.5 L390.3 1263.8" stroke="#1b1b1b" stroke-width="1.8"/><path d="M413.1 1277.9 L411.4 1259.0" stroke="#1b1b1b" stroke-width="4.2"/><path d="M434.0 1277.0 L434.0 1260.0" stroke="#1b1b1b" stroke-width="1.8"/><path d="M454.5 1277.9 L456.1 1258.9" stroke="#1b1b1b" stroke-width="4.2"/><path d="M476.9 1280.9 L480.0 1264.1" stroke="#1b1b1b" stroke-width="1.8"/><path d="M496.9 1285.4 L501.4 1269.0" stroke="#1b1b1b" stroke-width="1.8"/><path d="M517.5 1287.7 L523.3 1271.7" stroke="#e8392b" stroke-width="4.5"/><path d="M540.6 1297.5 L545.4 1287.6" stroke="#e8392b" stroke-width="2"/><path d="M561.5 1309.0 L567.2 1299.6" stroke="#e8392b" stroke-width="2"/><path d="M580.8 1322.1 L591.1 1308.6" stroke="#e8392b" stroke-width="4.5"/><text transform="translate(267.4 1309.5) rotate(-50 0 -6.5)" font-size="19" fill="#1b1b1b" text-anchor="middle">20</text><text transform="translate(318.0 1276.9) rotate(-30 0 -6.5)" font-size="19" fill="#1b1b1b" text-anchor="middle">10</text><text transform="translate(363.3 1260.5) rotate(-12 0 -6.5)" font-size="19" fill="#1b1b1b" text-anchor="middle">7</text><text transform="translate(409.8 1252.5) rotate(-4 0 -6.5)" font-size="19" fill="#1b1b1b" text-anchor="middle">5</text><text transform="translate(457.3 1252.5) rotate(4 0 -6.5)" font-size="19" fill="#1b1b1b" text-anchor="middle">3</text><text transform="translate(525.3 1269.3) rotate(14 0 -6.5)" font-size="19" fill="#e8392b" text-anchor="middle" font-style="italic">0</text><text transform="translate(588.0 1301.5) rotate(62 0 -6.5)" font-size="19" fill="#e8392b" text-anchor="middle" font-style="italic">3</text><rect x="230" y="1279" width="15" height="2.6" fill="#1b1b1b"/><path d="M619 1281 h18 M628 1272 v18" stroke="#e8392b" stroke-width="2.6"/><text x="434.5" y="1354" font-size="30" fill="#1b1b1b" text-anchor="middle" textLength="38" lengthAdjust="spacingAndGlyphs" stroke="#1b1b1b" stroke-width="0.9">VU</text><clipPath id="cFace0"><rect x="194.7" y="1215" width="478" height="215"/></clipPath><g clip-path="url(#cFace0)"><path d="M453.4 1415.3 L477.0 1266.2" stroke="#000" stroke-width="4" opacity="0.18" filter="url(#fBlur2)"/><path d="M450.4 1413.3 L474.0 1264.2" stroke="#111" stroke-width="2"/><circle cx="434" cy="1497" r="93" fill="#000" opacity="0.35" filter="url(#fBlur3)"/><circle cx="434" cy="1494" r="88" fill="#000"/></g>
<rect x="804.2" y="1207" width="493.5" height="231" rx="7" fill="#424242"/><rect x="804.2" y="1207" width="493.5" height="231" rx="7" fill="none" stroke="#2c2c2c" stroke-width="1.5"/><rect x="812.2" y="1215" width="478" height="215" rx="2" fill="url(#gFace)"/><rect x="812.2" y="1215" width="478" height="215" rx="2" fill="url(#gFaceL)"/><rect x="812.2" y="1215" width="478" height="215" rx="2" fill="url(#gFaceT)"/><path d="M890.0 1339.5 A240 240 0 0 1 1133.6 1291.5" fill="none" stroke="#1b1b1b" stroke-width="2.6"/><path d="M1131.7 1287.8 A242.8 242.8 0 0 1 1213.3 1336.0" fill="none" stroke="#e8392b" stroke-width="8.5"/><path d="M903.7 1327.9 L892.0 1312.9" stroke="#1b1b1b" stroke-width="4.2"/><path d="M950.1 1299.5 L942.0 1282.3" stroke="#1b1b1b" stroke-width="4.2"/><path d="M990.2 1285.0 L985.3 1266.6" stroke="#1b1b1b" stroke-width="4.2"/><path d="M1010.6 1280.5 L1007.8 1263.8" stroke="#1b1b1b" stroke-width="1.8"/><path d="M1030.6 1277.9 L1028.9 1259.0" stroke="#1b1b1b" stroke-width="4.2"/><path d="M1051.5 1277.0 L1051.5 1260.0" stroke="#1b1b1b" stroke-width="1.8"/><path d="M1072.0 1277.9 L1073.6 1258.9" stroke="#1b1b1b" stroke-width="4.2"/><path d="M1094.4 1280.9 L1097.5 1264.1" stroke="#1b1b1b" stroke-width="1.8"/><path d="M1114.4 1285.4 L1118.9 1269.0" stroke="#1b1b1b" stroke-width="1.8"/><path d="M1135.0 1287.7 L1140.8 1271.7" stroke="#e8392b" stroke-width="4.5"/><path d="M1158.1 1297.5 L1162.9 1287.6" stroke="#e8392b" stroke-width="2"/><path d="M1179.0 1309.0 L1184.7 1299.6" stroke="#e8392b" stroke-width="2"/><path d="M1198.3 1322.1 L1208.6 1308.6" stroke="#e8392b" stroke-width="4.5"/><text transform="translate(884.9 1309.5) rotate(-50 0 -6.5)" font-size="19" fill="#1b1b1b" text-anchor="middle">20</text><text transform="translate(935.5 1276.9) rotate(-30 0 -6.5)" font-size="19" fill="#1b1b1b" text-anchor="middle">10</text><text transform="translate(980.8 1260.5) rotate(-12 0 -6.5)" font-size="19" fill="#1b1b1b" text-anchor="middle">7</text><text transform="translate(1027.3 1252.5) rotate(-4 0 -6.5)" font-size="19" fill="#1b1b1b" text-anchor="middle">5</text><text transform="translate(1074.8 1252.5) rotate(4 0 -6.5)" font-size="19" fill="#1b1b1b" text-anchor="middle">3</text><text transform="translate(1142.8 1269.3) rotate(14 0 -6.5)" font-size="19" fill="#e8392b" text-anchor="middle" font-style="italic">0</text><text transform="translate(1205.5 1301.5) rotate(62 0 -6.5)" font-size="19" fill="#e8392b" text-anchor="middle" font-style="italic">3</text><rect x="847.5" y="1279" width="15" height="2.6" fill="#1b1b1b"/><path d="M1236.5 1281 h18 M1245.5 1272 v18" stroke="#e8392b" stroke-width="2.6"/><text x="1052.0" y="1354" font-size="30" fill="#1b1b1b" text-anchor="middle" textLength="38" lengthAdjust="spacingAndGlyphs" stroke="#1b1b1b" stroke-width="0.9">VU</text><clipPath id="cFace617"><rect x="812.2" y="1215" width="478" height="215"/></clipPath><g clip-path="url(#cFace617)"><path d="M1024.9 1418.3 L982.2 1273.4" stroke="#000" stroke-width="4" opacity="0.18" filter="url(#fBlur2)"/><path d="M1021.9 1416.3 L979.2 1271.4" stroke="#111" stroke-width="2"/><circle cx="1051.5" cy="1497" r="93" fill="#000" opacity="0.35" filter="url(#fBlur3)"/><circle cx="1051.5" cy="1494" r="88" fill="#000"/></g>
<circle cx="737.6" cy="1251.6" r="16.2" fill="#787878" opacity="0.75" filter="url(#fBlur1)"/><circle cx="735.3" cy="1248" r="15.8" fill="url(#gLed)"/>
<text x="735.5" y="1301.4" font-size="31" fill="#f0f0f0" font-weight="normal" text-anchor="middle" >L</text>
<circle cx="737.6" cy="1356.6" r="16.2" fill="#787878" opacity="0.75" filter="url(#fBlur1)"/><circle cx="735.3" cy="1353" r="15.8" fill="url(#gLed)"/>
<text x="735.5" y="1406.4" font-size="31" fill="#f0f0f0" font-weight="normal" text-anchor="middle" >R</text>
<use href="#toggle" x="1472" y="1245.5"/>
<text x="1550" y="1277.5" font-size="31.5" fill="#e6e6e6" font-weight="normal" text-anchor="start" >rms</text>
<text x="1550" y="1340.5" font-size="31.5" fill="#e6e6e6" font-weight="normal" text-anchor="start" >peak</text>
<text x="1438" y="1395.3" font-size="36" fill="#fff" font-weight="bold" text-anchor="start" >Meters</text>
<text x="1719" y="1280" font-size="36" fill="#fff" font-weight="bold" text-anchor="start" >Presets</text>
<rect x="1708.5" y="1297.5" width="629" height="92" rx="11" fill="#181818"/>
<rect x="1710" y="1296.5" width="626" height="90" rx="10" fill="url(#gDD)" stroke="#5e5e60" stroke-width="1.6"/>
<rect x="2271" y="1298" width="2" height="87" fill="#2c2c2e"/><rect x="2273" y="1298" width="1.5" height="87" fill="#5a5a5c"/>
<path d="M2290 1334 H2316 L2303 1352 Z" fill="#2a2a2c"/>
<text x="1734" y="1351.2" font-size="31.5" fill="#fff" font-weight="bold" text-anchor="start" >Scoop 3dB</text>
<rect x="2455.5" y="1240.5" width="79" height="131.5" fill="#000"/>
<path d="M2455.5 1240.5 H2530 L2524 1248.5 H2463.5 V1361 L2455.5 1368 Z" fill="#6c7072"/>
<rect x="2463.5" y="1248.5" width="62" height="57.5" fill="url(#gPwrT)"/><rect x="2463.5" y="1306" width="62" height="55" fill="url(#gPwrB)"/>
<rect x="2463.5" y="1248.5" width="5" height="112.5" fill="#000" opacity="0.18"/><rect x="2520.5" y="1248.5" width="5" height="112.5" fill="#000" opacity="0.22"/>
<circle cx="2494" cy="1279" r="11" fill="none" stroke="#ffe9e4" stroke-width="1.7"/>
<rect x="2490.3" y="1322.5" width="7.6" height="21" fill="#f3e6df"/>
<text x="2441" y="1411.3" font-size="36" fill="#fff" font-weight="bold" text-anchor="start" >Power</text>
<path d="M229.8 1618.3 A80 80 0 1 1 307.4 1618.3" fill="none" stroke="#2b2b2b" stroke-width="3.5"/><path d="M229.8 1618.3 A80 80 0 1 1 307.4 1618.3" fill="none" stroke="#48d8e0" stroke-width="7" opacity="0.5" filter="url(#fBlur2)"/><path d="M229.8 1618.3 A80 80 0 1 1 307.4 1618.3" fill="none" stroke="#62ecf2" stroke-width="4.3"/><circle cx="268.6" cy="1555.3" r="69" fill="#000" opacity="0.55" filter="url(#fBlur3)"/><circle cx="268.6" cy="1548.3" r="67.5" fill="#191919"/><circle cx="268.6" cy="1548.3" r="62.5" fill="url(#gKnob)"/><clipPath id="cK1548"><circle cx="268.6" cy="1548.3" r="62.5"/></clipPath><clipPath id="cK1548t"><rect x="198.60000000000002" y="1478.3" width="140" height="70"/></clipPath><linearGradient id="cK1548g" gradientUnits="userSpaceOnUse" x1="0" y1="1486.3" x2="0" y2="1573.3"><stop offset="0" stop-color="#484848"/><stop offset="1" stop-color="#020202"/></linearGradient><g clip-path="url(#cK1548)"><path d="M175.7 1629.2 L387.6 1516.5 L443.9 1622.5 L232.0 1735.1 Z" fill="url(#cK1548g)"/></g><circle cx="268.6" cy="1548.3" r="59.3" fill="none" stroke="#0a0a0a" stroke-width="3.4" stroke-dasharray="2.7 3.05" opacity="0.75"/><circle cx="268.6" cy="1548.3" r="59.3" fill="none" stroke="#b5b5b5" stroke-width="3.4" stroke-dasharray="2.7 3.05" opacity="0.7" clip-path="url(#cK1548t)"/><path d="M9 0 L-6.5 -9.5 L-7.5 8 Z" transform="translate(289.6 1587.8) rotate(176)" fill="#b4b4b4"/><text x="268.6" y="1667.8" font-size="36" fill="#fff" font-weight="bold" text-anchor="middle" >Input</text><text x="268.6" y="1710.8" font-size="33.6" fill="#f0f0f0" font-weight="normal" text-anchor="middle" textLength="88" lengthAdjust="spacingAndGlyphs">10.00</text>
<path d="M229.8 1907.0 A80 80 0 1 1 307.4 1907.0" fill="none" stroke="#2b2b2b" stroke-width="3.5"/><path d="M229.8 1907.0 A80 80 0 1 1 347.4 1850.9" fill="none" stroke="#48d8e0" stroke-width="7" opacity="0.5" filter="url(#fBlur2)"/><path d="M229.8 1907.0 A80 80 0 1 1 347.4 1850.9" fill="none" stroke="#62ecf2" stroke-width="4.3"/><circle cx="268.6" cy="1844" r="69" fill="#000" opacity="0.55" filter="url(#fBlur3)"/><circle cx="268.6" cy="1837" r="67.5" fill="#191919"/><circle cx="268.6" cy="1837" r="62.5" fill="url(#gKnob)"/><clipPath id="cK1837"><circle cx="268.6" cy="1837" r="62.5"/></clipPath><clipPath id="cK1837t"><rect x="198.60000000000002" y="1767" width="140" height="70"/></clipPath><linearGradient id="cK1837g" gradientUnits="userSpaceOnUse" x1="0" y1="1775" x2="0" y2="1862"><stop offset="0" stop-color="#484848"/><stop offset="1" stop-color="#020202"/></linearGradient><g clip-path="url(#cK1837)"><path d="M275.1 1960.0 L316.8 1723.7 L435.0 1744.5 L393.3 1980.8 Z" fill="url(#cK1837g)"/></g><circle cx="268.6" cy="1837" r="59.3" fill="none" stroke="#0a0a0a" stroke-width="3.4" stroke-dasharray="2.7 3.05" opacity="0.75"/><circle cx="268.6" cy="1837" r="59.3" fill="none" stroke="#b5b5b5" stroke-width="3.4" stroke-dasharray="2.7 3.05" opacity="0.7" clip-path="url(#cK1837t)"/><path d="M9 0 L-6.5 -9.5 L-7.5 8 Z" transform="translate(312.6 1844.8) rotate(6)" fill="#b4b4b4"/><text x="268.6" y="1956.5" font-size="36" fill="#fff" font-weight="bold" text-anchor="middle" >Output</text><text x="268.6" y="1999.5" font-size="33.6" fill="#f0f0f0" font-weight="normal" text-anchor="middle" textLength="71.5" lengthAdjust="spacingAndGlyphs">8.44</text>
<text x="462.8" y="1503.7" font-size="30.5" fill="#fff" font-weight="bold" text-anchor="middle" >32</text><rect x="459.0" y="1559" width="7.6" height="357" fill="#000"/><rect x="436.1" y="1556.9" width="53.4" height="3.8" fill="#d6d6d6"/><rect x="436.1" y="1913.8" width="53.4" height="3.8" fill="#d6d6d6"/><rect x="433.8" y="1601.6" width="8.6" height="3.6" rx="1" fill="#e4e4e4"/><rect x="483.6" y="1601.6" width="8.6" height="3.6" rx="1" fill="#e4e4e4"/><rect x="433.8" y="1646.2" width="8.6" height="3.6" rx="1" fill="#e4e4e4"/><rect x="483.6" y="1646.2" width="8.6" height="3.6" rx="1" fill="#e4e4e4"/><rect x="433.8" y="1690.8" width="8.6" height="3.6" rx="1" fill="#e4e4e4"/><rect x="483.6" y="1690.8" width="8.6" height="3.6" rx="1" fill="#e4e4e4"/><rect x="433.8" y="1735.4" width="8.6" height="3.6" rx="1" fill="#e4e4e4"/><rect x="483.6" y="1735.4" width="8.6" height="3.6" rx="1" fill="#e4e4e4"/><rect x="433.8" y="1780.0" width="8.6" height="3.6" rx="1" fill="#e4e4e4"/><rect x="483.6" y="1780.0" width="8.6" height="3.6" rx="1" fill="#e4e4e4"/><rect x="433.8" y="1824.6" width="8.6" height="3.6" rx="1" fill="#e4e4e4"/><rect x="483.6" y="1824.6" width="8.6" height="3.6" rx="1" fill="#e4e4e4"/><rect x="433.8" y="1869.2" width="8.6" height="3.6" rx="1" fill="#e4e4e4"/><rect x="483.6" y="1869.2" width="8.6" height="3.6" rx="1" fill="#e4e4e4"/><use href="#thumb" x="439.3" y="1685.0"/><text x="462.8" y="1991.8" font-size="28.2" fill="#ececec" font-weight="normal" text-anchor="middle" textLength="60.2" lengthAdjust="spacingAndGlyphs">1.00</text><text x="557.2" y="1503.7" font-size="30.5" fill="#fff" font-weight="bold" text-anchor="middle" >65</text><rect x="553.4" y="1559" width="7.6" height="357" fill="#000"/><rect x="530.5" y="1556.9" width="53.4" height="3.8" fill="#d6d6d6"/><rect x="530.5" y="1913.8" width="53.4" height="3.8" fill="#d6d6d6"/><rect x="528.2" y="1601.6" width="8.6" height="3.6" rx="1" fill="#e4e4e4"/><rect x="578.0" y="1601.6" width="8.6" height="3.6" rx="1" fill="#e4e4e4"/><rect x="528.2" y="1646.2" width="8.6" height="3.6" rx="1" fill="#e4e4e4"/><rect x="578.0" y="1646.2" width="8.6" height="3.6" rx="1" fill="#e4e4e4"/><rect x="528.2" y="1690.8" width="8.6" height="3.6" rx="1" fill="#e4e4e4"/><rect x="578.0" y="1690.8" width="8.6" height="3.6" rx="1" fill="#e4e4e4"/><rect x="528.2" y="1735.4" width="8.6" height="3.6" rx="1" fill="#e4e4e4"/><rect x="578.0" y="1735.4" width="8.6" height="3.6" rx="1" fill="#e4e4e4"/><rect x="528.2" y="1780.0" width="8.6" height="3.6" rx="1" fill="#e4e4e4"/><rect x="578.0" y="1780.0" width="8.6" height="3.6" rx="1" fill="#e4e4e4"/><rect x="528.2" y="1824.6" width="8.6" height="3.6" rx="1" fill="#e4e4e4"/><rect x="578.0" y="1824.6" width="8.6" height="3.6" rx="1" fill="#e4e4e4"/><rect x="528.2" y="1869.2" width="8.6" height="3.6" rx="1" fill="#e4e4e4"/><rect x="578.0" y="1869.2" width="8.6" height="3.6" rx="1" fill="#e4e4e4"/><use href="#thumb" x="533.7" y="1669.0"/><text x="557.2" y="1991.8" font-size="28.2" fill="#ececec" font-weight="normal" text-anchor="middle" textLength="60.2" lengthAdjust="spacingAndGlyphs">2.00</text><text x="651.7" y="1503.7" font-size="30.5" fill="#fff" font-weight="bold" text-anchor="middle" >125</text><rect x="647.9" y="1559" width="7.6" height="357" fill="#000"/><rect x="625.0" y="1556.9" width="53.4" height="3.8" fill="#d6d6d6"/><rect x="625.0" y="1913.8" width="53.4" height="3.8" fill="#d6d6d6"/><rect x="622.7" y="1601.6" width="8.6" height="3.6" rx="1" fill="#e4e4e4"/><rect x="672.5" y="1601.6" width="8.6" height="3.6" rx="1" fill="#e4e4e4"/><rect x="622.7" y="1646.2" width="8.6" height="3.6" rx="1" fill="#e4e4e4"/><rect x="672.5" y="1646.2" width="8.6" height="3.6" rx="1" fill="#e4e4e4"/><rect x="622.7" y="1690.8" width="8.6" height="3.6" rx="1" fill="#e4e4e4"/><rect x="672.5" y="1690.8" width="8.6" height="3.6" rx="1" fill="#e4e4e4"/><rect x="622.7" y="1735.4" width="8.6" height="3.6" rx="1" fill="#e4e4e4"/><rect x="672.5" y="1735.4" width="8.6" height="3.6" rx="1" fill="#e4e4e4"/><rect x="622.7" y="1780.0" width="8.6" height="3.6" rx="1" fill="#e4e4e4"/><rect x="672.5" y="1780.0" width="8.6" height="3.6" rx="1" fill="#e4e4e4"/><rect x="622.7" y="1824.6" width="8.6" height="3.6" rx="1" fill="#e4e4e4"/><rect x="672.5" y="1824.6" width="8.6" height="3.6" rx="1" fill="#e4e4e4"/><rect x="622.7" y="1869.2" width="8.6" height="3.6" rx="1" fill="#e4e4e4"/><rect x="672.5" y="1869.2" width="8.6" height="3.6" rx="1" fill="#e4e4e4"/><use href="#thumb" x="628.2" y="1698.0"/><text x="651.7" y="1991.8" font-size="28.2" fill="#ececec" font-weight="normal" text-anchor="middle" textLength="60.2" lengthAdjust="spacingAndGlyphs">0.00</text><text x="746.1" y="1503.7" font-size="30.5" fill="#fff" font-weight="bold" text-anchor="middle" >250</text><rect x="742.3" y="1559" width="7.6" height="357" fill="#000"/><rect x="719.4" y="1556.9" width="53.4" height="3.8" fill="#d6d6d6"/><rect x="719.4" y="1913.8" width="53.4" height="3.8" fill="#d6d6d6"/><rect x="717.1" y="1601.6" width="8.6" height="3.6" rx="1" fill="#e4e4e4"/><rect x="766.9" y="1601.6" width="8.6" height="3.6" rx="1" fill="#e4e4e4"/><rect x="717.1" y="1646.2" width="8.6" height="3.6" rx="1" fill="#e4e4e4"/><rect x="766.9" y="1646.2" width="8.6" height="3.6" rx="1" fill="#e4e4e4"/><rect x="717.1" y="1690.8" width="8.6" height="3.6" rx="1" fill="#e4e4e4"/><rect x="766.9" y="1690.8" width="8.6" height="3.6" rx="1" fill="#e4e4e4"/><rect x="717.1" y="1735.4" width="8.6" height="3.6" rx="1" fill="#e4e4e4"/><rect x="766.9" y="1735.4" width="8.6" height="3.6" rx="1" fill="#e4e4e4"/><rect x="717.1" y="1780.0" width="8.6" height="3.6" rx="1" fill="#e4e4e4"/><rect x="766.9" y="1780.0" width="8.6" height="3.6" rx="1" fill="#e4e4e4"/><rect x="717.1" y="1824.6" width="8.6" height="3.6" rx="1" fill="#e4e4e4"/><rect x="766.9" y="1824.6" width="8.6" height="3.6" rx="1" fill="#e4e4e4"/><rect x="717.1" y="1869.2" width="8.6" height="3.6" rx="1" fill="#e4e4e4"/><rect x="766.9" y="1869.2" width="8.6" height="3.6" rx="1" fill="#e4e4e4"/><use href="#thumb" x="722.6" y="1713.8"/><text x="746.1" y="1991.8" font-size="28.2" fill="#ececec" font-weight="normal" text-anchor="middle" textLength="70.4" lengthAdjust="spacingAndGlyphs">-1.00</text><text x="840.5" y="1503.7" font-size="30.5" fill="#fff" font-weight="bold" text-anchor="middle" >500</text><rect x="836.7" y="1559" width="7.6" height="357" fill="#000"/><rect x="813.8" y="1556.9" width="53.4" height="3.8" fill="#d6d6d6"/><rect x="813.8" y="1913.8" width="53.4" height="3.8" fill="#d6d6d6"/><rect x="811.5" y="1601.6" width="8.6" height="3.6" rx="1" fill="#e4e4e4"/><rect x="861.3" y="1601.6" width="8.6" height="3.6" rx="1" fill="#e4e4e4"/><rect x="811.5" y="1646.2" width="8.6" height="3.6" rx="1" fill="#e4e4e4"/><rect x="861.3" y="1646.2" width="8.6" height="3.6" rx="1" fill="#e4e4e4"/><rect x="811.5" y="1690.8" width="8.6" height="3.6" rx="1" fill="#e4e4e4"/><rect x="861.3" y="1690.8" width="8.6" height="3.6" rx="1" fill="#e4e4e4"/><rect x="811.5" y="1735.4" width="8.6" height="3.6" rx="1" fill="#e4e4e4"/><rect x="861.3" y="1735.4" width="8.6" height="3.6" rx="1" fill="#e4e4e4"/><rect x="811.5" y="1780.0" width="8.6" height="3.6" rx="1" fill="#e4e4e4"/><rect x="861.3" y="1780.0" width="8.6" height="3.6" rx="1" fill="#e4e4e4"/><rect x="811.5" y="1824.6" width="8.6" height="3.6" rx="1" fill="#e4e4e4"/><rect x="861.3" y="1824.6" width="8.6" height="3.6" rx="1" fill="#e4e4e4"/><rect x="811.5" y="1869.2" width="8.6" height="3.6" rx="1" fill="#e4e4e4"/><rect x="861.3" y="1869.2" width="8.6" height="3.6" rx="1" fill="#e4e4e4"/><use href="#thumb" x="817.0" y="1729.8"/><text x="840.5" y="1991.8" font-size="28.2" fill="#ececec" font-weight="normal" text-anchor="middle" textLength="70.4" lengthAdjust="spacingAndGlyphs">-2.00</text><text x="935.0" y="1503.7" font-size="30.5" fill="#fff" font-weight="bold" text-anchor="middle" >1K</text><rect x="931.2" y="1559" width="7.6" height="357" fill="#000"/><rect x="908.2" y="1556.9" width="53.4" height="3.8" fill="#d6d6d6"/><rect x="908.2" y="1913.8" width="53.4" height="3.8" fill="#d6d6d6"/><rect x="906.0" y="1601.6" width="8.6" height="3.6" rx="1" fill="#e4e4e4"/><rect x="955.8" y="1601.6" width="8.6" height="3.6" rx="1" fill="#e4e4e4"/><rect x="906.0" y="1646.2" width="8.6" height="3.6" rx="1" fill="#e4e4e4"/><rect x="955.8" y="1646.2" width="8.6" height="3.6" rx="1" fill="#e4e4e4"/><rect x="906.0" y="1690.8" width="8.6" height="3.6" rx="1" fill="#e4e4e4"/><rect x="955.8" y="1690.8" width="8.6" height="3.6" rx="1" fill="#e4e4e4"/><rect x="906.0" y="1735.4" width="8.6" height="3.6" rx="1" fill="#e4e4e4"/><rect x="955.8" y="1735.4" width="8.6" height="3.6" rx="1" fill="#e4e4e4"/><rect x="906.0" y="1780.0" width="8.6" height="3.6" rx="1" fill="#e4e4e4"/><rect x="955.8" y="1780.0" width="8.6" height="3.6" rx="1" fill="#e4e4e4"/><rect x="906.0" y="1824.6" width="8.6" height="3.6" rx="1" fill="#e4e4e4"/><rect x="955.8" y="1824.6" width="8.6" height="3.6" rx="1" fill="#e4e4e4"/><rect x="906.0" y="1869.2" width="8.6" height="3.6" rx="1" fill="#e4e4e4"/><rect x="955.8" y="1869.2" width="8.6" height="3.6" rx="1" fill="#e4e4e4"/><use href="#thumb" x="911.5" y="1713.8"/><text x="935.0" y="1991.8" font-size="28.2" fill="#ececec" font-weight="normal" text-anchor="middle" textLength="70.4" lengthAdjust="spacingAndGlyphs">-1.00</text><text x="1029.4" y="1503.7" font-size="30.5" fill="#fff" font-weight="bold" text-anchor="middle" >2K</text><rect x="1025.6" y="1559" width="7.6" height="357" fill="#000"/><rect x="1002.7" y="1556.9" width="53.4" height="3.8" fill="#d6d6d6"/><rect x="1002.7" y="1913.8" width="53.4" height="3.8" fill="#d6d6d6"/><rect x="1000.4" y="1601.6" width="8.6" height="3.6" rx="1" fill="#e4e4e4"/><rect x="1050.2" y="1601.6" width="8.6" height="3.6" rx="1" fill="#e4e4e4"/><rect x="1000.4" y="1646.2" width="8.6" height="3.6" rx="1" fill="#e4e4e4"/><rect x="1050.2" y="1646.2" width="8.6" height="3.6" rx="1" fill="#e4e4e4"/><rect x="1000.4" y="1690.8" width="8.6" height="3.6" rx="1" fill="#e4e4e4"/><rect x="1050.2" y="1690.8" width="8.6" height="3.6" rx="1" fill="#e4e4e4"/><rect x="1000.4" y="1735.4" width="8.6" height="3.6" rx="1" fill="#e4e4e4"/><rect x="1050.2" y="1735.4" width="8.6" height="3.6" rx="1" fill="#e4e4e4"/><rect x="1000.4" y="1780.0" width="8.6" height="3.6" rx="1" fill="#e4e4e4"/><rect x="1050.2" y="1780.0" width="8.6" height="3.6" rx="1" fill="#e4e4e4"/><rect x="1000.4" y="1824.6" width="8.6" height="3.6" rx="1" fill="#e4e4e4"/><rect x="1050.2" y="1824.6" width="8.6" height="3.6" rx="1" fill="#e4e4e4"/><rect x="1000.4" y="1869.2" width="8.6" height="3.6" rx="1" fill="#e4e4e4"/><rect x="1050.2" y="1869.2" width="8.6" height="3.6" rx="1" fill="#e4e4e4"/><use href="#thumb" x="1005.9" y="1685.0"/><text x="1029.4" y="1991.8" font-size="28.2" fill="#ececec" font-weight="normal" text-anchor="middle" textLength="60.2" lengthAdjust="spacingAndGlyphs">1.00</text><text x="1123.8" y="1503.7" font-size="30.5" fill="#fff" font-weight="bold" text-anchor="middle" >4K</text><rect x="1120.0" y="1559" width="7.6" height="357" fill="#000"/><rect x="1097.1" y="1556.9" width="53.4" height="3.8" fill="#d6d6d6"/><rect x="1097.1" y="1913.8" width="53.4" height="3.8" fill="#d6d6d6"/><rect x="1094.8" y="1601.6" width="8.6" height="3.6" rx="1" fill="#e4e4e4"/><rect x="1144.6" y="1601.6" width="8.6" height="3.6" rx="1" fill="#e4e4e4"/><rect x="1094.8" y="1646.2" width="8.6" height="3.6" rx="1" fill="#e4e4e4"/><rect x="1144.6" y="1646.2" width="8.6" height="3.6" rx="1" fill="#e4e4e4"/><rect x="1094.8" y="1690.8" width="8.6" height="3.6" rx="1" fill="#e4e4e4"/><rect x="1144.6" y="1690.8" width="8.6" height="3.6" rx="1" fill="#e4e4e4"/><rect x="1094.8" y="1735.4" width="8.6" height="3.6" rx="1" fill="#e4e4e4"/><rect x="1144.6" y="1735.4" width="8.6" height="3.6" rx="1" fill="#e4e4e4"/><rect x="1094.8" y="1780.0" width="8.6" height="3.6" rx="1" fill="#e4e4e4"/><rect x="1144.6" y="1780.0" width="8.6" height="3.6" rx="1" fill="#e4e4e4"/><rect x="1094.8" y="1824.6" width="8.6" height="3.6" rx="1" fill="#e4e4e4"/><rect x="1144.6" y="1824.6" width="8.6" height="3.6" rx="1" fill="#e4e4e4"/><rect x="1094.8" y="1869.2" width="8.6" height="3.6" rx="1" fill="#e4e4e4"/><rect x="1144.6" y="1869.2" width="8.6" height="3.6" rx="1" fill="#e4e4e4"/><use href="#thumb" x="1100.3" y="1669.0"/><text x="1123.8" y="1991.8" font-size="28.2" fill="#ececec" font-weight="normal" text-anchor="middle" textLength="60.2" lengthAdjust="spacingAndGlyphs">2.00</text><text x="1218.2" y="1503.7" font-size="30.5" fill="#fff" font-weight="bold" text-anchor="middle" >8K</text><rect x="1214.4" y="1559" width="7.6" height="357" fill="#000"/><rect x="1191.5" y="1556.9" width="53.4" height="3.8" fill="#d6d6d6"/><rect x="1191.5" y="1913.8" width="53.4" height="3.8" fill="#d6d6d6"/><rect x="1189.2" y="1601.6" width="8.6" height="3.6" rx="1" fill="#e4e4e4"/><rect x="1239.0" y="1601.6" width="8.6" height="3.6" rx="1" fill="#e4e4e4"/><rect x="1189.2" y="1646.2" width="8.6" height="3.6" rx="1" fill="#e4e4e4"/><rect x="1239.0" y="1646.2" width="8.6" height="3.6" rx="1" fill="#e4e4e4"/><rect x="1189.2" y="1690.8" width="8.6" height="3.6" rx="1" fill="#e4e4e4"/><rect x="1239.0" y="1690.8" width="8.6" height="3.6" rx="1" fill="#e4e4e4"/><rect x="1189.2" y="1735.4" width="8.6" height="3.6" rx="1" fill="#e4e4e4"/><rect x="1239.0" y="1735.4" width="8.6" height="3.6" rx="1" fill="#e4e4e4"/><rect x="1189.2" y="1780.0" width="8.6" height="3.6" rx="1" fill="#e4e4e4"/><rect x="1239.0" y="1780.0" width="8.6" height="3.6" rx="1" fill="#e4e4e4"/><rect x="1189.2" y="1824.6" width="8.6" height="3.6" rx="1" fill="#e4e4e4"/><rect x="1239.0" y="1824.6" width="8.6" height="3.6" rx="1" fill="#e4e4e4"/><rect x="1189.2" y="1869.2" width="8.6" height="3.6" rx="1" fill="#e4e4e4"/><rect x="1239.0" y="1869.2" width="8.6" height="3.6" rx="1" fill="#e4e4e4"/><use href="#thumb" x="1194.7" y="1653.3"/><text x="1218.2" y="1991.8" font-size="28.2" fill="#ececec" font-weight="normal" text-anchor="middle" textLength="60.2" lengthAdjust="spacingAndGlyphs">3.00</text><text x="1312.7" y="1503.7" font-size="30.5" fill="#fff" font-weight="bold" text-anchor="middle" >16K</text><rect x="1308.9" y="1559" width="7.6" height="357" fill="#000"/><rect x="1286.0" y="1556.9" width="53.4" height="3.8" fill="#d6d6d6"/><rect x="1286.0" y="1913.8" width="53.4" height="3.8" fill="#d6d6d6"/><rect x="1283.7" y="1601.6" width="8.6" height="3.6" rx="1" fill="#e4e4e4"/><rect x="1333.5" y="1601.6" width="8.6" height="3.6" rx="1" fill="#e4e4e4"/><rect x="1283.7" y="1646.2" width="8.6" height="3.6" rx="1" fill="#e4e4e4"/><rect x="1333.5" y="1646.2" width="8.6" height="3.6" rx="1" fill="#e4e4e4"/><rect x="1283.7" y="1690.8" width="8.6" height="3.6" rx="1" fill="#e4e4e4"/><rect x="1333.5" y="1690.8" width="8.6" height="3.6" rx="1" fill="#e4e4e4"/><rect x="1283.7" y="1735.4" width="8.6" height="3.6" rx="1" fill="#e4e4e4"/><rect x="1333.5" y="1735.4" width="8.6" height="3.6" rx="1" fill="#e4e4e4"/><rect x="1283.7" y="1780.0" width="8.6" height="3.6" rx="1" fill="#e4e4e4"/><rect x="1333.5" y="1780.0" width="8.6" height="3.6" rx="1" fill="#e4e4e4"/><rect x="1283.7" y="1824.6" width="8.6" height="3.6" rx="1" fill="#e4e4e4"/><rect x="1333.5" y="1824.6" width="8.6" height="3.6" rx="1" fill="#e4e4e4"/><rect x="1283.7" y="1869.2" width="8.6" height="3.6" rx="1" fill="#e4e4e4"/><rect x="1333.5" y="1869.2" width="8.6" height="3.6" rx="1" fill="#e4e4e4"/><use href="#thumb" x="1289.2" y="1669.0"/><text x="1312.7" y="1991.8" font-size="28.2" fill="#ececec" font-weight="normal" text-anchor="middle" textLength="60.2" lengthAdjust="spacingAndGlyphs">2.00</text>
<text x="1460.3" y="1503.7" font-size="30.5" fill="#fff" font-weight="bold" text-anchor="middle" >32</text><rect x="1456.5" y="1559" width="7.6" height="357" fill="#000"/><rect x="1433.6" y="1556.9" width="53.4" height="3.8" fill="#d6d6d6"/><rect x="1433.6" y="1913.8" width="53.4" height="3.8" fill="#d6d6d6"/><rect x="1431.3" y="1601.6" width="8.6" height="3.6" rx="1" fill="#e4e4e4"/><rect x="1481.1" y="1601.6" width="8.6" height="3.6" rx="1" fill="#e4e4e4"/><rect x="1431.3" y="1646.2" width="8.6" height="3.6" rx="1" fill="#e4e4e4"/><rect x="1481.1" y="1646.2" width="8.6" height="3.6" rx="1" fill="#e4e4e4"/><rect x="1431.3" y="1690.8" width="8.6" height="3.6" rx="1" fill="#e4e4e4"/><rect x="1481.1" y="1690.8" width="8.6" height="3.6" rx="1" fill="#e4e4e4"/><rect x="1431.3" y="1735.4" width="8.6" height="3.6" rx="1" fill="#e4e4e4"/><rect x="1481.1" y="1735.4" width="8.6" height="3.6" rx="1" fill="#e4e4e4"/><rect x="1431.3" y="1780.0" width="8.6" height="3.6" rx="1" fill="#e4e4e4"/><rect x="1481.1" y="1780.0" width="8.6" height="3.6" rx="1" fill="#e4e4e4"/><rect x="1431.3" y="1824.6" width="8.6" height="3.6" rx="1" fill="#e4e4e4"/><rect x="1481.1" y="1824.6" width="8.6" height="3.6" rx="1" fill="#e4e4e4"/><rect x="1431.3" y="1869.2" width="8.6" height="3.6" rx="1" fill="#e4e4e4"/><rect x="1481.1" y="1869.2" width="8.6" height="3.6" rx="1" fill="#e4e4e4"/><use href="#thumb" x="1436.8" y="1685.0"/><text x="1460.3" y="1991.8" font-size="28.2" fill="#ececec" font-weight="normal" text-anchor="middle" textLength="60.2" lengthAdjust="spacingAndGlyphs">1.00</text><text x="1554.7" y="1503.7" font-size="30.5" fill="#fff" font-weight="bold" text-anchor="middle" >65</text><rect x="1550.9" y="1559" width="7.6" height="357" fill="#000"/><rect x="1528.0" y="1556.9" width="53.4" height="3.8" fill="#d6d6d6"/><rect x="1528.0" y="1913.8" width="53.4" height="3.8" fill="#d6d6d6"/><rect x="1525.7" y="1601.6" width="8.6" height="3.6" rx="1" fill="#e4e4e4"/><rect x="1575.5" y="1601.6" width="8.6" height="3.6" rx="1" fill="#e4e4e4"/><rect x="1525.7" y="1646.2" width="8.6" height="3.6" rx="1" fill="#e4e4e4"/><rect x="1575.5" y="1646.2" width="8.6" height="3.6" rx="1" fill="#e4e4e4"/><rect x="1525.7" y="1690.8" width="8.6" height="3.6" rx="1" fill="#e4e4e4"/><rect x="1575.5" y="1690.8" width="8.6" height="3.6" rx="1" fill="#e4e4e4"/><rect x="1525.7" y="1735.4" width="8.6" height="3.6" rx="1" fill="#e4e4e4"/><rect x="1575.5" y="1735.4" width="8.6" height="3.6" rx="1" fill="#e4e4e4"/><rect x="1525.7" y="1780.0" width="8.6" height="3.6" rx="1" fill="#e4e4e4"/><rect x="1575.5" y="1780.0" width="8.6" height="3.6" rx="1" fill="#e4e4e4"/><rect x="1525.7" y="1824.6" width="8.6" height="3.6" rx="1" fill="#e4e4e4"/><rect x="1575.5" y="1824.6" width="8.6" height="3.6" rx="1" fill="#e4e4e4"/><rect x="1525.7" y="1869.2" width="8.6" height="3.6" rx="1" fill="#e4e4e4"/><rect x="1575.5" y="1869.2" width="8.6" height="3.6" rx="1" fill="#e4e4e4"/><use href="#thumb" x="1531.2" y="1669.0"/><text x="1554.7" y="1991.8" font-size="28.2" fill="#ececec" font-weight="normal" text-anchor="middle" textLength="60.2" lengthAdjust="spacingAndGlyphs">2.00</text><text x="1649.2" y="1503.7" font-size="30.5" fill="#fff" font-weight="bold" text-anchor="middle" >125</text><rect x="1645.4" y="1559" width="7.6" height="357" fill="#000"/><rect x="1622.5" y="1556.9" width="53.4" height="3.8" fill="#d6d6d6"/><rect x="1622.5" y="1913.8" width="53.4" height="3.8" fill="#d6d6d6"/><rect x="1620.2" y="1601.6" width="8.6" height="3.6" rx="1" fill="#e4e4e4"/><rect x="1670.0" y="1601.6" width="8.6" height="3.6" rx="1" fill="#e4e4e4"/><rect x="1620.2" y="1646.2" width="8.6" height="3.6" rx="1" fill="#e4e4e4"/><rect x="1670.0" y="1646.2" width="8.6" height="3.6" rx="1" fill="#e4e4e4"/><rect x="1620.2" y="1690.8" width="8.6" height="3.6" rx="1" fill="#e4e4e4"/><rect x="1670.0" y="1690.8" width="8.6" height="3.6" rx="1" fill="#e4e4e4"/><rect x="1620.2" y="1735.4" width="8.6" height="3.6" rx="1" fill="#e4e4e4"/><rect x="1670.0" y="1735.4" width="8.6" height="3.6" rx="1" fill="#e4e4e4"/><rect x="1620.2" y="1780.0" width="8.6" height="3.6" rx="1" fill="#e4e4e4"/><rect x="1670.0" y="1780.0" width="8.6" height="3.6" rx="1" fill="#e4e4e4"/><rect x="1620.2" y="1824.6" width="8.6" height="3.6" rx="1" fill="#e4e4e4"/><rect x="1670.0" y="1824.6" width="8.6" height="3.6" rx="1" fill="#e4e4e4"/><rect x="1620.2" y="1869.2" width="8.6" height="3.6" rx="1" fill="#e4e4e4"/><rect x="1670.0" y="1869.2" width="8.6" height="3.6" rx="1" fill="#e4e4e4"/><use href="#thumb" x="1625.7" y="1698.0"/><text x="1649.2" y="1991.8" font-size="28.2" fill="#ececec" font-weight="normal" text-anchor="middle" textLength="60.2" lengthAdjust="spacingAndGlyphs">0.00</text><text x="1743.6" y="1503.7" font-size="30.5" fill="#fff" font-weight="bold" text-anchor="middle" >250</text><rect x="1739.8" y="1559" width="7.6" height="357" fill="#000"/><rect x="1716.9" y="1556.9" width="53.4" height="3.8" fill="#d6d6d6"/><rect x="1716.9" y="1913.8" width="53.4" height="3.8" fill="#d6d6d6"/><rect x="1714.6" y="1601.6" width="8.6" height="3.6" rx="1" fill="#e4e4e4"/><rect x="1764.4" y="1601.6" width="8.6" height="3.6" rx="1" fill="#e4e4e4"/><rect x="1714.6" y="1646.2" width="8.6" height="3.6" rx="1" fill="#e4e4e4"/><rect x="1764.4" y="1646.2" width="8.6" height="3.6" rx="1" fill="#e4e4e4"/><rect x="1714.6" y="1690.8" width="8.6" height="3.6" rx="1" fill="#e4e4e4"/><rect x="1764.4" y="1690.8" width="8.6" height="3.6" rx="1" fill="#e4e4e4"/><rect x="1714.6" y="1735.4" width="8.6" height="3.6" rx="1" fill="#e4e4e4"/><rect x="1764.4" y="1735.4" width="8.6" height="3.6" rx="1" fill="#e4e4e4"/><rect x="1714.6" y="1780.0" width="8.6" height="3.6" rx="1" fill="#e4e4e4"/><rect x="1764.4" y="1780.0" width="8.6" height="3.6" rx="1" fill="#e4e4e4"/><rect x="1714.6" y="1824.6" width="8.6" height="3.6" rx="1" fill="#e4e4e4"/><rect x="1764.4" y="1824.6" width="8.6" height="3.6" rx="1" fill="#e4e4e4"/><rect x="1714.6" y="1869.2" width="8.6" height="3.6" rx="1" fill="#e4e4e4"/><rect x="1764.4" y="1869.2" width="8.6" height="3.6" rx="1" fill="#e4e4e4"/><use href="#thumb" x="1720.1" y="1713.8"/><text x="1743.6" y="1991.8" font-size="28.2" fill="#ececec" font-weight="normal" text-anchor="middle" textLength="70.4" lengthAdjust="spacingAndGlyphs">-1.00</text><text x="1838.0" y="1503.7" font-size="30.5" fill="#fff" font-weight="bold" text-anchor="middle" >500</text><rect x="1834.2" y="1559" width="7.6" height="357" fill="#000"/><rect x="1811.3" y="1556.9" width="53.4" height="3.8" fill="#d6d6d6"/><rect x="1811.3" y="1913.8" width="53.4" height="3.8" fill="#d6d6d6"/><rect x="1809.0" y="1601.6" width="8.6" height="3.6" rx="1" fill="#e4e4e4"/><rect x="1858.8" y="1601.6" width="8.6" height="3.6" rx="1" fill="#e4e4e4"/><rect x="1809.0" y="1646.2" width="8.6" height="3.6" rx="1" fill="#e4e4e4"/><rect x="1858.8" y="1646.2" width="8.6" height="3.6" rx="1" fill="#e4e4e4"/><rect x="1809.0" y="1690.8" width="8.6" height="3.6" rx="1" fill="#e4e4e4"/><rect x="1858.8" y="1690.8" width="8.6" height="3.6" rx="1" fill="#e4e4e4"/><rect x="1809.0" y="1735.4" width="8.6" height="3.6" rx="1" fill="#e4e4e4"/><rect x="1858.8" y="1735.4" width="8.6" height="3.6" rx="1" fill="#e4e4e4"/><rect x="1809.0" y="1780.0" width="8.6" height="3.6" rx="1" fill="#e4e4e4"/><rect x="1858.8" y="1780.0" width="8.6" height="3.6" rx="1" fill="#e4e4e4"/><rect x="1809.0" y="1824.6" width="8.6" height="3.6" rx="1" fill="#e4e4e4"/><rect x="1858.8" y="1824.6" width="8.6" height="3.6" rx="1" fill="#e4e4e4"/><rect x="1809.0" y="1869.2" width="8.6" height="3.6" rx="1" fill="#e4e4e4"/><rect x="1858.8" y="1869.2" width="8.6" height="3.6" rx="1" fill="#e4e4e4"/><use href="#thumb" x="1814.5" y="1729.8"/><text x="1838.0" y="1991.8" font-size="28.2" fill="#ececec" font-weight="normal" text-anchor="middle" textLength="70.4" lengthAdjust="spacingAndGlyphs">-2.00</text><text x="1932.5" y="1503.7" font-size="30.5" fill="#fff" font-weight="bold" text-anchor="middle" >1K</text><rect x="1928.7" y="1559" width="7.6" height="357" fill="#000"/><rect x="1905.8" y="1556.9" width="53.4" height="3.8" fill="#d6d6d6"/><rect x="1905.8" y="1913.8" width="53.4" height="3.8" fill="#d6d6d6"/><rect x="1903.5" y="1601.6" width="8.6" height="3.6" rx="1" fill="#e4e4e4"/><rect x="1953.2" y="1601.6" width="8.6" height="3.6" rx="1" fill="#e4e4e4"/><rect x="1903.5" y="1646.2" width="8.6" height="3.6" rx="1" fill="#e4e4e4"/><rect x="1953.2" y="1646.2" width="8.6" height="3.6" rx="1" fill="#e4e4e4"/><rect x="1903.5" y="1690.8" width="8.6" height="3.6" rx="1" fill="#e4e4e4"/><rect x="1953.2" y="1690.8" width="8.6" height="3.6" rx="1" fill="#e4e4e4"/><rect x="1903.5" y="1735.4" width="8.6" height="3.6" rx="1" fill="#e4e4e4"/><rect x="1953.2" y="1735.4" width="8.6" height="3.6" rx="1" fill="#e4e4e4"/><rect x="1903.5" y="1780.0" width="8.6" height="3.6" rx="1" fill="#e4e4e4"/><rect x="1953.2" y="1780.0" width="8.6" height="3.6" rx="1" fill="#e4e4e4"/><rect x="1903.5" y="1824.6" width="8.6" height="3.6" rx="1" fill="#e4e4e4"/><rect x="1953.2" y="1824.6" width="8.6" height="3.6" rx="1" fill="#e4e4e4"/><rect x="1903.5" y="1869.2" width="8.6" height="3.6" rx="1" fill="#e4e4e4"/><rect x="1953.2" y="1869.2" width="8.6" height="3.6" rx="1" fill="#e4e4e4"/><use href="#thumb" x="1909.0" y="1713.8"/><text x="1932.5" y="1991.8" font-size="28.2" fill="#ececec" font-weight="normal" text-anchor="middle" textLength="70.4" lengthAdjust="spacingAndGlyphs">-1.00</text><text x="2026.9" y="1503.7" font-size="30.5" fill="#fff" font-weight="bold" text-anchor="middle" >2K</text><rect x="2023.1" y="1559" width="7.6" height="357" fill="#000"/><rect x="2000.2" y="1556.9" width="53.4" height="3.8" fill="#d6d6d6"/><rect x="2000.2" y="1913.8" width="53.4" height="3.8" fill="#d6d6d6"/><rect x="1997.9" y="1601.6" width="8.6" height="3.6" rx="1" fill="#e4e4e4"/><rect x="2047.7" y="1601.6" width="8.6" height="3.6" rx="1" fill="#e4e4e4"/><rect x="1997.9" y="1646.2" width="8.6" height="3.6" rx="1" fill="#e4e4e4"/><rect x="2047.7" y="1646.2" width="8.6" height="3.6" rx="1" fill="#e4e4e4"/><rect x="1997.9" y="1690.8" width="8.6" height="3.6" rx="1" fill="#e4e4e4"/><rect x="2047.7" y="1690.8" width="8.6" height="3.6" rx="1" fill="#e4e4e4"/><rect x="1997.9" y="1735.4" width="8.6" height="3.6" rx="1" fill="#e4e4e4"/><rect x="2047.7" y="1735.4" width="8.6" height="3.6" rx="1" fill="#e4e4e4"/><rect x="1997.9" y="1780.0" width="8.6" height="3.6" rx="1" fill="#e4e4e4"/><rect x="2047.7" y="1780.0" width="8.6" height="3.6" rx="1" fill="#e4e4e4"/><rect x="1997.9" y="1824.6" width="8.6" height="3.6" rx="1" fill="#e4e4e4"/><rect x="2047.7" y="1824.6" width="8.6" height="3.6" rx="1" fill="#e4e4e4"/><rect x="1997.9" y="1869.2" width="8.6" height="3.6" rx="1" fill="#e4e4e4"/><rect x="2047.7" y="1869.2" width="8.6" height="3.6" rx="1" fill="#e4e4e4"/><use href="#thumb" x="2003.4" y="1685.0"/><text x="2026.9" y="1991.8" font-size="28.2" fill="#ececec" font-weight="normal" text-anchor="middle" textLength="60.2" lengthAdjust="spacingAndGlyphs">1.00</text><text x="2121.3" y="1503.7" font-size="30.5" fill="#fff" font-weight="bold" text-anchor="middle" >4K</text><rect x="2117.5" y="1559" width="7.6" height="357" fill="#000"/><rect x="2094.6" y="1556.9" width="53.4" height="3.8" fill="#d6d6d6"/><rect x="2094.6" y="1913.8" width="53.4" height="3.8" fill="#d6d6d6"/><rect x="2092.3" y="1601.6" width="8.6" height="3.6" rx="1" fill="#e4e4e4"/><rect x="2142.1" y="1601.6" width="8.6" height="3.6" rx="1" fill="#e4e4e4"/><rect x="2092.3" y="1646.2" width="8.6" height="3.6" rx="1" fill="#e4e4e4"/><rect x="2142.1" y="1646.2" width="8.6" height="3.6" rx="1" fill="#e4e4e4"/><rect x="2092.3" y="1690.8" width="8.6" height="3.6" rx="1" fill="#e4e4e4"/><rect x="2142.1" y="1690.8" width="8.6" height="3.6" rx="1" fill="#e4e4e4"/><rect x="2092.3" y="1735.4" width="8.6" height="3.6" rx="1" fill="#e4e4e4"/><rect x="2142.1" y="1735.4" width="8.6" height="3.6" rx="1" fill="#e4e4e4"/><rect x="2092.3" y="1780.0" width="8.6" height="3.6" rx="1" fill="#e4e4e4"/><rect x="2142.1" y="1780.0" width="8.6" height="3.6" rx="1" fill="#e4e4e4"/><rect x="2092.3" y="1824.6" width="8.6" height="3.6" rx="1" fill="#e4e4e4"/><rect x="2142.1" y="1824.6" width="8.6" height="3.6" rx="1" fill="#e4e4e4"/><rect x="2092.3" y="1869.2" width="8.6" height="3.6" rx="1" fill="#e4e4e4"/><rect x="2142.1" y="1869.2" width="8.6" height="3.6" rx="1" fill="#e4e4e4"/><use href="#thumb" x="2097.8" y="1669.0"/><text x="2121.3" y="1991.8" font-size="28.2" fill="#ececec" font-weight="normal" text-anchor="middle" textLength="60.2" lengthAdjust="spacingAndGlyphs">2.00</text><text x="2215.7" y="1503.7" font-size="30.5" fill="#fff" font-weight="bold" text-anchor="middle" >8K</text><rect x="2211.9" y="1559" width="7.6" height="357" fill="#000"/><rect x="2189.0" y="1556.9" width="53.4" height="3.8" fill="#d6d6d6"/><rect x="2189.0" y="1913.8" width="53.4" height="3.8" fill="#d6d6d6"/><rect x="2186.7" y="1601.6" width="8.6" height="3.6" rx="1" fill="#e4e4e4"/><rect x="2236.5" y="1601.6" width="8.6" height="3.6" rx="1" fill="#e4e4e4"/><rect x="2186.7" y="1646.2" width="8.6" height="3.6" rx="1" fill="#e4e4e4"/><rect x="2236.5" y="1646.2" width="8.6" height="3.6" rx="1" fill="#e4e4e4"/><rect x="2186.7" y="1690.8" width="8.6" height="3.6" rx="1" fill="#e4e4e4"/><rect x="2236.5" y="1690.8" width="8.6" height="3.6" rx="1" fill="#e4e4e4"/><rect x="2186.7" y="1735.4" width="8.6" height="3.6" rx="1" fill="#e4e4e4"/><rect x="2236.5" y="1735.4" width="8.6" height="3.6" rx="1" fill="#e4e4e4"/><rect x="2186.7" y="1780.0" width="8.6" height="3.6" rx="1" fill="#e4e4e4"/><rect x="2236.5" y="1780.0" width="8.6" height="3.6" rx="1" fill="#e4e4e4"/><rect x="2186.7" y="1824.6" width="8.6" height="3.6" rx="1" fill="#e4e4e4"/><rect x="2236.5" y="1824.6" width="8.6" height="3.6" rx="1" fill="#e4e4e4"/><rect x="2186.7" y="1869.2" width="8.6" height="3.6" rx="1" fill="#e4e4e4"/><rect x="2236.5" y="1869.2" width="8.6" height="3.6" rx="1" fill="#e4e4e4"/><use href="#thumb" x="2192.2" y="1653.3"/><text x="2215.7" y="1991.8" font-size="28.2" fill="#ececec" font-weight="normal" text-anchor="middle" textLength="60.2" lengthAdjust="spacingAndGlyphs">3.00</text><text x="2310.2" y="1503.7" font-size="30.5" fill="#fff" font-weight="bold" text-anchor="middle" >16K</text><rect x="2306.4" y="1559" width="7.6" height="357" fill="#000"/><rect x="2283.5" y="1556.9" width="53.4" height="3.8" fill="#d6d6d6"/><rect x="2283.5" y="1913.8" width="53.4" height="3.8" fill="#d6d6d6"/><rect x="2281.2" y="1601.6" width="8.6" height="3.6" rx="1" fill="#e4e4e4"/><rect x="2331.0" y="1601.6" width="8.6" height="3.6" rx="1" fill="#e4e4e4"/><rect x="2281.2" y="1646.2" width="8.6" height="3.6" rx="1" fill="#e4e4e4"/><rect x="2331.0" y="1646.2" width="8.6" height="3.6" rx="1" fill="#e4e4e4"/><rect x="2281.2" y="1690.8" width="8.6" height="3.6" rx="1" fill="#e4e4e4"/><rect x="2331.0" y="1690.8" width="8.6" height="3.6" rx="1" fill="#e4e4e4"/><rect x="2281.2" y="1735.4" width="8.6" height="3.6" rx="1" fill="#e4e4e4"/><rect x="2331.0" y="1735.4" width="8.6" height="3.6" rx="1" fill="#e4e4e4"/><rect x="2281.2" y="1780.0" width="8.6" height="3.6" rx="1" fill="#e4e4e4"/><rect x="2331.0" y="1780.0" width="8.6" height="3.6" rx="1" fill="#e4e4e4"/><rect x="2281.2" y="1824.6" width="8.6" height="3.6" rx="1" fill="#e4e4e4"/><rect x="2331.0" y="1824.6" width="8.6" height="3.6" rx="1" fill="#e4e4e4"/><rect x="2281.2" y="1869.2" width="8.6" height="3.6" rx="1" fill="#e4e4e4"/><rect x="2331.0" y="1869.2" width="8.6" height="3.6" rx="1" fill="#e4e4e4"/><use href="#thumb" x="2286.7" y="1669.0"/><text x="2310.2" y="1991.8" font-size="28.2" fill="#ececec" font-weight="normal" text-anchor="middle" textLength="60.2" lengthAdjust="spacingAndGlyphs">2.00</text>
<use href="#toggle" x="2456.5" y="1534.5"/>
<text x="2535" y="1567.5" font-size="31" fill="#e6e6e6" font-weight="normal" text-anchor="start" >24</text>
<text x="2535" y="1630" font-size="31" fill="#e6e6e6" font-weight="normal" text-anchor="start" >12</text>
<text x="2482.5" y="1684" font-size="36" fill="#fff" font-weight="bold" text-anchor="middle" >Range dB</text>
<use href="#toggle" x="2456.5" y="1745"/>
<text x="2535" y="1778" font-size="31" fill="#e6e6e6" font-weight="normal" text-anchor="start" >On</text>
<text x="2535" y="1840.5" font-size="31" fill="#e6e6e6" font-weight="normal" text-anchor="start" >Off</text>
<text x="2482" y="1895.3" font-size="36" fill="#fff" font-weight="bold" text-anchor="middle" >Symetry</text>
</svg>
</body></html>
